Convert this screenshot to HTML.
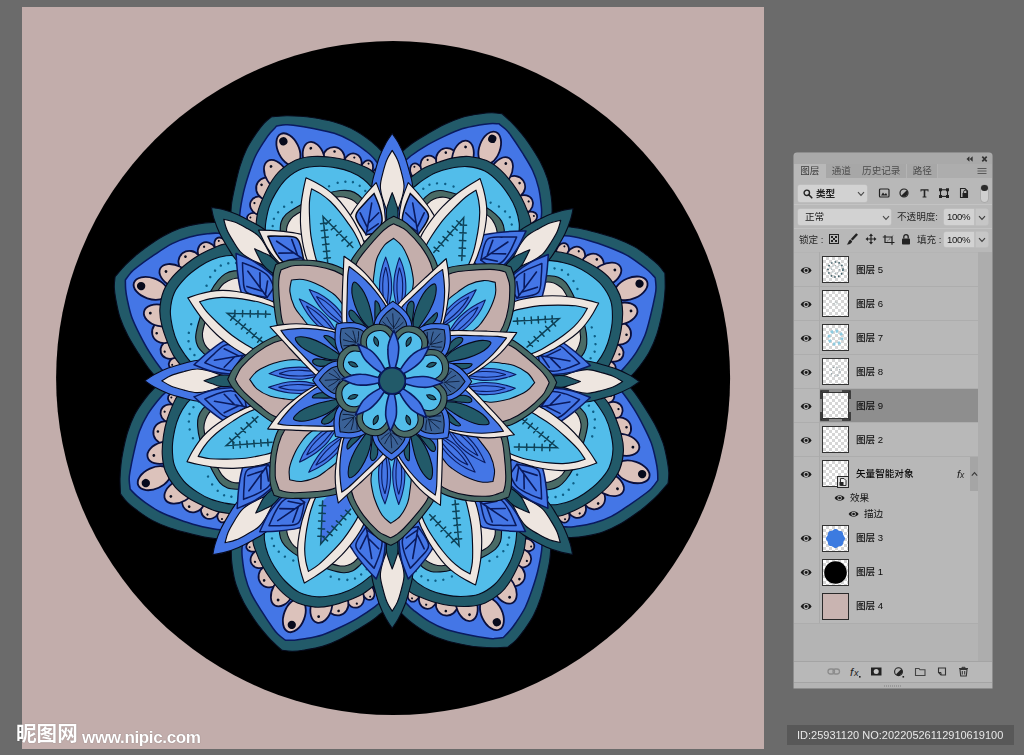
<!DOCTYPE html><html><head><meta charset="utf-8"><title>mandala</title><style>
html,body{margin:0;padding:0}
body{width:1024px;height:755px;background:#6b6b6b;position:relative;overflow:hidden;font-family:"Liberation Sans","Noto Sans CJK SC",sans-serif;font-size:9.5px;color:#151515}
.abs{position:absolute}
.tab,.t,.lname,.wm{will-change:transform}
#canvas{left:22px;top:7px;width:742.3px;height:742.3px;background:#c2adab}
#art{left:0;top:0}
#panel{left:794px;top:153px;width:197.5px;height:535px;background:#b8b8b8;border-radius:3px 3px 0 0;box-shadow:0 0 0 0.5px #b0b0b0}
.tab{top:163.5px;height:14px;line-height:14px;text-align:center;background:#a7a7a7;color:#4c4c4c;box-shadow:inset -1px 0 0 #b4b4b4;font-size:9.6px}
.tab.on{background:#b8b8b8;color:#3a3a3a;box-shadow:none}
.dd{background:#d2d2d2;border-radius:2px;box-shadow:0 0 0 0.5px #c3c3c3}
.sep{height:1px;background:#c3c3c3;left:794px;width:197.5px}

.rsep{left:794px;width:184px;height:1px;background:#adadad}
.thumb{background-color:#fff;background-image:linear-gradient(45deg,#d6d6d6 25%,transparent 25%,transparent 75%,#d6d6d6 75%),linear-gradient(45deg,#d6d6d6 25%,transparent 25%,transparent 75%,#d6d6d6 75%);background-size:6px 6px;background-position:0 0,3px 3px;box-shadow:0 0 0 1px #333;overflow:hidden}
.lname{left:855.5px;height:14px;line-height:14px;white-space:nowrap;font-size:9.6px;color:#0c0c0c;font-weight:500}
.t{white-space:nowrap;line-height:12px}
.wm{color:#fff;white-space:nowrap}
</style></head><body><div id="canvas" class="abs"></div><svg id="art" class="abs" width="1024" height="755" viewBox="0 0 1024 755"><circle cx="393.1" cy="378.1" r="337" fill="#000"/><g transform="translate(392.2 380.8)"><g transform="rotate(22.4)"><path d="M-30 -125C-35 -127.5 -51.7 -133.3 -60 -140C-68.3 -146.7 -75.7 -157 -80 -165C-84.3 -173 -85.3 -181.5 -86 -188C-86.7 -194.5 -85.6 -198.8 -84 -204C-82.4 -209.2 -78.6 -215 -76.6 -218.9C-74.5 -222.8 -74.1 -223.9 -71.7 -227.6C-69.3 -231.3 -65.7 -236.2 -62 -241.1C-58.3 -246 -53.8 -252 -49.5 -256.8C-45.2 -261.6 -40.7 -266.1 -36 -270C-31.3 -273.9 -25.4 -277.4 -21.1 -280C-16.8 -282.6 -13.7 -284.3 -10.2 -285.8C-6.7 -287.3 -1.7 -288.3 0 -288.8C2.3 -287.9 9.7 -285.4 14 -283.5C18.3 -281.6 22.3 -279.5 26 -277.5C29.7 -275.5 31.7 -274.4 36.2 -271.4C40.7 -268.4 48 -263.5 53 -259.3C58 -255.1 62.5 -250.7 66.5 -246C70.5 -241.3 74 -235.6 76.7 -231C79.5 -226.4 81.2 -222.7 83 -218.2C84.8 -213.7 86.3 -209 87.3 -204C88.3 -199 89.7 -194.5 89 -188C88.3 -181.5 87.5 -173 83 -165C78.5 -157 70.5 -146.7 62 -140C53.5 -133.3 37 -127.5 32 -125Z" fill="#225a69" stroke="#070a1c" stroke-width="1.05" stroke-linejoin="round" /><path d="M-48 -140C-51.5 -144.2 -64.6 -156.7 -69 -165C-73.4 -173.3 -73.8 -183.3 -74.5 -190C-75.2 -196.7 -74 -200.9 -73 -205C-72 -209.1 -71.4 -210.1 -68.8 -214.5C-66.2 -218.9 -61.2 -226.2 -57.2 -231.5C-53.2 -236.8 -49 -241.5 -44.7 -246.2C-40.4 -250.9 -36 -255.7 -31.4 -259.6C-26.8 -263.5 -20.7 -267.3 -16.8 -269.8C-12.9 -272.3 -10.9 -273.4 -8 -274.8C-5.1 -276.2 -0.9 -277.7 0.5 -278.3C1.9 -277.9 6.4 -276.8 9 -275.8C11.6 -274.8 11.9 -274.8 16 -272.2C20.1 -269.6 28 -264.3 33.6 -260.3C39.2 -256.3 45 -252.3 49.7 -248C54.4 -243.7 58.3 -239 61.8 -234.2C65.3 -229.4 68.6 -223.3 70.8 -219.2C73 -215.1 73.9 -213.6 75 -209.6C76.1 -205.6 77.6 -202.4 77.3 -195C77 -187.6 77.2 -174.2 73 -165C68.8 -155.8 55.5 -144.2 52 -140Z" fill="#4476e6" stroke="#0a1a5e" stroke-width="1.5" stroke-linejoin="round" /><g transform="translate(71.5 -193.4) rotate(55)"><ellipse rx="4.6" ry="7" fill="#dcc2bb" stroke="#0a0f3c" stroke-width="1.75"/><circle cy="-4.3" r="0.9" fill="#070a1c"/></g><g transform="translate(-64.3 -193.4) rotate(-55)"><ellipse rx="4.6" ry="7" fill="#dcc2bb" stroke="#0a0f3c" stroke-width="1.75"/><circle cy="-4.3" r="0.9" fill="#070a1c"/></g><g transform="translate(64.4 -202.7) rotate(46)"><ellipse rx="6" ry="8.5" fill="#dcc2bb" stroke="#0a0f3c" stroke-width="1.75"/><circle cy="-5.3" r="1" fill="#070a1c"/></g><g transform="translate(-57.2 -202.7) rotate(-46)"><ellipse rx="6" ry="8.5" fill="#dcc2bb" stroke="#0a0f3c" stroke-width="1.75"/><circle cy="-5.3" r="1" fill="#070a1c"/></g><g transform="translate(53.7 -212.9) rotate(40)"><ellipse rx="9" ry="10.3" fill="#dcc2bb" stroke="#0a0f3c" stroke-width="1.75"/><circle cy="-6.4" r="1.1" fill="#070a1c"/></g><g transform="translate(-47.3 -212.9) rotate(-40)"><ellipse rx="9" ry="10.3" fill="#dcc2bb" stroke="#0a0f3c" stroke-width="1.75"/><circle cy="-6.4" r="1.1" fill="#070a1c"/></g><g transform="translate(38.6 -225.3) rotate(32)"><ellipse rx="11" ry="11.6" fill="#dcc2bb" stroke="#0a0f3c" stroke-width="1.75"/><circle cy="-7.2" r="1.3" fill="#070a1c"/></g><g transform="translate(-33.6 -225.3) rotate(-32)"><ellipse rx="11" ry="11.6" fill="#dcc2bb" stroke="#0a0f3c" stroke-width="1.75"/><circle cy="-7.2" r="1.3" fill="#070a1c"/></g><g transform="translate(21 -234) rotate(7)"><ellipse rx="10.4" ry="16.5" fill="#dcc2bb" stroke="#0a0f3c" stroke-width="1.75"/><circle cy="-10.2" r="1.4" fill="#070a1c"/></g><g transform="translate(-20 -234) rotate(-7)"><ellipse rx="10.4" ry="16.5" fill="#dcc2bb" stroke="#0a0f3c" stroke-width="1.75"/><circle cy="-10.2" r="1.4" fill="#070a1c"/></g><ellipse cx="1.5" cy="-252.3" rx="10.3" ry="17.2" transform="rotate(-2 1.5 -252.3)" fill="#dcc2bb" stroke="#0a0f3c" stroke-width="1.8"/><circle cx="0.3" cy="-261.8" r="4.1" fill="#070a1c"/><path d="M-42 -130C-45.5 -133.3 -58.7 -143.3 -63 -150C-67.3 -156.7 -67.5 -164.2 -68 -170C-68.5 -175.8 -67.3 -180.8 -66 -185C-64.7 -189.2 -62.5 -191.5 -60.2 -195.3C-57.9 -199.2 -55.1 -204.4 -52.2 -208.1C-49.3 -211.8 -46.7 -214.2 -42.8 -217.7C-38.9 -221.2 -33.3 -226.1 -28.6 -229.3C-23.9 -232.5 -19.8 -235 -14.5 -236.7C-9.2 -238.4 -2.5 -239.7 3.3 -239.6C9.1 -239.5 14.4 -238.1 20 -236.1C25.6 -234.1 31.7 -230.8 36.7 -227.8C41.7 -224.8 46.1 -221.6 50.2 -218.2C54.3 -214.8 58.5 -210.5 61.3 -207.5C64.1 -204.5 65.3 -203.7 67.1 -200.4C68.9 -197.2 70.8 -192.7 72 -188C73.2 -183.3 74.5 -178.3 74 -172C73.5 -165.7 73.3 -157 69 -150C64.7 -143 51.5 -133.3 48 -130Z" fill="#225a69" stroke="#070a1c" stroke-width="1.1" stroke-linejoin="round" /><path d="M-36 -135C-38.7 -137.8 -48.5 -146.2 -52 -152C-55.5 -157.8 -56.3 -165 -57 -170C-57.7 -175 -56.7 -178.8 -56 -182C-55.3 -185.2 -54.2 -186.3 -52.8 -188.9C-51.4 -191.5 -50.1 -194.3 -47.8 -197.6C-45.5 -200.9 -42.4 -205.4 -39.1 -208.8C-35.8 -212.2 -32.3 -215.2 -27.8 -218.2C-23.3 -221.2 -17.8 -224.8 -12.2 -226.6C-6.6 -228.4 -0.2 -229.6 5.7 -229.2C11.6 -228.8 17.6 -226.4 23 -224.1C28.4 -221.8 33.9 -218.1 38.2 -215.1C42.5 -212.1 45.4 -209.5 48.6 -206.1C51.8 -202.7 55.1 -198.1 57.2 -194.4C59.3 -190.7 60 -187.9 61 -184C62 -180.1 63.3 -176.3 63 -171C62.7 -165.7 62.5 -158 59 -152C55.5 -146 44.8 -137.8 42 -135Z" fill="#52bdea" stroke="#070a1c" stroke-width="1.1" stroke-linejoin="round" /><circle cx="-44.4" cy="-189.4" r="1.2" fill="#0e5f86"/><circle cx="-40.3" cy="-195.5" r="1.2" fill="#0e5f86"/><circle cx="-33.8" cy="-199.6" r="1.2" fill="#0e5f86"/><circle cx="-26" cy="-202.2" r="1.2" fill="#0e5f86"/><circle cx="-17.3" cy="-203" r="1.2" fill="#0e5f86"/><circle cx="23.1" cy="-202.2" r="1.2" fill="#0e5f86"/><circle cx="32.3" cy="-201.8" r="1.2" fill="#0e5f86"/><circle cx="39.8" cy="-199.6" r="1.2" fill="#0e5f86"/><circle cx="46.4" cy="-196.1" r="1.2" fill="#0e5f86"/><circle cx="51" cy="-190" r="1.2" fill="#0e5f86"/><circle cx="-47.5" cy="-182.5" r="1.2" fill="#0e5f86"/><circle cx="54" cy="-183" r="1.2" fill="#0e5f86"/><path d="M-42 -160C-41.9 -162.5 -41.9 -171.3 -41.5 -175C-41.1 -178.7 -40.6 -179.6 -39.5 -182C-38.4 -184.4 -37 -187.5 -35 -189.6C-33 -191.7 -31 -193.3 -27.5 -194.5C-24 -195.7 -19.1 -196.3 -14 -196.8C-8.9 -197.3 -2.7 -197.4 3 -197.3C8.7 -197.2 15.2 -196.9 20 -196.3C24.8 -195.7 28.5 -194.7 31.9 -193.5C35.3 -192.3 37.9 -191.2 40.3 -189.3C42.7 -187.4 44.7 -184.8 46.1 -182.2C47.5 -179.6 48 -177.7 48.5 -174C49 -170.3 48.9 -162.3 49 -160Z" fill="#4a6b66" stroke="#070a1c" stroke-width="1.1" stroke-linejoin="round" /><path d="M-36 -160C-35.9 -162.3 -36 -170.5 -35.5 -174C-35 -177.5 -34.2 -179 -33 -181C-31.8 -183 -30.3 -184.6 -28.5 -186C-26.7 -187.4 -24.9 -188.7 -22 -189.5C-19.1 -190.3 -15.2 -190.7 -11 -191C-6.8 -191.3 -1.7 -191.5 3 -191.5C7.7 -191.5 12.8 -191.3 17 -190.8C21.2 -190.3 25 -189.6 28 -188.5C31 -187.4 33 -185.8 35 -184C37 -182.2 38.8 -180.3 40 -178C41.2 -175.7 42 -173 42.5 -170C43 -167 42.9 -161.7 43 -160Z" fill="#eee6e0" stroke="#070a1c" stroke-width="1.1" stroke-linejoin="round" /></g><g transform="rotate(68.5) scale(1.015)"><path d="M-30 -125C-35 -127.5 -51.7 -133.3 -60 -140C-68.3 -146.7 -75.7 -157 -80 -165C-84.3 -173 -85.3 -181.5 -86 -188C-86.7 -194.5 -85.6 -198.8 -84 -204C-82.4 -209.2 -78.6 -215 -76.6 -218.9C-74.5 -222.8 -74.1 -223.9 -71.7 -227.6C-69.3 -231.3 -65.7 -236.2 -62 -241.1C-58.3 -246 -53.8 -252 -49.5 -256.8C-45.2 -261.6 -40.7 -266.1 -36 -270C-31.3 -273.9 -25.4 -277.4 -21.1 -280C-16.8 -282.6 -13.7 -284.3 -10.2 -285.8C-6.7 -287.3 -1.7 -288.3 0 -288.8C2.3 -287.9 9.7 -285.4 14 -283.5C18.3 -281.6 22.3 -279.5 26 -277.5C29.7 -275.5 31.7 -274.4 36.2 -271.4C40.7 -268.4 48 -263.5 53 -259.3C58 -255.1 62.5 -250.7 66.5 -246C70.5 -241.3 74 -235.6 76.7 -231C79.5 -226.4 81.2 -222.7 83 -218.2C84.8 -213.7 86.3 -209 87.3 -204C88.3 -199 89.7 -194.5 89 -188C88.3 -181.5 87.5 -173 83 -165C78.5 -157 70.5 -146.7 62 -140C53.5 -133.3 37 -127.5 32 -125Z" fill="#225a69" stroke="#070a1c" stroke-width="1.05" stroke-linejoin="round" /><path d="M-48 -140C-51.5 -144.2 -64.6 -156.7 -69 -165C-73.4 -173.3 -73.8 -183.3 -74.5 -190C-75.2 -196.7 -74 -200.9 -73 -205C-72 -209.1 -71.4 -210.1 -68.8 -214.5C-66.2 -218.9 -61.2 -226.2 -57.2 -231.5C-53.2 -236.8 -49 -241.5 -44.7 -246.2C-40.4 -250.9 -36 -255.7 -31.4 -259.6C-26.8 -263.5 -20.7 -267.3 -16.8 -269.8C-12.9 -272.3 -10.9 -273.4 -8 -274.8C-5.1 -276.2 -0.9 -277.7 0.5 -278.3C1.9 -277.9 6.4 -276.8 9 -275.8C11.6 -274.8 11.9 -274.8 16 -272.2C20.1 -269.6 28 -264.3 33.6 -260.3C39.2 -256.3 45 -252.3 49.7 -248C54.4 -243.7 58.3 -239 61.8 -234.2C65.3 -229.4 68.6 -223.3 70.8 -219.2C73 -215.1 73.9 -213.6 75 -209.6C76.1 -205.6 77.6 -202.4 77.3 -195C77 -187.6 77.2 -174.2 73 -165C68.8 -155.8 55.5 -144.2 52 -140Z" fill="#4476e6" stroke="#0a1a5e" stroke-width="1.5" stroke-linejoin="round" /><g transform="translate(71.5 -193.4) rotate(55)"><ellipse rx="4.6" ry="7" fill="#dcc2bb" stroke="#0a0f3c" stroke-width="1.75"/><circle cy="-4.3" r="0.9" fill="#070a1c"/></g><g transform="translate(-64.3 -193.4) rotate(-55)"><ellipse rx="4.6" ry="7" fill="#dcc2bb" stroke="#0a0f3c" stroke-width="1.75"/><circle cy="-4.3" r="0.9" fill="#070a1c"/></g><g transform="translate(64.4 -202.7) rotate(46)"><ellipse rx="6" ry="8.5" fill="#dcc2bb" stroke="#0a0f3c" stroke-width="1.75"/><circle cy="-5.3" r="1" fill="#070a1c"/></g><g transform="translate(-57.2 -202.7) rotate(-46)"><ellipse rx="6" ry="8.5" fill="#dcc2bb" stroke="#0a0f3c" stroke-width="1.75"/><circle cy="-5.3" r="1" fill="#070a1c"/></g><g transform="translate(53.7 -212.9) rotate(40)"><ellipse rx="9" ry="10.3" fill="#dcc2bb" stroke="#0a0f3c" stroke-width="1.75"/><circle cy="-6.4" r="1.1" fill="#070a1c"/></g><g transform="translate(-47.3 -212.9) rotate(-40)"><ellipse rx="9" ry="10.3" fill="#dcc2bb" stroke="#0a0f3c" stroke-width="1.75"/><circle cy="-6.4" r="1.1" fill="#070a1c"/></g><g transform="translate(38.6 -225.3) rotate(32)"><ellipse rx="11" ry="11.6" fill="#dcc2bb" stroke="#0a0f3c" stroke-width="1.75"/><circle cy="-7.2" r="1.3" fill="#070a1c"/></g><g transform="translate(-33.6 -225.3) rotate(-32)"><ellipse rx="11" ry="11.6" fill="#dcc2bb" stroke="#0a0f3c" stroke-width="1.75"/><circle cy="-7.2" r="1.3" fill="#070a1c"/></g><g transform="translate(21 -234) rotate(7)"><ellipse rx="10.4" ry="16.5" fill="#dcc2bb" stroke="#0a0f3c" stroke-width="1.75"/><circle cy="-10.2" r="1.4" fill="#070a1c"/></g><g transform="translate(-20 -234) rotate(-7)"><ellipse rx="10.4" ry="16.5" fill="#dcc2bb" stroke="#0a0f3c" stroke-width="1.75"/><circle cy="-10.2" r="1.4" fill="#070a1c"/></g><ellipse cx="1.5" cy="-252.3" rx="10.3" ry="17.2" transform="rotate(-2 1.5 -252.3)" fill="#dcc2bb" stroke="#0a0f3c" stroke-width="1.8"/><circle cx="0.3" cy="-261.8" r="4.1" fill="#070a1c"/><path d="M-42 -130C-45.5 -133.3 -58.7 -143.3 -63 -150C-67.3 -156.7 -67.5 -164.2 -68 -170C-68.5 -175.8 -67.3 -180.8 -66 -185C-64.7 -189.2 -62.5 -191.5 -60.2 -195.3C-57.9 -199.2 -55.1 -204.4 -52.2 -208.1C-49.3 -211.8 -46.7 -214.2 -42.8 -217.7C-38.9 -221.2 -33.3 -226.1 -28.6 -229.3C-23.9 -232.5 -19.8 -235 -14.5 -236.7C-9.2 -238.4 -2.5 -239.7 3.3 -239.6C9.1 -239.5 14.4 -238.1 20 -236.1C25.6 -234.1 31.7 -230.8 36.7 -227.8C41.7 -224.8 46.1 -221.6 50.2 -218.2C54.3 -214.8 58.5 -210.5 61.3 -207.5C64.1 -204.5 65.3 -203.7 67.1 -200.4C68.9 -197.2 70.8 -192.7 72 -188C73.2 -183.3 74.5 -178.3 74 -172C73.5 -165.7 73.3 -157 69 -150C64.7 -143 51.5 -133.3 48 -130Z" fill="#225a69" stroke="#070a1c" stroke-width="1.1" stroke-linejoin="round" /><path d="M-36 -135C-38.7 -137.8 -48.5 -146.2 -52 -152C-55.5 -157.8 -56.3 -165 -57 -170C-57.7 -175 -56.7 -178.8 -56 -182C-55.3 -185.2 -54.2 -186.3 -52.8 -188.9C-51.4 -191.5 -50.1 -194.3 -47.8 -197.6C-45.5 -200.9 -42.4 -205.4 -39.1 -208.8C-35.8 -212.2 -32.3 -215.2 -27.8 -218.2C-23.3 -221.2 -17.8 -224.8 -12.2 -226.6C-6.6 -228.4 -0.2 -229.6 5.7 -229.2C11.6 -228.8 17.6 -226.4 23 -224.1C28.4 -221.8 33.9 -218.1 38.2 -215.1C42.5 -212.1 45.4 -209.5 48.6 -206.1C51.8 -202.7 55.1 -198.1 57.2 -194.4C59.3 -190.7 60 -187.9 61 -184C62 -180.1 63.3 -176.3 63 -171C62.7 -165.7 62.5 -158 59 -152C55.5 -146 44.8 -137.8 42 -135Z" fill="#52bdea" stroke="#070a1c" stroke-width="1.1" stroke-linejoin="round" /><circle cx="-44.4" cy="-189.4" r="1.2" fill="#0e5f86"/><circle cx="-40.3" cy="-195.5" r="1.2" fill="#0e5f86"/><circle cx="-33.8" cy="-199.6" r="1.2" fill="#0e5f86"/><circle cx="-26" cy="-202.2" r="1.2" fill="#0e5f86"/><circle cx="-17.3" cy="-203" r="1.2" fill="#0e5f86"/><circle cx="23.1" cy="-202.2" r="1.2" fill="#0e5f86"/><circle cx="32.3" cy="-201.8" r="1.2" fill="#0e5f86"/><circle cx="39.8" cy="-199.6" r="1.2" fill="#0e5f86"/><circle cx="46.4" cy="-196.1" r="1.2" fill="#0e5f86"/><circle cx="51" cy="-190" r="1.2" fill="#0e5f86"/><circle cx="-47.5" cy="-182.5" r="1.2" fill="#0e5f86"/><circle cx="54" cy="-183" r="1.2" fill="#0e5f86"/><path d="M-42 -160C-41.9 -162.5 -41.9 -171.3 -41.5 -175C-41.1 -178.7 -40.6 -179.6 -39.5 -182C-38.4 -184.4 -37 -187.5 -35 -189.6C-33 -191.7 -31 -193.3 -27.5 -194.5C-24 -195.7 -19.1 -196.3 -14 -196.8C-8.9 -197.3 -2.7 -197.4 3 -197.3C8.7 -197.2 15.2 -196.9 20 -196.3C24.8 -195.7 28.5 -194.7 31.9 -193.5C35.3 -192.3 37.9 -191.2 40.3 -189.3C42.7 -187.4 44.7 -184.8 46.1 -182.2C47.5 -179.6 48 -177.7 48.5 -174C49 -170.3 48.9 -162.3 49 -160Z" fill="#4a6b66" stroke="#070a1c" stroke-width="1.1" stroke-linejoin="round" /><path d="M-36 -160C-35.9 -162.3 -36 -170.5 -35.5 -174C-35 -177.5 -34.2 -179 -33 -181C-31.8 -183 -30.3 -184.6 -28.5 -186C-26.7 -187.4 -24.9 -188.7 -22 -189.5C-19.1 -190.3 -15.2 -190.7 -11 -191C-6.8 -191.3 -1.7 -191.5 3 -191.5C7.7 -191.5 12.8 -191.3 17 -190.8C21.2 -190.3 25 -189.6 28 -188.5C31 -187.4 33 -185.8 35 -184C37 -182.2 38.8 -180.3 40 -178C41.2 -175.7 42 -173 42.5 -170C43 -167 42.9 -161.7 43 -160Z" fill="#eee6e0" stroke="#070a1c" stroke-width="1.1" stroke-linejoin="round" /></g><g transform="rotate(110.4) scale(1.019)"><path d="M-30 -125C-35 -127.5 -51.7 -133.3 -60 -140C-68.3 -146.7 -75.7 -157 -80 -165C-84.3 -173 -85.3 -181.5 -86 -188C-86.7 -194.5 -85.6 -198.8 -84 -204C-82.4 -209.2 -78.6 -215 -76.6 -218.9C-74.5 -222.8 -74.1 -223.9 -71.7 -227.6C-69.3 -231.3 -65.7 -236.2 -62 -241.1C-58.3 -246 -53.8 -252 -49.5 -256.8C-45.2 -261.6 -40.7 -266.1 -36 -270C-31.3 -273.9 -25.4 -277.4 -21.1 -280C-16.8 -282.6 -13.7 -284.3 -10.2 -285.8C-6.7 -287.3 -1.7 -288.3 0 -288.8C2.3 -287.9 9.7 -285.4 14 -283.5C18.3 -281.6 22.3 -279.5 26 -277.5C29.7 -275.5 31.7 -274.4 36.2 -271.4C40.7 -268.4 48 -263.5 53 -259.3C58 -255.1 62.5 -250.7 66.5 -246C70.5 -241.3 74 -235.6 76.7 -231C79.5 -226.4 81.2 -222.7 83 -218.2C84.8 -213.7 86.3 -209 87.3 -204C88.3 -199 89.7 -194.5 89 -188C88.3 -181.5 87.5 -173 83 -165C78.5 -157 70.5 -146.7 62 -140C53.5 -133.3 37 -127.5 32 -125Z" fill="#225a69" stroke="#070a1c" stroke-width="1.05" stroke-linejoin="round" /><path d="M-48 -140C-51.5 -144.2 -64.6 -156.7 -69 -165C-73.4 -173.3 -73.8 -183.3 -74.5 -190C-75.2 -196.7 -74 -200.9 -73 -205C-72 -209.1 -71.4 -210.1 -68.8 -214.5C-66.2 -218.9 -61.2 -226.2 -57.2 -231.5C-53.2 -236.8 -49 -241.5 -44.7 -246.2C-40.4 -250.9 -36 -255.7 -31.4 -259.6C-26.8 -263.5 -20.7 -267.3 -16.8 -269.8C-12.9 -272.3 -10.9 -273.4 -8 -274.8C-5.1 -276.2 -0.9 -277.7 0.5 -278.3C1.9 -277.9 6.4 -276.8 9 -275.8C11.6 -274.8 11.9 -274.8 16 -272.2C20.1 -269.6 28 -264.3 33.6 -260.3C39.2 -256.3 45 -252.3 49.7 -248C54.4 -243.7 58.3 -239 61.8 -234.2C65.3 -229.4 68.6 -223.3 70.8 -219.2C73 -215.1 73.9 -213.6 75 -209.6C76.1 -205.6 77.6 -202.4 77.3 -195C77 -187.6 77.2 -174.2 73 -165C68.8 -155.8 55.5 -144.2 52 -140Z" fill="#4476e6" stroke="#0a1a5e" stroke-width="1.5" stroke-linejoin="round" /><g transform="translate(71.5 -193.4) rotate(55)"><ellipse rx="4.6" ry="7" fill="#dcc2bb" stroke="#0a0f3c" stroke-width="1.75"/><circle cy="-4.3" r="0.9" fill="#070a1c"/></g><g transform="translate(-64.3 -193.4) rotate(-55)"><ellipse rx="4.6" ry="7" fill="#dcc2bb" stroke="#0a0f3c" stroke-width="1.75"/><circle cy="-4.3" r="0.9" fill="#070a1c"/></g><g transform="translate(64.4 -202.7) rotate(46)"><ellipse rx="6" ry="8.5" fill="#dcc2bb" stroke="#0a0f3c" stroke-width="1.75"/><circle cy="-5.3" r="1" fill="#070a1c"/></g><g transform="translate(-57.2 -202.7) rotate(-46)"><ellipse rx="6" ry="8.5" fill="#dcc2bb" stroke="#0a0f3c" stroke-width="1.75"/><circle cy="-5.3" r="1" fill="#070a1c"/></g><g transform="translate(53.7 -212.9) rotate(40)"><ellipse rx="9" ry="10.3" fill="#dcc2bb" stroke="#0a0f3c" stroke-width="1.75"/><circle cy="-6.4" r="1.1" fill="#070a1c"/></g><g transform="translate(-47.3 -212.9) rotate(-40)"><ellipse rx="9" ry="10.3" fill="#dcc2bb" stroke="#0a0f3c" stroke-width="1.75"/><circle cy="-6.4" r="1.1" fill="#070a1c"/></g><g transform="translate(38.6 -225.3) rotate(32)"><ellipse rx="11" ry="11.6" fill="#dcc2bb" stroke="#0a0f3c" stroke-width="1.75"/><circle cy="-7.2" r="1.3" fill="#070a1c"/></g><g transform="translate(-33.6 -225.3) rotate(-32)"><ellipse rx="11" ry="11.6" fill="#dcc2bb" stroke="#0a0f3c" stroke-width="1.75"/><circle cy="-7.2" r="1.3" fill="#070a1c"/></g><g transform="translate(21 -234) rotate(7)"><ellipse rx="10.4" ry="16.5" fill="#dcc2bb" stroke="#0a0f3c" stroke-width="1.75"/><circle cy="-10.2" r="1.4" fill="#070a1c"/></g><g transform="translate(-20 -234) rotate(-7)"><ellipse rx="10.4" ry="16.5" fill="#dcc2bb" stroke="#0a0f3c" stroke-width="1.75"/><circle cy="-10.2" r="1.4" fill="#070a1c"/></g><ellipse cx="1.5" cy="-252.3" rx="10.3" ry="17.2" transform="rotate(-2 1.5 -252.3)" fill="#dcc2bb" stroke="#0a0f3c" stroke-width="1.8"/><circle cx="0.3" cy="-261.8" r="4.1" fill="#070a1c"/><path d="M-42 -130C-45.5 -133.3 -58.7 -143.3 -63 -150C-67.3 -156.7 -67.5 -164.2 -68 -170C-68.5 -175.8 -67.3 -180.8 -66 -185C-64.7 -189.2 -62.5 -191.5 -60.2 -195.3C-57.9 -199.2 -55.1 -204.4 -52.2 -208.1C-49.3 -211.8 -46.7 -214.2 -42.8 -217.7C-38.9 -221.2 -33.3 -226.1 -28.6 -229.3C-23.9 -232.5 -19.8 -235 -14.5 -236.7C-9.2 -238.4 -2.5 -239.7 3.3 -239.6C9.1 -239.5 14.4 -238.1 20 -236.1C25.6 -234.1 31.7 -230.8 36.7 -227.8C41.7 -224.8 46.1 -221.6 50.2 -218.2C54.3 -214.8 58.5 -210.5 61.3 -207.5C64.1 -204.5 65.3 -203.7 67.1 -200.4C68.9 -197.2 70.8 -192.7 72 -188C73.2 -183.3 74.5 -178.3 74 -172C73.5 -165.7 73.3 -157 69 -150C64.7 -143 51.5 -133.3 48 -130Z" fill="#225a69" stroke="#070a1c" stroke-width="1.1" stroke-linejoin="round" /><path d="M-36 -135C-38.7 -137.8 -48.5 -146.2 -52 -152C-55.5 -157.8 -56.3 -165 -57 -170C-57.7 -175 -56.7 -178.8 -56 -182C-55.3 -185.2 -54.2 -186.3 -52.8 -188.9C-51.4 -191.5 -50.1 -194.3 -47.8 -197.6C-45.5 -200.9 -42.4 -205.4 -39.1 -208.8C-35.8 -212.2 -32.3 -215.2 -27.8 -218.2C-23.3 -221.2 -17.8 -224.8 -12.2 -226.6C-6.6 -228.4 -0.2 -229.6 5.7 -229.2C11.6 -228.8 17.6 -226.4 23 -224.1C28.4 -221.8 33.9 -218.1 38.2 -215.1C42.5 -212.1 45.4 -209.5 48.6 -206.1C51.8 -202.7 55.1 -198.1 57.2 -194.4C59.3 -190.7 60 -187.9 61 -184C62 -180.1 63.3 -176.3 63 -171C62.7 -165.7 62.5 -158 59 -152C55.5 -146 44.8 -137.8 42 -135Z" fill="#52bdea" stroke="#070a1c" stroke-width="1.1" stroke-linejoin="round" /><circle cx="-44.4" cy="-189.4" r="1.2" fill="#0e5f86"/><circle cx="-40.3" cy="-195.5" r="1.2" fill="#0e5f86"/><circle cx="-33.8" cy="-199.6" r="1.2" fill="#0e5f86"/><circle cx="-26" cy="-202.2" r="1.2" fill="#0e5f86"/><circle cx="-17.3" cy="-203" r="1.2" fill="#0e5f86"/><circle cx="23.1" cy="-202.2" r="1.2" fill="#0e5f86"/><circle cx="32.3" cy="-201.8" r="1.2" fill="#0e5f86"/><circle cx="39.8" cy="-199.6" r="1.2" fill="#0e5f86"/><circle cx="46.4" cy="-196.1" r="1.2" fill="#0e5f86"/><circle cx="51" cy="-190" r="1.2" fill="#0e5f86"/><circle cx="-47.5" cy="-182.5" r="1.2" fill="#0e5f86"/><circle cx="54" cy="-183" r="1.2" fill="#0e5f86"/><path d="M-42 -160C-41.9 -162.5 -41.9 -171.3 -41.5 -175C-41.1 -178.7 -40.6 -179.6 -39.5 -182C-38.4 -184.4 -37 -187.5 -35 -189.6C-33 -191.7 -31 -193.3 -27.5 -194.5C-24 -195.7 -19.1 -196.3 -14 -196.8C-8.9 -197.3 -2.7 -197.4 3 -197.3C8.7 -197.2 15.2 -196.9 20 -196.3C24.8 -195.7 28.5 -194.7 31.9 -193.5C35.3 -192.3 37.9 -191.2 40.3 -189.3C42.7 -187.4 44.7 -184.8 46.1 -182.2C47.5 -179.6 48 -177.7 48.5 -174C49 -170.3 48.9 -162.3 49 -160Z" fill="#4a6b66" stroke="#070a1c" stroke-width="1.1" stroke-linejoin="round" /><path d="M-36 -160C-35.9 -162.3 -36 -170.5 -35.5 -174C-35 -177.5 -34.2 -179 -33 -181C-31.8 -183 -30.3 -184.6 -28.5 -186C-26.7 -187.4 -24.9 -188.7 -22 -189.5C-19.1 -190.3 -15.2 -190.7 -11 -191C-6.8 -191.3 -1.7 -191.5 3 -191.5C7.7 -191.5 12.8 -191.3 17 -190.8C21.2 -190.3 25 -189.6 28 -188.5C31 -187.4 33 -185.8 35 -184C37 -182.2 38.8 -180.3 40 -178C41.2 -175.7 42 -173 42.5 -170C43 -167 42.9 -161.7 43 -160Z" fill="#eee6e0" stroke="#070a1c" stroke-width="1.1" stroke-linejoin="round" /></g><g transform="rotate(156.5) scale(1.005)"><path d="M-30 -125C-35 -127.5 -51.7 -133.3 -60 -140C-68.3 -146.7 -75.7 -157 -80 -165C-84.3 -173 -85.3 -181.5 -86 -188C-86.7 -194.5 -85.6 -198.8 -84 -204C-82.4 -209.2 -78.6 -215 -76.6 -218.9C-74.5 -222.8 -74.1 -223.9 -71.7 -227.6C-69.3 -231.3 -65.7 -236.2 -62 -241.1C-58.3 -246 -53.8 -252 -49.5 -256.8C-45.2 -261.6 -40.7 -266.1 -36 -270C-31.3 -273.9 -25.4 -277.4 -21.1 -280C-16.8 -282.6 -13.7 -284.3 -10.2 -285.8C-6.7 -287.3 -1.7 -288.3 0 -288.8C2.3 -287.9 9.7 -285.4 14 -283.5C18.3 -281.6 22.3 -279.5 26 -277.5C29.7 -275.5 31.7 -274.4 36.2 -271.4C40.7 -268.4 48 -263.5 53 -259.3C58 -255.1 62.5 -250.7 66.5 -246C70.5 -241.3 74 -235.6 76.7 -231C79.5 -226.4 81.2 -222.7 83 -218.2C84.8 -213.7 86.3 -209 87.3 -204C88.3 -199 89.7 -194.5 89 -188C88.3 -181.5 87.5 -173 83 -165C78.5 -157 70.5 -146.7 62 -140C53.5 -133.3 37 -127.5 32 -125Z" fill="#225a69" stroke="#070a1c" stroke-width="1.05" stroke-linejoin="round" /><path d="M-48 -140C-51.5 -144.2 -64.6 -156.7 -69 -165C-73.4 -173.3 -73.8 -183.3 -74.5 -190C-75.2 -196.7 -74 -200.9 -73 -205C-72 -209.1 -71.4 -210.1 -68.8 -214.5C-66.2 -218.9 -61.2 -226.2 -57.2 -231.5C-53.2 -236.8 -49 -241.5 -44.7 -246.2C-40.4 -250.9 -36 -255.7 -31.4 -259.6C-26.8 -263.5 -20.7 -267.3 -16.8 -269.8C-12.9 -272.3 -10.9 -273.4 -8 -274.8C-5.1 -276.2 -0.9 -277.7 0.5 -278.3C1.9 -277.9 6.4 -276.8 9 -275.8C11.6 -274.8 11.9 -274.8 16 -272.2C20.1 -269.6 28 -264.3 33.6 -260.3C39.2 -256.3 45 -252.3 49.7 -248C54.4 -243.7 58.3 -239 61.8 -234.2C65.3 -229.4 68.6 -223.3 70.8 -219.2C73 -215.1 73.9 -213.6 75 -209.6C76.1 -205.6 77.6 -202.4 77.3 -195C77 -187.6 77.2 -174.2 73 -165C68.8 -155.8 55.5 -144.2 52 -140Z" fill="#4476e6" stroke="#0a1a5e" stroke-width="1.5" stroke-linejoin="round" /><g transform="translate(71.5 -193.4) rotate(55)"><ellipse rx="4.6" ry="7" fill="#dcc2bb" stroke="#0a0f3c" stroke-width="1.75"/><circle cy="-4.3" r="0.9" fill="#070a1c"/></g><g transform="translate(-64.3 -193.4) rotate(-55)"><ellipse rx="4.6" ry="7" fill="#dcc2bb" stroke="#0a0f3c" stroke-width="1.75"/><circle cy="-4.3" r="0.9" fill="#070a1c"/></g><g transform="translate(64.4 -202.7) rotate(46)"><ellipse rx="6" ry="8.5" fill="#dcc2bb" stroke="#0a0f3c" stroke-width="1.75"/><circle cy="-5.3" r="1" fill="#070a1c"/></g><g transform="translate(-57.2 -202.7) rotate(-46)"><ellipse rx="6" ry="8.5" fill="#dcc2bb" stroke="#0a0f3c" stroke-width="1.75"/><circle cy="-5.3" r="1" fill="#070a1c"/></g><g transform="translate(53.7 -212.9) rotate(40)"><ellipse rx="9" ry="10.3" fill="#dcc2bb" stroke="#0a0f3c" stroke-width="1.75"/><circle cy="-6.4" r="1.1" fill="#070a1c"/></g><g transform="translate(-47.3 -212.9) rotate(-40)"><ellipse rx="9" ry="10.3" fill="#dcc2bb" stroke="#0a0f3c" stroke-width="1.75"/><circle cy="-6.4" r="1.1" fill="#070a1c"/></g><g transform="translate(38.6 -225.3) rotate(32)"><ellipse rx="11" ry="11.6" fill="#dcc2bb" stroke="#0a0f3c" stroke-width="1.75"/><circle cy="-7.2" r="1.3" fill="#070a1c"/></g><g transform="translate(-33.6 -225.3) rotate(-32)"><ellipse rx="11" ry="11.6" fill="#dcc2bb" stroke="#0a0f3c" stroke-width="1.75"/><circle cy="-7.2" r="1.3" fill="#070a1c"/></g><g transform="translate(21 -234) rotate(7)"><ellipse rx="10.4" ry="16.5" fill="#dcc2bb" stroke="#0a0f3c" stroke-width="1.75"/><circle cy="-10.2" r="1.4" fill="#070a1c"/></g><g transform="translate(-20 -234) rotate(-7)"><ellipse rx="10.4" ry="16.5" fill="#dcc2bb" stroke="#0a0f3c" stroke-width="1.75"/><circle cy="-10.2" r="1.4" fill="#070a1c"/></g><ellipse cx="1.5" cy="-252.3" rx="10.3" ry="17.2" transform="rotate(-2 1.5 -252.3)" fill="#dcc2bb" stroke="#0a0f3c" stroke-width="1.8"/><circle cx="0.3" cy="-261.8" r="4.1" fill="#070a1c"/><path d="M-42 -130C-45.5 -133.3 -58.7 -143.3 -63 -150C-67.3 -156.7 -67.5 -164.2 -68 -170C-68.5 -175.8 -67.3 -180.8 -66 -185C-64.7 -189.2 -62.5 -191.5 -60.2 -195.3C-57.9 -199.2 -55.1 -204.4 -52.2 -208.1C-49.3 -211.8 -46.7 -214.2 -42.8 -217.7C-38.9 -221.2 -33.3 -226.1 -28.6 -229.3C-23.9 -232.5 -19.8 -235 -14.5 -236.7C-9.2 -238.4 -2.5 -239.7 3.3 -239.6C9.1 -239.5 14.4 -238.1 20 -236.1C25.6 -234.1 31.7 -230.8 36.7 -227.8C41.7 -224.8 46.1 -221.6 50.2 -218.2C54.3 -214.8 58.5 -210.5 61.3 -207.5C64.1 -204.5 65.3 -203.7 67.1 -200.4C68.9 -197.2 70.8 -192.7 72 -188C73.2 -183.3 74.5 -178.3 74 -172C73.5 -165.7 73.3 -157 69 -150C64.7 -143 51.5 -133.3 48 -130Z" fill="#225a69" stroke="#070a1c" stroke-width="1.1" stroke-linejoin="round" /><path d="M-36 -135C-38.7 -137.8 -48.5 -146.2 -52 -152C-55.5 -157.8 -56.3 -165 -57 -170C-57.7 -175 -56.7 -178.8 -56 -182C-55.3 -185.2 -54.2 -186.3 -52.8 -188.9C-51.4 -191.5 -50.1 -194.3 -47.8 -197.6C-45.5 -200.9 -42.4 -205.4 -39.1 -208.8C-35.8 -212.2 -32.3 -215.2 -27.8 -218.2C-23.3 -221.2 -17.8 -224.8 -12.2 -226.6C-6.6 -228.4 -0.2 -229.6 5.7 -229.2C11.6 -228.8 17.6 -226.4 23 -224.1C28.4 -221.8 33.9 -218.1 38.2 -215.1C42.5 -212.1 45.4 -209.5 48.6 -206.1C51.8 -202.7 55.1 -198.1 57.2 -194.4C59.3 -190.7 60 -187.9 61 -184C62 -180.1 63.3 -176.3 63 -171C62.7 -165.7 62.5 -158 59 -152C55.5 -146 44.8 -137.8 42 -135Z" fill="#52bdea" stroke="#070a1c" stroke-width="1.1" stroke-linejoin="round" /><circle cx="-44.4" cy="-189.4" r="1.2" fill="#0e5f86"/><circle cx="-40.3" cy="-195.5" r="1.2" fill="#0e5f86"/><circle cx="-33.8" cy="-199.6" r="1.2" fill="#0e5f86"/><circle cx="-26" cy="-202.2" r="1.2" fill="#0e5f86"/><circle cx="-17.3" cy="-203" r="1.2" fill="#0e5f86"/><circle cx="23.1" cy="-202.2" r="1.2" fill="#0e5f86"/><circle cx="32.3" cy="-201.8" r="1.2" fill="#0e5f86"/><circle cx="39.8" cy="-199.6" r="1.2" fill="#0e5f86"/><circle cx="46.4" cy="-196.1" r="1.2" fill="#0e5f86"/><circle cx="51" cy="-190" r="1.2" fill="#0e5f86"/><circle cx="-47.5" cy="-182.5" r="1.2" fill="#0e5f86"/><circle cx="54" cy="-183" r="1.2" fill="#0e5f86"/><path d="M-42 -160C-41.9 -162.5 -41.9 -171.3 -41.5 -175C-41.1 -178.7 -40.6 -179.6 -39.5 -182C-38.4 -184.4 -37 -187.5 -35 -189.6C-33 -191.7 -31 -193.3 -27.5 -194.5C-24 -195.7 -19.1 -196.3 -14 -196.8C-8.9 -197.3 -2.7 -197.4 3 -197.3C8.7 -197.2 15.2 -196.9 20 -196.3C24.8 -195.7 28.5 -194.7 31.9 -193.5C35.3 -192.3 37.9 -191.2 40.3 -189.3C42.7 -187.4 44.7 -184.8 46.1 -182.2C47.5 -179.6 48 -177.7 48.5 -174C49 -170.3 48.9 -162.3 49 -160Z" fill="#4a6b66" stroke="#070a1c" stroke-width="1.1" stroke-linejoin="round" /><path d="M-36 -160C-35.9 -162.3 -36 -170.5 -35.5 -174C-35 -177.5 -34.2 -179 -33 -181C-31.8 -183 -30.3 -184.6 -28.5 -186C-26.7 -187.4 -24.9 -188.7 -22 -189.5C-19.1 -190.3 -15.2 -190.7 -11 -191C-6.8 -191.3 -1.7 -191.5 3 -191.5C7.7 -191.5 12.8 -191.3 17 -190.8C21.2 -190.3 25 -189.6 28 -188.5C31 -187.4 33 -185.8 35 -184C37 -182.2 38.8 -180.3 40 -178C41.2 -175.7 42 -173 42.5 -170C43 -167 42.9 -161.7 43 -160Z" fill="#eee6e0" stroke="#070a1c" stroke-width="1.1" stroke-linejoin="round" /></g><g transform="rotate(202.3) scale(1.008)"><path d="M-30 -125C-35 -127.5 -51.7 -133.3 -60 -140C-68.3 -146.7 -75.7 -157 -80 -165C-84.3 -173 -85.3 -181.5 -86 -188C-86.7 -194.5 -85.6 -198.8 -84 -204C-82.4 -209.2 -78.6 -215 -76.6 -218.9C-74.5 -222.8 -74.1 -223.9 -71.7 -227.6C-69.3 -231.3 -65.7 -236.2 -62 -241.1C-58.3 -246 -53.8 -252 -49.5 -256.8C-45.2 -261.6 -40.7 -266.1 -36 -270C-31.3 -273.9 -25.4 -277.4 -21.1 -280C-16.8 -282.6 -13.7 -284.3 -10.2 -285.8C-6.7 -287.3 -1.7 -288.3 0 -288.8C2.3 -287.9 9.7 -285.4 14 -283.5C18.3 -281.6 22.3 -279.5 26 -277.5C29.7 -275.5 31.7 -274.4 36.2 -271.4C40.7 -268.4 48 -263.5 53 -259.3C58 -255.1 62.5 -250.7 66.5 -246C70.5 -241.3 74 -235.6 76.7 -231C79.5 -226.4 81.2 -222.7 83 -218.2C84.8 -213.7 86.3 -209 87.3 -204C88.3 -199 89.7 -194.5 89 -188C88.3 -181.5 87.5 -173 83 -165C78.5 -157 70.5 -146.7 62 -140C53.5 -133.3 37 -127.5 32 -125Z" fill="#225a69" stroke="#070a1c" stroke-width="1.05" stroke-linejoin="round" /><path d="M-48 -140C-51.5 -144.2 -64.6 -156.7 -69 -165C-73.4 -173.3 -73.8 -183.3 -74.5 -190C-75.2 -196.7 -74 -200.9 -73 -205C-72 -209.1 -71.4 -210.1 -68.8 -214.5C-66.2 -218.9 -61.2 -226.2 -57.2 -231.5C-53.2 -236.8 -49 -241.5 -44.7 -246.2C-40.4 -250.9 -36 -255.7 -31.4 -259.6C-26.8 -263.5 -20.7 -267.3 -16.8 -269.8C-12.9 -272.3 -10.9 -273.4 -8 -274.8C-5.1 -276.2 -0.9 -277.7 0.5 -278.3C1.9 -277.9 6.4 -276.8 9 -275.8C11.6 -274.8 11.9 -274.8 16 -272.2C20.1 -269.6 28 -264.3 33.6 -260.3C39.2 -256.3 45 -252.3 49.7 -248C54.4 -243.7 58.3 -239 61.8 -234.2C65.3 -229.4 68.6 -223.3 70.8 -219.2C73 -215.1 73.9 -213.6 75 -209.6C76.1 -205.6 77.6 -202.4 77.3 -195C77 -187.6 77.2 -174.2 73 -165C68.8 -155.8 55.5 -144.2 52 -140Z" fill="#4476e6" stroke="#0a1a5e" stroke-width="1.5" stroke-linejoin="round" /><g transform="translate(71.5 -193.4) rotate(55)"><ellipse rx="4.6" ry="7" fill="#dcc2bb" stroke="#0a0f3c" stroke-width="1.75"/><circle cy="-4.3" r="0.9" fill="#070a1c"/></g><g transform="translate(-64.3 -193.4) rotate(-55)"><ellipse rx="4.6" ry="7" fill="#dcc2bb" stroke="#0a0f3c" stroke-width="1.75"/><circle cy="-4.3" r="0.9" fill="#070a1c"/></g><g transform="translate(64.4 -202.7) rotate(46)"><ellipse rx="6" ry="8.5" fill="#dcc2bb" stroke="#0a0f3c" stroke-width="1.75"/><circle cy="-5.3" r="1" fill="#070a1c"/></g><g transform="translate(-57.2 -202.7) rotate(-46)"><ellipse rx="6" ry="8.5" fill="#dcc2bb" stroke="#0a0f3c" stroke-width="1.75"/><circle cy="-5.3" r="1" fill="#070a1c"/></g><g transform="translate(53.7 -212.9) rotate(40)"><ellipse rx="9" ry="10.3" fill="#dcc2bb" stroke="#0a0f3c" stroke-width="1.75"/><circle cy="-6.4" r="1.1" fill="#070a1c"/></g><g transform="translate(-47.3 -212.9) rotate(-40)"><ellipse rx="9" ry="10.3" fill="#dcc2bb" stroke="#0a0f3c" stroke-width="1.75"/><circle cy="-6.4" r="1.1" fill="#070a1c"/></g><g transform="translate(38.6 -225.3) rotate(32)"><ellipse rx="11" ry="11.6" fill="#dcc2bb" stroke="#0a0f3c" stroke-width="1.75"/><circle cy="-7.2" r="1.3" fill="#070a1c"/></g><g transform="translate(-33.6 -225.3) rotate(-32)"><ellipse rx="11" ry="11.6" fill="#dcc2bb" stroke="#0a0f3c" stroke-width="1.75"/><circle cy="-7.2" r="1.3" fill="#070a1c"/></g><g transform="translate(21 -234) rotate(7)"><ellipse rx="10.4" ry="16.5" fill="#dcc2bb" stroke="#0a0f3c" stroke-width="1.75"/><circle cy="-10.2" r="1.4" fill="#070a1c"/></g><g transform="translate(-20 -234) rotate(-7)"><ellipse rx="10.4" ry="16.5" fill="#dcc2bb" stroke="#0a0f3c" stroke-width="1.75"/><circle cy="-10.2" r="1.4" fill="#070a1c"/></g><ellipse cx="1.5" cy="-252.3" rx="10.3" ry="17.2" transform="rotate(-2 1.5 -252.3)" fill="#dcc2bb" stroke="#0a0f3c" stroke-width="1.8"/><circle cx="0.3" cy="-261.8" r="4.1" fill="#070a1c"/><path d="M-42 -130C-45.5 -133.3 -58.7 -143.3 -63 -150C-67.3 -156.7 -67.5 -164.2 -68 -170C-68.5 -175.8 -67.3 -180.8 -66 -185C-64.7 -189.2 -62.5 -191.5 -60.2 -195.3C-57.9 -199.2 -55.1 -204.4 -52.2 -208.1C-49.3 -211.8 -46.7 -214.2 -42.8 -217.7C-38.9 -221.2 -33.3 -226.1 -28.6 -229.3C-23.9 -232.5 -19.8 -235 -14.5 -236.7C-9.2 -238.4 -2.5 -239.7 3.3 -239.6C9.1 -239.5 14.4 -238.1 20 -236.1C25.6 -234.1 31.7 -230.8 36.7 -227.8C41.7 -224.8 46.1 -221.6 50.2 -218.2C54.3 -214.8 58.5 -210.5 61.3 -207.5C64.1 -204.5 65.3 -203.7 67.1 -200.4C68.9 -197.2 70.8 -192.7 72 -188C73.2 -183.3 74.5 -178.3 74 -172C73.5 -165.7 73.3 -157 69 -150C64.7 -143 51.5 -133.3 48 -130Z" fill="#225a69" stroke="#070a1c" stroke-width="1.1" stroke-linejoin="round" /><path d="M-36 -135C-38.7 -137.8 -48.5 -146.2 -52 -152C-55.5 -157.8 -56.3 -165 -57 -170C-57.7 -175 -56.7 -178.8 -56 -182C-55.3 -185.2 -54.2 -186.3 -52.8 -188.9C-51.4 -191.5 -50.1 -194.3 -47.8 -197.6C-45.5 -200.9 -42.4 -205.4 -39.1 -208.8C-35.8 -212.2 -32.3 -215.2 -27.8 -218.2C-23.3 -221.2 -17.8 -224.8 -12.2 -226.6C-6.6 -228.4 -0.2 -229.6 5.7 -229.2C11.6 -228.8 17.6 -226.4 23 -224.1C28.4 -221.8 33.9 -218.1 38.2 -215.1C42.5 -212.1 45.4 -209.5 48.6 -206.1C51.8 -202.7 55.1 -198.1 57.2 -194.4C59.3 -190.7 60 -187.9 61 -184C62 -180.1 63.3 -176.3 63 -171C62.7 -165.7 62.5 -158 59 -152C55.5 -146 44.8 -137.8 42 -135Z" fill="#52bdea" stroke="#070a1c" stroke-width="1.1" stroke-linejoin="round" /><circle cx="-44.4" cy="-189.4" r="1.2" fill="#0e5f86"/><circle cx="-40.3" cy="-195.5" r="1.2" fill="#0e5f86"/><circle cx="-33.8" cy="-199.6" r="1.2" fill="#0e5f86"/><circle cx="-26" cy="-202.2" r="1.2" fill="#0e5f86"/><circle cx="-17.3" cy="-203" r="1.2" fill="#0e5f86"/><circle cx="23.1" cy="-202.2" r="1.2" fill="#0e5f86"/><circle cx="32.3" cy="-201.8" r="1.2" fill="#0e5f86"/><circle cx="39.8" cy="-199.6" r="1.2" fill="#0e5f86"/><circle cx="46.4" cy="-196.1" r="1.2" fill="#0e5f86"/><circle cx="51" cy="-190" r="1.2" fill="#0e5f86"/><circle cx="-47.5" cy="-182.5" r="1.2" fill="#0e5f86"/><circle cx="54" cy="-183" r="1.2" fill="#0e5f86"/><path d="M-42 -160C-41.9 -162.5 -41.9 -171.3 -41.5 -175C-41.1 -178.7 -40.6 -179.6 -39.5 -182C-38.4 -184.4 -37 -187.5 -35 -189.6C-33 -191.7 -31 -193.3 -27.5 -194.5C-24 -195.7 -19.1 -196.3 -14 -196.8C-8.9 -197.3 -2.7 -197.4 3 -197.3C8.7 -197.2 15.2 -196.9 20 -196.3C24.8 -195.7 28.5 -194.7 31.9 -193.5C35.3 -192.3 37.9 -191.2 40.3 -189.3C42.7 -187.4 44.7 -184.8 46.1 -182.2C47.5 -179.6 48 -177.7 48.5 -174C49 -170.3 48.9 -162.3 49 -160Z" fill="#4a6b66" stroke="#070a1c" stroke-width="1.1" stroke-linejoin="round" /><path d="M-36 -160C-35.9 -162.3 -36 -170.5 -35.5 -174C-35 -177.5 -34.2 -179 -33 -181C-31.8 -183 -30.3 -184.6 -28.5 -186C-26.7 -187.4 -24.9 -188.7 -22 -189.5C-19.1 -190.3 -15.2 -190.7 -11 -191C-6.8 -191.3 -1.7 -191.5 3 -191.5C7.7 -191.5 12.8 -191.3 17 -190.8C21.2 -190.3 25 -189.6 28 -188.5C31 -187.4 33 -185.8 35 -184C37 -182.2 38.8 -180.3 40 -178C41.2 -175.7 42 -173 42.5 -170C43 -167 42.9 -161.7 43 -160Z" fill="#eee6e0" stroke="#070a1c" stroke-width="1.1" stroke-linejoin="round" /></g><g transform="rotate(247.4) scale(1.019)"><path d="M-30 -125C-35 -127.5 -51.7 -133.3 -60 -140C-68.3 -146.7 -75.7 -157 -80 -165C-84.3 -173 -85.3 -181.5 -86 -188C-86.7 -194.5 -85.6 -198.8 -84 -204C-82.4 -209.2 -78.6 -215 -76.6 -218.9C-74.5 -222.8 -74.1 -223.9 -71.7 -227.6C-69.3 -231.3 -65.7 -236.2 -62 -241.1C-58.3 -246 -53.8 -252 -49.5 -256.8C-45.2 -261.6 -40.7 -266.1 -36 -270C-31.3 -273.9 -25.4 -277.4 -21.1 -280C-16.8 -282.6 -13.7 -284.3 -10.2 -285.8C-6.7 -287.3 -1.7 -288.3 0 -288.8C2.3 -287.9 9.7 -285.4 14 -283.5C18.3 -281.6 22.3 -279.5 26 -277.5C29.7 -275.5 31.7 -274.4 36.2 -271.4C40.7 -268.4 48 -263.5 53 -259.3C58 -255.1 62.5 -250.7 66.5 -246C70.5 -241.3 74 -235.6 76.7 -231C79.5 -226.4 81.2 -222.7 83 -218.2C84.8 -213.7 86.3 -209 87.3 -204C88.3 -199 89.7 -194.5 89 -188C88.3 -181.5 87.5 -173 83 -165C78.5 -157 70.5 -146.7 62 -140C53.5 -133.3 37 -127.5 32 -125Z" fill="#225a69" stroke="#070a1c" stroke-width="1.05" stroke-linejoin="round" /><path d="M-48 -140C-51.5 -144.2 -64.6 -156.7 -69 -165C-73.4 -173.3 -73.8 -183.3 -74.5 -190C-75.2 -196.7 -74 -200.9 -73 -205C-72 -209.1 -71.4 -210.1 -68.8 -214.5C-66.2 -218.9 -61.2 -226.2 -57.2 -231.5C-53.2 -236.8 -49 -241.5 -44.7 -246.2C-40.4 -250.9 -36 -255.7 -31.4 -259.6C-26.8 -263.5 -20.7 -267.3 -16.8 -269.8C-12.9 -272.3 -10.9 -273.4 -8 -274.8C-5.1 -276.2 -0.9 -277.7 0.5 -278.3C1.9 -277.9 6.4 -276.8 9 -275.8C11.6 -274.8 11.9 -274.8 16 -272.2C20.1 -269.6 28 -264.3 33.6 -260.3C39.2 -256.3 45 -252.3 49.7 -248C54.4 -243.7 58.3 -239 61.8 -234.2C65.3 -229.4 68.6 -223.3 70.8 -219.2C73 -215.1 73.9 -213.6 75 -209.6C76.1 -205.6 77.6 -202.4 77.3 -195C77 -187.6 77.2 -174.2 73 -165C68.8 -155.8 55.5 -144.2 52 -140Z" fill="#4476e6" stroke="#0a1a5e" stroke-width="1.5" stroke-linejoin="round" /><g transform="translate(71.5 -193.4) rotate(55)"><ellipse rx="4.6" ry="7" fill="#dcc2bb" stroke="#0a0f3c" stroke-width="1.75"/><circle cy="-4.3" r="0.9" fill="#070a1c"/></g><g transform="translate(-64.3 -193.4) rotate(-55)"><ellipse rx="4.6" ry="7" fill="#dcc2bb" stroke="#0a0f3c" stroke-width="1.75"/><circle cy="-4.3" r="0.9" fill="#070a1c"/></g><g transform="translate(64.4 -202.7) rotate(46)"><ellipse rx="6" ry="8.5" fill="#dcc2bb" stroke="#0a0f3c" stroke-width="1.75"/><circle cy="-5.3" r="1" fill="#070a1c"/></g><g transform="translate(-57.2 -202.7) rotate(-46)"><ellipse rx="6" ry="8.5" fill="#dcc2bb" stroke="#0a0f3c" stroke-width="1.75"/><circle cy="-5.3" r="1" fill="#070a1c"/></g><g transform="translate(53.7 -212.9) rotate(40)"><ellipse rx="9" ry="10.3" fill="#dcc2bb" stroke="#0a0f3c" stroke-width="1.75"/><circle cy="-6.4" r="1.1" fill="#070a1c"/></g><g transform="translate(-47.3 -212.9) rotate(-40)"><ellipse rx="9" ry="10.3" fill="#dcc2bb" stroke="#0a0f3c" stroke-width="1.75"/><circle cy="-6.4" r="1.1" fill="#070a1c"/></g><g transform="translate(38.6 -225.3) rotate(32)"><ellipse rx="11" ry="11.6" fill="#dcc2bb" stroke="#0a0f3c" stroke-width="1.75"/><circle cy="-7.2" r="1.3" fill="#070a1c"/></g><g transform="translate(-33.6 -225.3) rotate(-32)"><ellipse rx="11" ry="11.6" fill="#dcc2bb" stroke="#0a0f3c" stroke-width="1.75"/><circle cy="-7.2" r="1.3" fill="#070a1c"/></g><g transform="translate(21 -234) rotate(7)"><ellipse rx="10.4" ry="16.5" fill="#dcc2bb" stroke="#0a0f3c" stroke-width="1.75"/><circle cy="-10.2" r="1.4" fill="#070a1c"/></g><g transform="translate(-20 -234) rotate(-7)"><ellipse rx="10.4" ry="16.5" fill="#dcc2bb" stroke="#0a0f3c" stroke-width="1.75"/><circle cy="-10.2" r="1.4" fill="#070a1c"/></g><ellipse cx="1.5" cy="-252.3" rx="10.3" ry="17.2" transform="rotate(-2 1.5 -252.3)" fill="#dcc2bb" stroke="#0a0f3c" stroke-width="1.8"/><circle cx="0.3" cy="-261.8" r="4.1" fill="#070a1c"/><path d="M-42 -130C-45.5 -133.3 -58.7 -143.3 -63 -150C-67.3 -156.7 -67.5 -164.2 -68 -170C-68.5 -175.8 -67.3 -180.8 -66 -185C-64.7 -189.2 -62.5 -191.5 -60.2 -195.3C-57.9 -199.2 -55.1 -204.4 -52.2 -208.1C-49.3 -211.8 -46.7 -214.2 -42.8 -217.7C-38.9 -221.2 -33.3 -226.1 -28.6 -229.3C-23.9 -232.5 -19.8 -235 -14.5 -236.7C-9.2 -238.4 -2.5 -239.7 3.3 -239.6C9.1 -239.5 14.4 -238.1 20 -236.1C25.6 -234.1 31.7 -230.8 36.7 -227.8C41.7 -224.8 46.1 -221.6 50.2 -218.2C54.3 -214.8 58.5 -210.5 61.3 -207.5C64.1 -204.5 65.3 -203.7 67.1 -200.4C68.9 -197.2 70.8 -192.7 72 -188C73.2 -183.3 74.5 -178.3 74 -172C73.5 -165.7 73.3 -157 69 -150C64.7 -143 51.5 -133.3 48 -130Z" fill="#225a69" stroke="#070a1c" stroke-width="1.1" stroke-linejoin="round" /><path d="M-36 -135C-38.7 -137.8 -48.5 -146.2 -52 -152C-55.5 -157.8 -56.3 -165 -57 -170C-57.7 -175 -56.7 -178.8 -56 -182C-55.3 -185.2 -54.2 -186.3 -52.8 -188.9C-51.4 -191.5 -50.1 -194.3 -47.8 -197.6C-45.5 -200.9 -42.4 -205.4 -39.1 -208.8C-35.8 -212.2 -32.3 -215.2 -27.8 -218.2C-23.3 -221.2 -17.8 -224.8 -12.2 -226.6C-6.6 -228.4 -0.2 -229.6 5.7 -229.2C11.6 -228.8 17.6 -226.4 23 -224.1C28.4 -221.8 33.9 -218.1 38.2 -215.1C42.5 -212.1 45.4 -209.5 48.6 -206.1C51.8 -202.7 55.1 -198.1 57.2 -194.4C59.3 -190.7 60 -187.9 61 -184C62 -180.1 63.3 -176.3 63 -171C62.7 -165.7 62.5 -158 59 -152C55.5 -146 44.8 -137.8 42 -135Z" fill="#52bdea" stroke="#070a1c" stroke-width="1.1" stroke-linejoin="round" /><circle cx="-44.4" cy="-189.4" r="1.2" fill="#0e5f86"/><circle cx="-40.3" cy="-195.5" r="1.2" fill="#0e5f86"/><circle cx="-33.8" cy="-199.6" r="1.2" fill="#0e5f86"/><circle cx="-26" cy="-202.2" r="1.2" fill="#0e5f86"/><circle cx="-17.3" cy="-203" r="1.2" fill="#0e5f86"/><circle cx="23.1" cy="-202.2" r="1.2" fill="#0e5f86"/><circle cx="32.3" cy="-201.8" r="1.2" fill="#0e5f86"/><circle cx="39.8" cy="-199.6" r="1.2" fill="#0e5f86"/><circle cx="46.4" cy="-196.1" r="1.2" fill="#0e5f86"/><circle cx="51" cy="-190" r="1.2" fill="#0e5f86"/><circle cx="-47.5" cy="-182.5" r="1.2" fill="#0e5f86"/><circle cx="54" cy="-183" r="1.2" fill="#0e5f86"/><path d="M-42 -160C-41.9 -162.5 -41.9 -171.3 -41.5 -175C-41.1 -178.7 -40.6 -179.6 -39.5 -182C-38.4 -184.4 -37 -187.5 -35 -189.6C-33 -191.7 -31 -193.3 -27.5 -194.5C-24 -195.7 -19.1 -196.3 -14 -196.8C-8.9 -197.3 -2.7 -197.4 3 -197.3C8.7 -197.2 15.2 -196.9 20 -196.3C24.8 -195.7 28.5 -194.7 31.9 -193.5C35.3 -192.3 37.9 -191.2 40.3 -189.3C42.7 -187.4 44.7 -184.8 46.1 -182.2C47.5 -179.6 48 -177.7 48.5 -174C49 -170.3 48.9 -162.3 49 -160Z" fill="#4a6b66" stroke="#070a1c" stroke-width="1.1" stroke-linejoin="round" /><path d="M-36 -160C-35.9 -162.3 -36 -170.5 -35.5 -174C-35 -177.5 -34.2 -179 -33 -181C-31.8 -183 -30.3 -184.6 -28.5 -186C-26.7 -187.4 -24.9 -188.7 -22 -189.5C-19.1 -190.3 -15.2 -190.7 -11 -191C-6.8 -191.3 -1.7 -191.5 3 -191.5C7.7 -191.5 12.8 -191.3 17 -190.8C21.2 -190.3 25 -189.6 28 -188.5C31 -187.4 33 -185.8 35 -184C37 -182.2 38.8 -180.3 40 -178C41.2 -175.7 42 -173 42.5 -170C43 -167 42.9 -161.7 43 -160Z" fill="#eee6e0" stroke="#070a1c" stroke-width="1.1" stroke-linejoin="round" /></g><g transform="rotate(290.6) scale(1.025)"><path d="M-30 -125C-35 -127.5 -51.7 -133.3 -60 -140C-68.3 -146.7 -75.7 -157 -80 -165C-84.3 -173 -85.3 -181.5 -86 -188C-86.7 -194.5 -85.6 -198.8 -84 -204C-82.4 -209.2 -78.6 -215 -76.6 -218.9C-74.5 -222.8 -74.1 -223.9 -71.7 -227.6C-69.3 -231.3 -65.7 -236.2 -62 -241.1C-58.3 -246 -53.8 -252 -49.5 -256.8C-45.2 -261.6 -40.7 -266.1 -36 -270C-31.3 -273.9 -25.4 -277.4 -21.1 -280C-16.8 -282.6 -13.7 -284.3 -10.2 -285.8C-6.7 -287.3 -1.7 -288.3 0 -288.8C2.3 -287.9 9.7 -285.4 14 -283.5C18.3 -281.6 22.3 -279.5 26 -277.5C29.7 -275.5 31.7 -274.4 36.2 -271.4C40.7 -268.4 48 -263.5 53 -259.3C58 -255.1 62.5 -250.7 66.5 -246C70.5 -241.3 74 -235.6 76.7 -231C79.5 -226.4 81.2 -222.7 83 -218.2C84.8 -213.7 86.3 -209 87.3 -204C88.3 -199 89.7 -194.5 89 -188C88.3 -181.5 87.5 -173 83 -165C78.5 -157 70.5 -146.7 62 -140C53.5 -133.3 37 -127.5 32 -125Z" fill="#225a69" stroke="#070a1c" stroke-width="1.05" stroke-linejoin="round" /><path d="M-48 -140C-51.5 -144.2 -64.6 -156.7 -69 -165C-73.4 -173.3 -73.8 -183.3 -74.5 -190C-75.2 -196.7 -74 -200.9 -73 -205C-72 -209.1 -71.4 -210.1 -68.8 -214.5C-66.2 -218.9 -61.2 -226.2 -57.2 -231.5C-53.2 -236.8 -49 -241.5 -44.7 -246.2C-40.4 -250.9 -36 -255.7 -31.4 -259.6C-26.8 -263.5 -20.7 -267.3 -16.8 -269.8C-12.9 -272.3 -10.9 -273.4 -8 -274.8C-5.1 -276.2 -0.9 -277.7 0.5 -278.3C1.9 -277.9 6.4 -276.8 9 -275.8C11.6 -274.8 11.9 -274.8 16 -272.2C20.1 -269.6 28 -264.3 33.6 -260.3C39.2 -256.3 45 -252.3 49.7 -248C54.4 -243.7 58.3 -239 61.8 -234.2C65.3 -229.4 68.6 -223.3 70.8 -219.2C73 -215.1 73.9 -213.6 75 -209.6C76.1 -205.6 77.6 -202.4 77.3 -195C77 -187.6 77.2 -174.2 73 -165C68.8 -155.8 55.5 -144.2 52 -140Z" fill="#4476e6" stroke="#0a1a5e" stroke-width="1.5" stroke-linejoin="round" /><g transform="translate(71.5 -193.4) rotate(55)"><ellipse rx="4.6" ry="7" fill="#dcc2bb" stroke="#0a0f3c" stroke-width="1.75"/><circle cy="-4.3" r="0.9" fill="#070a1c"/></g><g transform="translate(-64.3 -193.4) rotate(-55)"><ellipse rx="4.6" ry="7" fill="#dcc2bb" stroke="#0a0f3c" stroke-width="1.75"/><circle cy="-4.3" r="0.9" fill="#070a1c"/></g><g transform="translate(64.4 -202.7) rotate(46)"><ellipse rx="6" ry="8.5" fill="#dcc2bb" stroke="#0a0f3c" stroke-width="1.75"/><circle cy="-5.3" r="1" fill="#070a1c"/></g><g transform="translate(-57.2 -202.7) rotate(-46)"><ellipse rx="6" ry="8.5" fill="#dcc2bb" stroke="#0a0f3c" stroke-width="1.75"/><circle cy="-5.3" r="1" fill="#070a1c"/></g><g transform="translate(53.7 -212.9) rotate(40)"><ellipse rx="9" ry="10.3" fill="#dcc2bb" stroke="#0a0f3c" stroke-width="1.75"/><circle cy="-6.4" r="1.1" fill="#070a1c"/></g><g transform="translate(-47.3 -212.9) rotate(-40)"><ellipse rx="9" ry="10.3" fill="#dcc2bb" stroke="#0a0f3c" stroke-width="1.75"/><circle cy="-6.4" r="1.1" fill="#070a1c"/></g><g transform="translate(38.6 -225.3) rotate(32)"><ellipse rx="11" ry="11.6" fill="#dcc2bb" stroke="#0a0f3c" stroke-width="1.75"/><circle cy="-7.2" r="1.3" fill="#070a1c"/></g><g transform="translate(-33.6 -225.3) rotate(-32)"><ellipse rx="11" ry="11.6" fill="#dcc2bb" stroke="#0a0f3c" stroke-width="1.75"/><circle cy="-7.2" r="1.3" fill="#070a1c"/></g><g transform="translate(21 -234) rotate(7)"><ellipse rx="10.4" ry="16.5" fill="#dcc2bb" stroke="#0a0f3c" stroke-width="1.75"/><circle cy="-10.2" r="1.4" fill="#070a1c"/></g><g transform="translate(-20 -234) rotate(-7)"><ellipse rx="10.4" ry="16.5" fill="#dcc2bb" stroke="#0a0f3c" stroke-width="1.75"/><circle cy="-10.2" r="1.4" fill="#070a1c"/></g><ellipse cx="1.5" cy="-252.3" rx="10.3" ry="17.2" transform="rotate(-2 1.5 -252.3)" fill="#dcc2bb" stroke="#0a0f3c" stroke-width="1.8"/><circle cx="0.3" cy="-261.8" r="4.1" fill="#070a1c"/><path d="M-42 -130C-45.5 -133.3 -58.7 -143.3 -63 -150C-67.3 -156.7 -67.5 -164.2 -68 -170C-68.5 -175.8 -67.3 -180.8 -66 -185C-64.7 -189.2 -62.5 -191.5 -60.2 -195.3C-57.9 -199.2 -55.1 -204.4 -52.2 -208.1C-49.3 -211.8 -46.7 -214.2 -42.8 -217.7C-38.9 -221.2 -33.3 -226.1 -28.6 -229.3C-23.9 -232.5 -19.8 -235 -14.5 -236.7C-9.2 -238.4 -2.5 -239.7 3.3 -239.6C9.1 -239.5 14.4 -238.1 20 -236.1C25.6 -234.1 31.7 -230.8 36.7 -227.8C41.7 -224.8 46.1 -221.6 50.2 -218.2C54.3 -214.8 58.5 -210.5 61.3 -207.5C64.1 -204.5 65.3 -203.7 67.1 -200.4C68.9 -197.2 70.8 -192.7 72 -188C73.2 -183.3 74.5 -178.3 74 -172C73.5 -165.7 73.3 -157 69 -150C64.7 -143 51.5 -133.3 48 -130Z" fill="#225a69" stroke="#070a1c" stroke-width="1.1" stroke-linejoin="round" /><path d="M-36 -135C-38.7 -137.8 -48.5 -146.2 -52 -152C-55.5 -157.8 -56.3 -165 -57 -170C-57.7 -175 -56.7 -178.8 -56 -182C-55.3 -185.2 -54.2 -186.3 -52.8 -188.9C-51.4 -191.5 -50.1 -194.3 -47.8 -197.6C-45.5 -200.9 -42.4 -205.4 -39.1 -208.8C-35.8 -212.2 -32.3 -215.2 -27.8 -218.2C-23.3 -221.2 -17.8 -224.8 -12.2 -226.6C-6.6 -228.4 -0.2 -229.6 5.7 -229.2C11.6 -228.8 17.6 -226.4 23 -224.1C28.4 -221.8 33.9 -218.1 38.2 -215.1C42.5 -212.1 45.4 -209.5 48.6 -206.1C51.8 -202.7 55.1 -198.1 57.2 -194.4C59.3 -190.7 60 -187.9 61 -184C62 -180.1 63.3 -176.3 63 -171C62.7 -165.7 62.5 -158 59 -152C55.5 -146 44.8 -137.8 42 -135Z" fill="#52bdea" stroke="#070a1c" stroke-width="1.1" stroke-linejoin="round" /><circle cx="-44.4" cy="-189.4" r="1.2" fill="#0e5f86"/><circle cx="-40.3" cy="-195.5" r="1.2" fill="#0e5f86"/><circle cx="-33.8" cy="-199.6" r="1.2" fill="#0e5f86"/><circle cx="-26" cy="-202.2" r="1.2" fill="#0e5f86"/><circle cx="-17.3" cy="-203" r="1.2" fill="#0e5f86"/><circle cx="23.1" cy="-202.2" r="1.2" fill="#0e5f86"/><circle cx="32.3" cy="-201.8" r="1.2" fill="#0e5f86"/><circle cx="39.8" cy="-199.6" r="1.2" fill="#0e5f86"/><circle cx="46.4" cy="-196.1" r="1.2" fill="#0e5f86"/><circle cx="51" cy="-190" r="1.2" fill="#0e5f86"/><circle cx="-47.5" cy="-182.5" r="1.2" fill="#0e5f86"/><circle cx="54" cy="-183" r="1.2" fill="#0e5f86"/><path d="M-42 -160C-41.9 -162.5 -41.9 -171.3 -41.5 -175C-41.1 -178.7 -40.6 -179.6 -39.5 -182C-38.4 -184.4 -37 -187.5 -35 -189.6C-33 -191.7 -31 -193.3 -27.5 -194.5C-24 -195.7 -19.1 -196.3 -14 -196.8C-8.9 -197.3 -2.7 -197.4 3 -197.3C8.7 -197.2 15.2 -196.9 20 -196.3C24.8 -195.7 28.5 -194.7 31.9 -193.5C35.3 -192.3 37.9 -191.2 40.3 -189.3C42.7 -187.4 44.7 -184.8 46.1 -182.2C47.5 -179.6 48 -177.7 48.5 -174C49 -170.3 48.9 -162.3 49 -160Z" fill="#4a6b66" stroke="#070a1c" stroke-width="1.1" stroke-linejoin="round" /><path d="M-36 -160C-35.9 -162.3 -36 -170.5 -35.5 -174C-35 -177.5 -34.2 -179 -33 -181C-31.8 -183 -30.3 -184.6 -28.5 -186C-26.7 -187.4 -24.9 -188.7 -22 -189.5C-19.1 -190.3 -15.2 -190.7 -11 -191C-6.8 -191.3 -1.7 -191.5 3 -191.5C7.7 -191.5 12.8 -191.3 17 -190.8C21.2 -190.3 25 -189.6 28 -188.5C31 -187.4 33 -185.8 35 -184C37 -182.2 38.8 -180.3 40 -178C41.2 -175.7 42 -173 42.5 -170C43 -167 42.9 -161.7 43 -160Z" fill="#eee6e0" stroke="#070a1c" stroke-width="1.1" stroke-linejoin="round" /></g><g transform="rotate(335.5) scale(1.005)"><path d="M-30 -125C-35 -127.5 -51.7 -133.3 -60 -140C-68.3 -146.7 -75.7 -157 -80 -165C-84.3 -173 -85.3 -181.5 -86 -188C-86.7 -194.5 -85.6 -198.8 -84 -204C-82.4 -209.2 -78.6 -215 -76.6 -218.9C-74.5 -222.8 -74.1 -223.9 -71.7 -227.6C-69.3 -231.3 -65.7 -236.2 -62 -241.1C-58.3 -246 -53.8 -252 -49.5 -256.8C-45.2 -261.6 -40.7 -266.1 -36 -270C-31.3 -273.9 -25.4 -277.4 -21.1 -280C-16.8 -282.6 -13.7 -284.3 -10.2 -285.8C-6.7 -287.3 -1.7 -288.3 0 -288.8C2.3 -287.9 9.7 -285.4 14 -283.5C18.3 -281.6 22.3 -279.5 26 -277.5C29.7 -275.5 31.7 -274.4 36.2 -271.4C40.7 -268.4 48 -263.5 53 -259.3C58 -255.1 62.5 -250.7 66.5 -246C70.5 -241.3 74 -235.6 76.7 -231C79.5 -226.4 81.2 -222.7 83 -218.2C84.8 -213.7 86.3 -209 87.3 -204C88.3 -199 89.7 -194.5 89 -188C88.3 -181.5 87.5 -173 83 -165C78.5 -157 70.5 -146.7 62 -140C53.5 -133.3 37 -127.5 32 -125Z" fill="#225a69" stroke="#070a1c" stroke-width="1.05" stroke-linejoin="round" /><path d="M-48 -140C-51.5 -144.2 -64.6 -156.7 -69 -165C-73.4 -173.3 -73.8 -183.3 -74.5 -190C-75.2 -196.7 -74 -200.9 -73 -205C-72 -209.1 -71.4 -210.1 -68.8 -214.5C-66.2 -218.9 -61.2 -226.2 -57.2 -231.5C-53.2 -236.8 -49 -241.5 -44.7 -246.2C-40.4 -250.9 -36 -255.7 -31.4 -259.6C-26.8 -263.5 -20.7 -267.3 -16.8 -269.8C-12.9 -272.3 -10.9 -273.4 -8 -274.8C-5.1 -276.2 -0.9 -277.7 0.5 -278.3C1.9 -277.9 6.4 -276.8 9 -275.8C11.6 -274.8 11.9 -274.8 16 -272.2C20.1 -269.6 28 -264.3 33.6 -260.3C39.2 -256.3 45 -252.3 49.7 -248C54.4 -243.7 58.3 -239 61.8 -234.2C65.3 -229.4 68.6 -223.3 70.8 -219.2C73 -215.1 73.9 -213.6 75 -209.6C76.1 -205.6 77.6 -202.4 77.3 -195C77 -187.6 77.2 -174.2 73 -165C68.8 -155.8 55.5 -144.2 52 -140Z" fill="#4476e6" stroke="#0a1a5e" stroke-width="1.5" stroke-linejoin="round" /><g transform="translate(71.5 -193.4) rotate(55)"><ellipse rx="4.6" ry="7" fill="#dcc2bb" stroke="#0a0f3c" stroke-width="1.75"/><circle cy="-4.3" r="0.9" fill="#070a1c"/></g><g transform="translate(-64.3 -193.4) rotate(-55)"><ellipse rx="4.6" ry="7" fill="#dcc2bb" stroke="#0a0f3c" stroke-width="1.75"/><circle cy="-4.3" r="0.9" fill="#070a1c"/></g><g transform="translate(64.4 -202.7) rotate(46)"><ellipse rx="6" ry="8.5" fill="#dcc2bb" stroke="#0a0f3c" stroke-width="1.75"/><circle cy="-5.3" r="1" fill="#070a1c"/></g><g transform="translate(-57.2 -202.7) rotate(-46)"><ellipse rx="6" ry="8.5" fill="#dcc2bb" stroke="#0a0f3c" stroke-width="1.75"/><circle cy="-5.3" r="1" fill="#070a1c"/></g><g transform="translate(53.7 -212.9) rotate(40)"><ellipse rx="9" ry="10.3" fill="#dcc2bb" stroke="#0a0f3c" stroke-width="1.75"/><circle cy="-6.4" r="1.1" fill="#070a1c"/></g><g transform="translate(-47.3 -212.9) rotate(-40)"><ellipse rx="9" ry="10.3" fill="#dcc2bb" stroke="#0a0f3c" stroke-width="1.75"/><circle cy="-6.4" r="1.1" fill="#070a1c"/></g><g transform="translate(38.6 -225.3) rotate(32)"><ellipse rx="11" ry="11.6" fill="#dcc2bb" stroke="#0a0f3c" stroke-width="1.75"/><circle cy="-7.2" r="1.3" fill="#070a1c"/></g><g transform="translate(-33.6 -225.3) rotate(-32)"><ellipse rx="11" ry="11.6" fill="#dcc2bb" stroke="#0a0f3c" stroke-width="1.75"/><circle cy="-7.2" r="1.3" fill="#070a1c"/></g><g transform="translate(21 -234) rotate(7)"><ellipse rx="10.4" ry="16.5" fill="#dcc2bb" stroke="#0a0f3c" stroke-width="1.75"/><circle cy="-10.2" r="1.4" fill="#070a1c"/></g><g transform="translate(-20 -234) rotate(-7)"><ellipse rx="10.4" ry="16.5" fill="#dcc2bb" stroke="#0a0f3c" stroke-width="1.75"/><circle cy="-10.2" r="1.4" fill="#070a1c"/></g><ellipse cx="1.5" cy="-252.3" rx="10.3" ry="17.2" transform="rotate(-2 1.5 -252.3)" fill="#dcc2bb" stroke="#0a0f3c" stroke-width="1.8"/><circle cx="0.3" cy="-261.8" r="4.1" fill="#070a1c"/><path d="M-42 -130C-45.5 -133.3 -58.7 -143.3 -63 -150C-67.3 -156.7 -67.5 -164.2 -68 -170C-68.5 -175.8 -67.3 -180.8 -66 -185C-64.7 -189.2 -62.5 -191.5 -60.2 -195.3C-57.9 -199.2 -55.1 -204.4 -52.2 -208.1C-49.3 -211.8 -46.7 -214.2 -42.8 -217.7C-38.9 -221.2 -33.3 -226.1 -28.6 -229.3C-23.9 -232.5 -19.8 -235 -14.5 -236.7C-9.2 -238.4 -2.5 -239.7 3.3 -239.6C9.1 -239.5 14.4 -238.1 20 -236.1C25.6 -234.1 31.7 -230.8 36.7 -227.8C41.7 -224.8 46.1 -221.6 50.2 -218.2C54.3 -214.8 58.5 -210.5 61.3 -207.5C64.1 -204.5 65.3 -203.7 67.1 -200.4C68.9 -197.2 70.8 -192.7 72 -188C73.2 -183.3 74.5 -178.3 74 -172C73.5 -165.7 73.3 -157 69 -150C64.7 -143 51.5 -133.3 48 -130Z" fill="#225a69" stroke="#070a1c" stroke-width="1.1" stroke-linejoin="round" /><path d="M-36 -135C-38.7 -137.8 -48.5 -146.2 -52 -152C-55.5 -157.8 -56.3 -165 -57 -170C-57.7 -175 -56.7 -178.8 -56 -182C-55.3 -185.2 -54.2 -186.3 -52.8 -188.9C-51.4 -191.5 -50.1 -194.3 -47.8 -197.6C-45.5 -200.9 -42.4 -205.4 -39.1 -208.8C-35.8 -212.2 -32.3 -215.2 -27.8 -218.2C-23.3 -221.2 -17.8 -224.8 -12.2 -226.6C-6.6 -228.4 -0.2 -229.6 5.7 -229.2C11.6 -228.8 17.6 -226.4 23 -224.1C28.4 -221.8 33.9 -218.1 38.2 -215.1C42.5 -212.1 45.4 -209.5 48.6 -206.1C51.8 -202.7 55.1 -198.1 57.2 -194.4C59.3 -190.7 60 -187.9 61 -184C62 -180.1 63.3 -176.3 63 -171C62.7 -165.7 62.5 -158 59 -152C55.5 -146 44.8 -137.8 42 -135Z" fill="#52bdea" stroke="#070a1c" stroke-width="1.1" stroke-linejoin="round" /><circle cx="-44.4" cy="-189.4" r="1.2" fill="#0e5f86"/><circle cx="-40.3" cy="-195.5" r="1.2" fill="#0e5f86"/><circle cx="-33.8" cy="-199.6" r="1.2" fill="#0e5f86"/><circle cx="-26" cy="-202.2" r="1.2" fill="#0e5f86"/><circle cx="-17.3" cy="-203" r="1.2" fill="#0e5f86"/><circle cx="23.1" cy="-202.2" r="1.2" fill="#0e5f86"/><circle cx="32.3" cy="-201.8" r="1.2" fill="#0e5f86"/><circle cx="39.8" cy="-199.6" r="1.2" fill="#0e5f86"/><circle cx="46.4" cy="-196.1" r="1.2" fill="#0e5f86"/><circle cx="51" cy="-190" r="1.2" fill="#0e5f86"/><circle cx="-47.5" cy="-182.5" r="1.2" fill="#0e5f86"/><circle cx="54" cy="-183" r="1.2" fill="#0e5f86"/><path d="M-42 -160C-41.9 -162.5 -41.9 -171.3 -41.5 -175C-41.1 -178.7 -40.6 -179.6 -39.5 -182C-38.4 -184.4 -37 -187.5 -35 -189.6C-33 -191.7 -31 -193.3 -27.5 -194.5C-24 -195.7 -19.1 -196.3 -14 -196.8C-8.9 -197.3 -2.7 -197.4 3 -197.3C8.7 -197.2 15.2 -196.9 20 -196.3C24.8 -195.7 28.5 -194.7 31.9 -193.5C35.3 -192.3 37.9 -191.2 40.3 -189.3C42.7 -187.4 44.7 -184.8 46.1 -182.2C47.5 -179.6 48 -177.7 48.5 -174C49 -170.3 48.9 -162.3 49 -160Z" fill="#4a6b66" stroke="#070a1c" stroke-width="1.1" stroke-linejoin="round" /><path d="M-36 -160C-35.9 -162.3 -36 -170.5 -35.5 -174C-35 -177.5 -34.2 -179 -33 -181C-31.8 -183 -30.3 -184.6 -28.5 -186C-26.7 -187.4 -24.9 -188.7 -22 -189.5C-19.1 -190.3 -15.2 -190.7 -11 -191C-6.8 -191.3 -1.7 -191.5 3 -191.5C7.7 -191.5 12.8 -191.3 17 -190.8C21.2 -190.3 25 -189.6 28 -188.5C31 -187.4 33 -185.8 35 -184C37 -182.2 38.8 -180.3 40 -178C41.2 -175.7 42 -173 42.5 -170C43 -167 42.9 -161.7 43 -160Z" fill="#eee6e0" stroke="#070a1c" stroke-width="1.1" stroke-linejoin="round" /></g><g transform="rotate(0)"><path d="M-10 -158C-11.3 -160 -16.2 -165.5 -18 -170C-19.8 -174.5 -20.7 -180.4 -21 -185C-21.3 -189.6 -20.6 -194 -20 -197.8C-19.4 -201.6 -18.7 -203.6 -17.5 -208C-16.3 -212.4 -14.6 -218.9 -12.7 -224C-10.8 -229.1 -8.1 -234.4 -6 -238.3C-3.9 -242.2 -1 -245.8 0 -247.3C1 -245.8 3.9 -242.2 6 -238.3C8.1 -234.4 10.8 -229.1 12.7 -224C14.6 -218.9 16.3 -212.4 17.5 -208C18.7 -203.6 19.4 -201.6 20 -197.8C20.6 -194 21.3 -189.6 21 -185C20.7 -180.4 19.8 -174.5 18 -170C16.2 -165.5 11.3 -160 10 -158Z" fill="#4476e6" stroke="#070a1c" stroke-width="1.1" stroke-linejoin="round" /><path d="M-3 -160C-3.5 -161.9 -4.8 -167.4 -6 -171.5C-7.2 -175.6 -9.2 -180.3 -10.2 -184.3C-11.2 -188.3 -12 -191.5 -11.8 -195.4C-11.7 -199.3 -10.4 -203.8 -9.3 -208C-8.2 -212.2 -7 -217.1 -5.4 -220.8C-3.9 -224.5 -0.9 -228.8 0 -230.4C0.9 -228.8 3.9 -224.5 5.4 -220.8C7 -217.1 8.2 -212.2 9.3 -208C10.4 -203.8 11.7 -199.3 11.8 -195.4C12 -191.5 11.2 -188.3 10.2 -184.3C9.2 -180.3 7.2 -175.6 6 -171.5C4.8 -167.4 3.5 -161.9 3 -160Z" fill="#eee6e0" stroke="#070a1c" stroke-width="1.15" stroke-linejoin="round" /><path d="M-3 -152C-3.4 -153.7 -5.1 -158.8 -5.5 -162C-5.9 -165.2 -6 -168.5 -5.6 -171.5C-5.2 -174.5 -3.9 -177.2 -3 -180C-2.1 -182.8 -0.5 -186.8 0 -188.2C0.5 -186.8 2.1 -182.8 3 -180C3.9 -177.2 5.2 -174.5 5.6 -171.5C6 -168.5 5.9 -165.2 5.5 -162C5.1 -158.8 3.4 -153.7 3 -152Z" fill="#225a69" stroke="#070a1c" stroke-width="1.1" stroke-linejoin="round" /></g><g transform="rotate(46.4) scale(1.01)"><path d="M-10 -158C-11.3 -160 -16.2 -165.5 -18 -170C-19.8 -174.5 -20.7 -180.4 -21 -185C-21.3 -189.6 -20.6 -194 -20 -197.8C-19.4 -201.6 -18.7 -203.6 -17.5 -208C-16.3 -212.4 -14.6 -218.9 -12.7 -224C-10.8 -229.1 -8.1 -234.4 -6 -238.3C-3.9 -242.2 -1 -245.8 0 -247.3C1 -245.8 3.9 -242.2 6 -238.3C8.1 -234.4 10.8 -229.1 12.7 -224C14.6 -218.9 16.3 -212.4 17.5 -208C18.7 -203.6 19.4 -201.6 20 -197.8C20.6 -194 21.3 -189.6 21 -185C20.7 -180.4 19.8 -174.5 18 -170C16.2 -165.5 11.3 -160 10 -158Z" fill="#225a69" stroke="#070a1c" stroke-width="1.1" stroke-linejoin="round" /><path d="M-3 -160C-3.5 -161.9 -4.8 -167.4 -6 -171.5C-7.2 -175.6 -9.2 -180.3 -10.2 -184.3C-11.2 -188.3 -12 -191.5 -11.8 -195.4C-11.7 -199.3 -10.4 -203.8 -9.3 -208C-8.2 -212.2 -7 -217.1 -5.4 -220.8C-3.9 -224.5 -0.9 -228.8 0 -230.4C0.9 -228.8 3.9 -224.5 5.4 -220.8C7 -217.1 8.2 -212.2 9.3 -208C10.4 -203.8 11.7 -199.3 11.8 -195.4C12 -191.5 11.2 -188.3 10.2 -184.3C9.2 -180.3 7.2 -175.6 6 -171.5C4.8 -167.4 3.5 -161.9 3 -160Z" fill="#eee6e0" stroke="#070a1c" stroke-width="1.15" stroke-linejoin="round" /><path d="M-3 -152C-3.4 -153.7 -5.1 -158.8 -5.5 -162C-5.9 -165.2 -6 -168.5 -5.6 -171.5C-5.2 -174.5 -3.9 -177.2 -3 -180C-2.1 -182.8 -0.5 -186.8 0 -188.2C0.5 -186.8 2.1 -182.8 3 -180C3.9 -177.2 5.2 -174.5 5.6 -171.5C6 -168.5 5.9 -165.2 5.5 -162C5.1 -158.8 3.4 -153.7 3 -152Z" fill="#225a69" stroke="#070a1c" stroke-width="1.1" stroke-linejoin="round" /></g><g transform="rotate(90.2)"><path d="M-10 -158C-11.3 -160 -16.2 -165.5 -18 -170C-19.8 -174.5 -20.7 -180.4 -21 -185C-21.3 -189.6 -20.6 -194 -20 -197.8C-19.4 -201.6 -18.7 -203.6 -17.5 -208C-16.3 -212.4 -14.6 -218.9 -12.7 -224C-10.8 -229.1 -8.1 -234.4 -6 -238.3C-3.9 -242.2 -1 -245.8 0 -247.3C1 -245.8 3.9 -242.2 6 -238.3C8.1 -234.4 10.8 -229.1 12.7 -224C14.6 -218.9 16.3 -212.4 17.5 -208C18.7 -203.6 19.4 -201.6 20 -197.8C20.6 -194 21.3 -189.6 21 -185C20.7 -180.4 19.8 -174.5 18 -170C16.2 -165.5 11.3 -160 10 -158Z" fill="#225a69" stroke="#070a1c" stroke-width="1.1" stroke-linejoin="round" /><path d="M-3 -160C-3.5 -161.9 -4.8 -167.4 -6 -171.5C-7.2 -175.6 -9.2 -180.3 -10.2 -184.3C-11.2 -188.3 -12 -191.5 -11.8 -195.4C-11.7 -199.3 -10.4 -203.8 -9.3 -208C-8.2 -212.2 -7 -217.1 -5.4 -220.8C-3.9 -224.5 -0.9 -228.8 0 -230.4C0.9 -228.8 3.9 -224.5 5.4 -220.8C7 -217.1 8.2 -212.2 9.3 -208C10.4 -203.8 11.7 -199.3 11.8 -195.4C12 -191.5 11.2 -188.3 10.2 -184.3C9.2 -180.3 7.2 -175.6 6 -171.5C4.8 -167.4 3.5 -161.9 3 -160Z" fill="#eee6e0" stroke="#070a1c" stroke-width="1.15" stroke-linejoin="round" /><path d="M-3 -152C-3.4 -153.7 -5.1 -158.8 -5.5 -162C-5.9 -165.2 -6 -168.5 -5.6 -171.5C-5.2 -174.5 -3.9 -177.2 -3 -180C-2.1 -182.8 -0.5 -186.8 0 -188.2C0.5 -186.8 2.1 -182.8 3 -180C3.9 -177.2 5.2 -174.5 5.6 -171.5C6 -168.5 5.9 -165.2 5.5 -162C5.1 -158.8 3.4 -153.7 3 -152Z" fill="#225a69" stroke="#070a1c" stroke-width="1.1" stroke-linejoin="round" /></g><g transform="rotate(133.9) scale(1.012)"><path d="M-10 -158C-11.3 -160 -16.2 -165.5 -18 -170C-19.8 -174.5 -20.7 -180.4 -21 -185C-21.3 -189.6 -20.6 -194 -20 -197.8C-19.4 -201.6 -18.7 -203.6 -17.5 -208C-16.3 -212.4 -14.6 -218.9 -12.7 -224C-10.8 -229.1 -8.1 -234.4 -6 -238.3C-3.9 -242.2 -1 -245.8 0 -247.3C1 -245.8 3.9 -242.2 6 -238.3C8.1 -234.4 10.8 -229.1 12.7 -224C14.6 -218.9 16.3 -212.4 17.5 -208C18.7 -203.6 19.4 -201.6 20 -197.8C20.6 -194 21.3 -189.6 21 -185C20.7 -180.4 19.8 -174.5 18 -170C16.2 -165.5 11.3 -160 10 -158Z" fill="#225a69" stroke="#070a1c" stroke-width="1.1" stroke-linejoin="round" /><path d="M-3 -160C-3.5 -161.9 -4.8 -167.4 -6 -171.5C-7.2 -175.6 -9.2 -180.3 -10.2 -184.3C-11.2 -188.3 -12 -191.5 -11.8 -195.4C-11.7 -199.3 -10.4 -203.8 -9.3 -208C-8.2 -212.2 -7 -217.1 -5.4 -220.8C-3.9 -224.5 -0.9 -228.8 0 -230.4C0.9 -228.8 3.9 -224.5 5.4 -220.8C7 -217.1 8.2 -212.2 9.3 -208C10.4 -203.8 11.7 -199.3 11.8 -195.4C12 -191.5 11.2 -188.3 10.2 -184.3C9.2 -180.3 7.2 -175.6 6 -171.5C4.8 -167.4 3.5 -161.9 3 -160Z" fill="#eee6e0" stroke="#070a1c" stroke-width="1.15" stroke-linejoin="round" /><path d="M-3 -152C-3.4 -153.7 -5.1 -158.8 -5.5 -162C-5.9 -165.2 -6 -168.5 -5.6 -171.5C-5.2 -174.5 -3.9 -177.2 -3 -180C-2.1 -182.8 -0.5 -186.8 0 -188.2C0.5 -186.8 2.1 -182.8 3 -180C3.9 -177.2 5.2 -174.5 5.6 -171.5C6 -168.5 5.9 -165.2 5.5 -162C5.1 -158.8 3.4 -153.7 3 -152Z" fill="#225a69" stroke="#070a1c" stroke-width="1.1" stroke-linejoin="round" /></g><g transform="rotate(180)"><path d="M-10 -158C-11.3 -160 -16.2 -165.5 -18 -170C-19.8 -174.5 -20.7 -180.4 -21 -185C-21.3 -189.6 -20.6 -194 -20 -197.8C-19.4 -201.6 -18.7 -203.6 -17.5 -208C-16.3 -212.4 -14.6 -218.9 -12.7 -224C-10.8 -229.1 -8.1 -234.4 -6 -238.3C-3.9 -242.2 -1 -245.8 0 -247.3C1 -245.8 3.9 -242.2 6 -238.3C8.1 -234.4 10.8 -229.1 12.7 -224C14.6 -218.9 16.3 -212.4 17.5 -208C18.7 -203.6 19.4 -201.6 20 -197.8C20.6 -194 21.3 -189.6 21 -185C20.7 -180.4 19.8 -174.5 18 -170C16.2 -165.5 11.3 -160 10 -158Z" fill="#225a69" stroke="#070a1c" stroke-width="1.1" stroke-linejoin="round" /><path d="M-3 -160C-3.5 -161.9 -4.8 -167.4 -6 -171.5C-7.2 -175.6 -9.2 -180.3 -10.2 -184.3C-11.2 -188.3 -12 -191.5 -11.8 -195.4C-11.7 -199.3 -10.4 -203.8 -9.3 -208C-8.2 -212.2 -7 -217.1 -5.4 -220.8C-3.9 -224.5 -0.9 -228.8 0 -230.4C0.9 -228.8 3.9 -224.5 5.4 -220.8C7 -217.1 8.2 -212.2 9.3 -208C10.4 -203.8 11.7 -199.3 11.8 -195.4C12 -191.5 11.2 -188.3 10.2 -184.3C9.2 -180.3 7.2 -175.6 6 -171.5C4.8 -167.4 3.5 -161.9 3 -160Z" fill="#eee6e0" stroke="#070a1c" stroke-width="1.15" stroke-linejoin="round" /><path d="M-3 -152C-3.4 -153.7 -5.1 -158.8 -5.5 -162C-5.9 -165.2 -6 -168.5 -5.6 -171.5C-5.2 -174.5 -3.9 -177.2 -3 -180C-2.1 -182.8 -0.5 -186.8 0 -188.2C0.5 -186.8 2.1 -182.8 3 -180C3.9 -177.2 5.2 -174.5 5.6 -171.5C6 -168.5 5.9 -165.2 5.5 -162C5.1 -158.8 3.4 -153.7 3 -152Z" fill="#225a69" stroke="#070a1c" stroke-width="1.1" stroke-linejoin="round" /></g><g transform="rotate(225.9) scale(1.01)"><path d="M-10 -158C-11.3 -160 -16.2 -165.5 -18 -170C-19.8 -174.5 -20.7 -180.4 -21 -185C-21.3 -189.6 -20.6 -194 -20 -197.8C-19.4 -201.6 -18.7 -203.6 -17.5 -208C-16.3 -212.4 -14.6 -218.9 -12.7 -224C-10.8 -229.1 -8.1 -234.4 -6 -238.3C-3.9 -242.2 -1 -245.8 0 -247.3C1 -245.8 3.9 -242.2 6 -238.3C8.1 -234.4 10.8 -229.1 12.7 -224C14.6 -218.9 16.3 -212.4 17.5 -208C18.7 -203.6 19.4 -201.6 20 -197.8C20.6 -194 21.3 -189.6 21 -185C20.7 -180.4 19.8 -174.5 18 -170C16.2 -165.5 11.3 -160 10 -158Z" fill="#4476e6" stroke="#070a1c" stroke-width="1.1" stroke-linejoin="round" /><path d="M-3 -160C-3.5 -161.9 -4.8 -167.4 -6 -171.5C-7.2 -175.6 -9.2 -180.3 -10.2 -184.3C-11.2 -188.3 -12 -191.5 -11.8 -195.4C-11.7 -199.3 -10.4 -203.8 -9.3 -208C-8.2 -212.2 -7 -217.1 -5.4 -220.8C-3.9 -224.5 -0.9 -228.8 0 -230.4C0.9 -228.8 3.9 -224.5 5.4 -220.8C7 -217.1 8.2 -212.2 9.3 -208C10.4 -203.8 11.7 -199.3 11.8 -195.4C12 -191.5 11.2 -188.3 10.2 -184.3C9.2 -180.3 7.2 -175.6 6 -171.5C4.8 -167.4 3.5 -161.9 3 -160Z" fill="#eee6e0" stroke="#070a1c" stroke-width="1.15" stroke-linejoin="round" /><path d="M-3 -152C-3.4 -153.7 -5.1 -158.8 -5.5 -162C-5.9 -165.2 -6 -168.5 -5.6 -171.5C-5.2 -174.5 -3.9 -177.2 -3 -180C-2.1 -182.8 -0.5 -186.8 0 -188.2C0.5 -186.8 2.1 -182.8 3 -180C3.9 -177.2 5.2 -174.5 5.6 -171.5C6 -168.5 5.9 -165.2 5.5 -162C5.1 -158.8 3.4 -153.7 3 -152Z" fill="#225a69" stroke="#070a1c" stroke-width="1.1" stroke-linejoin="round" /></g><g transform="rotate(270)"><path d="M-10 -158C-11.3 -160 -16.2 -165.5 -18 -170C-19.8 -174.5 -20.7 -180.4 -21 -185C-21.3 -189.6 -20.6 -194 -20 -197.8C-19.4 -201.6 -18.7 -203.6 -17.5 -208C-16.3 -212.4 -14.6 -218.9 -12.7 -224C-10.8 -229.1 -8.1 -234.4 -6 -238.3C-3.9 -242.2 -1 -245.8 0 -247.3C1 -245.8 3.9 -242.2 6 -238.3C8.1 -234.4 10.8 -229.1 12.7 -224C14.6 -218.9 16.3 -212.4 17.5 -208C18.7 -203.6 19.4 -201.6 20 -197.8C20.6 -194 21.3 -189.6 21 -185C20.7 -180.4 19.8 -174.5 18 -170C16.2 -165.5 11.3 -160 10 -158Z" fill="#4476e6" stroke="#070a1c" stroke-width="1.1" stroke-linejoin="round" /><path d="M-3 -160C-3.5 -161.9 -4.8 -167.4 -6 -171.5C-7.2 -175.6 -9.2 -180.3 -10.2 -184.3C-11.2 -188.3 -12 -191.5 -11.8 -195.4C-11.7 -199.3 -10.4 -203.8 -9.3 -208C-8.2 -212.2 -7 -217.1 -5.4 -220.8C-3.9 -224.5 -0.9 -228.8 0 -230.4C0.9 -228.8 3.9 -224.5 5.4 -220.8C7 -217.1 8.2 -212.2 9.3 -208C10.4 -203.8 11.7 -199.3 11.8 -195.4C12 -191.5 11.2 -188.3 10.2 -184.3C9.2 -180.3 7.2 -175.6 6 -171.5C4.8 -167.4 3.5 -161.9 3 -160Z" fill="#eee6e0" stroke="#070a1c" stroke-width="1.15" stroke-linejoin="round" /><path d="M-3 -152C-3.4 -153.7 -5.1 -158.8 -5.5 -162C-5.9 -165.2 -6 -168.5 -5.6 -171.5C-5.2 -174.5 -3.9 -177.2 -3 -180C-2.1 -182.8 -0.5 -186.8 0 -188.2C0.5 -186.8 2.1 -182.8 3 -180C3.9 -177.2 5.2 -174.5 5.6 -171.5C6 -168.5 5.9 -165.2 5.5 -162C5.1 -158.8 3.4 -153.7 3 -152Z" fill="#225a69" stroke="#070a1c" stroke-width="1.1" stroke-linejoin="round" /></g><g transform="rotate(313.8) scale(1.013)"><path d="M-10 -158C-11.3 -160 -16.2 -165.5 -18 -170C-19.8 -174.5 -20.7 -180.4 -21 -185C-21.3 -189.6 -20.6 -194 -20 -197.8C-19.4 -201.6 -18.7 -203.6 -17.5 -208C-16.3 -212.4 -14.6 -218.9 -12.7 -224C-10.8 -229.1 -8.1 -234.4 -6 -238.3C-3.9 -242.2 -1 -245.8 0 -247.3C1 -245.8 3.9 -242.2 6 -238.3C8.1 -234.4 10.8 -229.1 12.7 -224C14.6 -218.9 16.3 -212.4 17.5 -208C18.7 -203.6 19.4 -201.6 20 -197.8C20.6 -194 21.3 -189.6 21 -185C20.7 -180.4 19.8 -174.5 18 -170C16.2 -165.5 11.3 -160 10 -158Z" fill="#225a69" stroke="#070a1c" stroke-width="1.1" stroke-linejoin="round" /><path d="M-3 -160C-3.5 -161.9 -4.8 -167.4 -6 -171.5C-7.2 -175.6 -9.2 -180.3 -10.2 -184.3C-11.2 -188.3 -12 -191.5 -11.8 -195.4C-11.7 -199.3 -10.4 -203.8 -9.3 -208C-8.2 -212.2 -7 -217.1 -5.4 -220.8C-3.9 -224.5 -0.9 -228.8 0 -230.4C0.9 -228.8 3.9 -224.5 5.4 -220.8C7 -217.1 8.2 -212.2 9.3 -208C10.4 -203.8 11.7 -199.3 11.8 -195.4C12 -191.5 11.2 -188.3 10.2 -184.3C9.2 -180.3 7.2 -175.6 6 -171.5C4.8 -167.4 3.5 -161.9 3 -160Z" fill="#eee6e0" stroke="#070a1c" stroke-width="1.15" stroke-linejoin="round" /><path d="M-3 -152C-3.4 -153.7 -5.1 -158.8 -5.5 -162C-5.9 -165.2 -6 -168.5 -5.6 -171.5C-5.2 -174.5 -3.9 -177.2 -3 -180C-2.1 -182.8 -0.5 -186.8 0 -188.2C0.5 -186.8 2.1 -182.8 3 -180C3.9 -177.2 5.2 -174.5 5.6 -171.5C6 -168.5 5.9 -165.2 5.5 -162C5.1 -158.8 3.4 -153.7 3 -152Z" fill="#225a69" stroke="#070a1c" stroke-width="1.1" stroke-linejoin="round" /></g><g transform="rotate(0)"><g transform="scale(1 1)"><path d="M-30 -140C-32 -143.3 -40.4 -155.1 -42 -160C-43.6 -164.9 -41.8 -165.1 -39.5 -169.2C-37.2 -173.2 -32.3 -179.5 -28.4 -184.3C-24.5 -189.1 -18.1 -195.9 -16 -198.2C-14.9 -195.1 -10.8 -185.5 -9.3 -179.5C-7.8 -173.5 -7.1 -167.2 -6.9 -162C-6.7 -156.8 -6.7 -152 -8 -148C-9.3 -144 -13.8 -139.7 -15 -138Z" fill="#eee6e0" stroke="#070a1c" stroke-width="1.15" stroke-linejoin="round" /><path d="M-26 -146C-27.7 -149.1 -36.2 -159.1 -36.4 -164.4C-36.6 -169.7 -30.1 -174.2 -27 -178C-23.9 -181.8 -19.6 -185.8 -18.1 -187.4C-17.2 -185 -13.8 -177.6 -12.5 -173.1C-11.2 -168.6 -9.8 -164.6 -10.1 -160.4C-10.3 -156.2 -13.3 -150.1 -14 -148Z" fill="#4476e6" stroke="#070a1c" stroke-width="1.5" stroke-linejoin="round" /><path d="M-26 -146L-20.5 -177.7M-24.7 -153L-32 -168M-23.5 -158L-13.5 -168M-25.5 -149L-14 -157" fill="none" stroke="#0a1a5e" stroke-width="1.6" stroke-linecap="round"/></g><g transform="scale(-1 1)"><path d="M-30 -140C-32 -143.3 -40.4 -155.1 -42 -160C-43.6 -164.9 -41.8 -165.1 -39.5 -169.2C-37.2 -173.2 -32.3 -179.5 -28.4 -184.3C-24.5 -189.1 -18.1 -195.9 -16 -198.2C-14.9 -195.1 -10.8 -185.5 -9.3 -179.5C-7.8 -173.5 -7.1 -167.2 -6.9 -162C-6.7 -156.8 -6.7 -152 -8 -148C-9.3 -144 -13.8 -139.7 -15 -138Z" fill="#eee6e0" stroke="#070a1c" stroke-width="1.15" stroke-linejoin="round" /><path d="M-26 -146C-27.7 -149.1 -36.2 -159.1 -36.4 -164.4C-36.6 -169.7 -30.1 -174.2 -27 -178C-23.9 -181.8 -19.6 -185.8 -18.1 -187.4C-17.2 -185 -13.8 -177.6 -12.5 -173.1C-11.2 -168.6 -9.8 -164.6 -10.1 -160.4C-10.3 -156.2 -13.3 -150.1 -14 -148Z" fill="#4476e6" stroke="#070a1c" stroke-width="1.5" stroke-linejoin="round" /><path d="M-26 -146L-20.5 -177.7M-24.7 -153L-32 -168M-23.5 -158L-13.5 -168M-25.5 -149L-14 -157" fill="none" stroke="#0a1a5e" stroke-width="1.6" stroke-linecap="round"/></g></g><g transform="rotate(46.4) scale(1.01)"><g transform="scale(1 1)"><path d="M-30 -140C-32 -143.3 -40.4 -155.1 -42 -160C-43.6 -164.9 -41.8 -165.1 -39.5 -169.2C-37.2 -173.2 -32.3 -179.5 -28.4 -184.3C-24.5 -189.1 -18.1 -195.9 -16 -198.2C-14.9 -195.1 -10.8 -185.5 -9.3 -179.5C-7.8 -173.5 -7.1 -167.2 -6.9 -162C-6.7 -156.8 -6.7 -152 -8 -148C-9.3 -144 -13.8 -139.7 -15 -138Z" fill="#4476e6" stroke="#0a1a5e" stroke-width="1.5" stroke-linejoin="round" /><path d="M-26 -146C-27.7 -149.1 -36.2 -159.1 -36.4 -164.4C-36.6 -169.7 -30.1 -174.2 -27 -178C-23.9 -181.8 -19.6 -185.8 -18.1 -187.4C-17.2 -185 -13.8 -177.6 -12.5 -173.1C-11.2 -168.6 -9.8 -164.6 -10.1 -160.4C-10.3 -156.2 -13.3 -150.1 -14 -148Z" fill="#4476e6" stroke="#0a1a5e" stroke-width="1.5" stroke-linejoin="round" /><path d="M-26 -146L-20.5 -177.7M-24.7 -153L-32 -168M-23.5 -158L-13.5 -168M-25.5 -149L-14 -157" fill="none" stroke="#0a1a5e" stroke-width="1.6" stroke-linecap="round"/></g><g transform="scale(-1 1)"><path d="M-30 -140C-32 -143.3 -40.4 -155.1 -42 -160C-43.6 -164.9 -41.8 -165.1 -39.5 -169.2C-37.2 -173.2 -32.3 -179.5 -28.4 -184.3C-24.5 -189.1 -18.1 -195.9 -16 -198.2C-14.9 -195.1 -10.8 -185.5 -9.3 -179.5C-7.8 -173.5 -7.1 -167.2 -6.9 -162C-6.7 -156.8 -6.7 -152 -8 -148C-9.3 -144 -13.8 -139.7 -15 -138Z" fill="#4476e6" stroke="#0a1a5e" stroke-width="1.5" stroke-linejoin="round" /><path d="M-26 -146C-27.7 -149.1 -36.2 -159.1 -36.4 -164.4C-36.6 -169.7 -30.1 -174.2 -27 -178C-23.9 -181.8 -19.6 -185.8 -18.1 -187.4C-17.2 -185 -13.8 -177.6 -12.5 -173.1C-11.2 -168.6 -9.8 -164.6 -10.1 -160.4C-10.3 -156.2 -13.3 -150.1 -14 -148Z" fill="#4476e6" stroke="#0a1a5e" stroke-width="1.5" stroke-linejoin="round" /><path d="M-26 -146L-20.5 -177.7M-24.7 -153L-32 -168M-23.5 -158L-13.5 -168M-25.5 -149L-14 -157" fill="none" stroke="#0a1a5e" stroke-width="1.6" stroke-linecap="round"/></g></g><g transform="rotate(90.2)"><g transform="scale(1 1)"><path d="M-30 -140C-32 -143.3 -40.4 -155.1 -42 -160C-43.6 -164.9 -41.8 -165.1 -39.5 -169.2C-37.2 -173.2 -32.3 -179.5 -28.4 -184.3C-24.5 -189.1 -18.1 -195.9 -16 -198.2C-14.9 -195.1 -10.8 -185.5 -9.3 -179.5C-7.8 -173.5 -7.1 -167.2 -6.9 -162C-6.7 -156.8 -6.7 -152 -8 -148C-9.3 -144 -13.8 -139.7 -15 -138Z" fill="#4476e6" stroke="#0a1a5e" stroke-width="1.5" stroke-linejoin="round" /><path d="M-26 -146C-27.7 -149.1 -36.2 -159.1 -36.4 -164.4C-36.6 -169.7 -30.1 -174.2 -27 -178C-23.9 -181.8 -19.6 -185.8 -18.1 -187.4C-17.2 -185 -13.8 -177.6 -12.5 -173.1C-11.2 -168.6 -9.8 -164.6 -10.1 -160.4C-10.3 -156.2 -13.3 -150.1 -14 -148Z" fill="#4476e6" stroke="#0a1a5e" stroke-width="1.5" stroke-linejoin="round" /><path d="M-26 -146L-20.5 -177.7M-24.7 -153L-32 -168M-23.5 -158L-13.5 -168M-25.5 -149L-14 -157" fill="none" stroke="#0a1a5e" stroke-width="1.6" stroke-linecap="round"/></g><g transform="scale(-1 1)"><path d="M-30 -140C-32 -143.3 -40.4 -155.1 -42 -160C-43.6 -164.9 -41.8 -165.1 -39.5 -169.2C-37.2 -173.2 -32.3 -179.5 -28.4 -184.3C-24.5 -189.1 -18.1 -195.9 -16 -198.2C-14.9 -195.1 -10.8 -185.5 -9.3 -179.5C-7.8 -173.5 -7.1 -167.2 -6.9 -162C-6.7 -156.8 -6.7 -152 -8 -148C-9.3 -144 -13.8 -139.7 -15 -138Z" fill="#4476e6" stroke="#0a1a5e" stroke-width="1.5" stroke-linejoin="round" /><path d="M-26 -146C-27.7 -149.1 -36.2 -159.1 -36.4 -164.4C-36.6 -169.7 -30.1 -174.2 -27 -178C-23.9 -181.8 -19.6 -185.8 -18.1 -187.4C-17.2 -185 -13.8 -177.6 -12.5 -173.1C-11.2 -168.6 -9.8 -164.6 -10.1 -160.4C-10.3 -156.2 -13.3 -150.1 -14 -148Z" fill="#4476e6" stroke="#0a1a5e" stroke-width="1.5" stroke-linejoin="round" /><path d="M-26 -146L-20.5 -177.7M-24.7 -153L-32 -168M-23.5 -158L-13.5 -168M-25.5 -149L-14 -157" fill="none" stroke="#0a1a5e" stroke-width="1.6" stroke-linecap="round"/></g></g><g transform="rotate(133.9) scale(1.012)"><g transform="scale(1 1)"><path d="M-30 -140C-32 -143.3 -40.4 -155.1 -42 -160C-43.6 -164.9 -41.8 -165.1 -39.5 -169.2C-37.2 -173.2 -32.3 -179.5 -28.4 -184.3C-24.5 -189.1 -18.1 -195.9 -16 -198.2C-14.9 -195.1 -10.8 -185.5 -9.3 -179.5C-7.8 -173.5 -7.1 -167.2 -6.9 -162C-6.7 -156.8 -6.7 -152 -8 -148C-9.3 -144 -13.8 -139.7 -15 -138Z" fill="#4476e6" stroke="#0a1a5e" stroke-width="1.5" stroke-linejoin="round" /><path d="M-26 -146C-27.7 -149.1 -36.2 -159.1 -36.4 -164.4C-36.6 -169.7 -30.1 -174.2 -27 -178C-23.9 -181.8 -19.6 -185.8 -18.1 -187.4C-17.2 -185 -13.8 -177.6 -12.5 -173.1C-11.2 -168.6 -9.8 -164.6 -10.1 -160.4C-10.3 -156.2 -13.3 -150.1 -14 -148Z" fill="#4476e6" stroke="#0a1a5e" stroke-width="1.5" stroke-linejoin="round" /><path d="M-26 -146L-20.5 -177.7M-24.7 -153L-32 -168M-23.5 -158L-13.5 -168M-25.5 -149L-14 -157" fill="none" stroke="#0a1a5e" stroke-width="1.6" stroke-linecap="round"/></g><g transform="scale(-1 1)"><path d="M-30 -140C-32 -143.3 -40.4 -155.1 -42 -160C-43.6 -164.9 -41.8 -165.1 -39.5 -169.2C-37.2 -173.2 -32.3 -179.5 -28.4 -184.3C-24.5 -189.1 -18.1 -195.9 -16 -198.2C-14.9 -195.1 -10.8 -185.5 -9.3 -179.5C-7.8 -173.5 -7.1 -167.2 -6.9 -162C-6.7 -156.8 -6.7 -152 -8 -148C-9.3 -144 -13.8 -139.7 -15 -138Z" fill="#4476e6" stroke="#0a1a5e" stroke-width="1.5" stroke-linejoin="round" /><path d="M-26 -146C-27.7 -149.1 -36.2 -159.1 -36.4 -164.4C-36.6 -169.7 -30.1 -174.2 -27 -178C-23.9 -181.8 -19.6 -185.8 -18.1 -187.4C-17.2 -185 -13.8 -177.6 -12.5 -173.1C-11.2 -168.6 -9.8 -164.6 -10.1 -160.4C-10.3 -156.2 -13.3 -150.1 -14 -148Z" fill="#4476e6" stroke="#0a1a5e" stroke-width="1.5" stroke-linejoin="round" /><path d="M-26 -146L-20.5 -177.7M-24.7 -153L-32 -168M-23.5 -158L-13.5 -168M-25.5 -149L-14 -157" fill="none" stroke="#0a1a5e" stroke-width="1.6" stroke-linecap="round"/></g></g><g transform="rotate(180)"><g transform="scale(1 1)"><path d="M-30 -140C-32 -143.3 -40.4 -155.1 -42 -160C-43.6 -164.9 -41.8 -165.1 -39.5 -169.2C-37.2 -173.2 -32.3 -179.5 -28.4 -184.3C-24.5 -189.1 -18.1 -195.9 -16 -198.2C-14.9 -195.1 -10.8 -185.5 -9.3 -179.5C-7.8 -173.5 -7.1 -167.2 -6.9 -162C-6.7 -156.8 -6.7 -152 -8 -148C-9.3 -144 -13.8 -139.7 -15 -138Z" fill="#4476e6" stroke="#0a1a5e" stroke-width="1.5" stroke-linejoin="round" /><path d="M-26 -146C-27.7 -149.1 -36.2 -159.1 -36.4 -164.4C-36.6 -169.7 -30.1 -174.2 -27 -178C-23.9 -181.8 -19.6 -185.8 -18.1 -187.4C-17.2 -185 -13.8 -177.6 -12.5 -173.1C-11.2 -168.6 -9.8 -164.6 -10.1 -160.4C-10.3 -156.2 -13.3 -150.1 -14 -148Z" fill="#4476e6" stroke="#0a1a5e" stroke-width="1.5" stroke-linejoin="round" /><path d="M-26 -146L-20.5 -177.7M-24.7 -153L-32 -168M-23.5 -158L-13.5 -168M-25.5 -149L-14 -157" fill="none" stroke="#0a1a5e" stroke-width="1.6" stroke-linecap="round"/></g><g transform="scale(-1 1)"><path d="M-30 -140C-32 -143.3 -40.4 -155.1 -42 -160C-43.6 -164.9 -41.8 -165.1 -39.5 -169.2C-37.2 -173.2 -32.3 -179.5 -28.4 -184.3C-24.5 -189.1 -18.1 -195.9 -16 -198.2C-14.9 -195.1 -10.8 -185.5 -9.3 -179.5C-7.8 -173.5 -7.1 -167.2 -6.9 -162C-6.7 -156.8 -6.7 -152 -8 -148C-9.3 -144 -13.8 -139.7 -15 -138Z" fill="#4476e6" stroke="#0a1a5e" stroke-width="1.5" stroke-linejoin="round" /><path d="M-26 -146C-27.7 -149.1 -36.2 -159.1 -36.4 -164.4C-36.6 -169.7 -30.1 -174.2 -27 -178C-23.9 -181.8 -19.6 -185.8 -18.1 -187.4C-17.2 -185 -13.8 -177.6 -12.5 -173.1C-11.2 -168.6 -9.8 -164.6 -10.1 -160.4C-10.3 -156.2 -13.3 -150.1 -14 -148Z" fill="#4476e6" stroke="#0a1a5e" stroke-width="1.5" stroke-linejoin="round" /><path d="M-26 -146L-20.5 -177.7M-24.7 -153L-32 -168M-23.5 -158L-13.5 -168M-25.5 -149L-14 -157" fill="none" stroke="#0a1a5e" stroke-width="1.6" stroke-linecap="round"/></g></g><g transform="rotate(225.9) scale(1.01)"><g transform="scale(1 1)"><path d="M-30 -140C-32 -143.3 -40.4 -155.1 -42 -160C-43.6 -164.9 -41.8 -165.1 -39.5 -169.2C-37.2 -173.2 -32.3 -179.5 -28.4 -184.3C-24.5 -189.1 -18.1 -195.9 -16 -198.2C-14.9 -195.1 -10.8 -185.5 -9.3 -179.5C-7.8 -173.5 -7.1 -167.2 -6.9 -162C-6.7 -156.8 -6.7 -152 -8 -148C-9.3 -144 -13.8 -139.7 -15 -138Z" fill="#4476e6" stroke="#0a1a5e" stroke-width="1.5" stroke-linejoin="round" /><path d="M-26 -146C-27.7 -149.1 -36.2 -159.1 -36.4 -164.4C-36.6 -169.7 -30.1 -174.2 -27 -178C-23.9 -181.8 -19.6 -185.8 -18.1 -187.4C-17.2 -185 -13.8 -177.6 -12.5 -173.1C-11.2 -168.6 -9.8 -164.6 -10.1 -160.4C-10.3 -156.2 -13.3 -150.1 -14 -148Z" fill="#4476e6" stroke="#0a1a5e" stroke-width="1.5" stroke-linejoin="round" /><path d="M-26 -146L-20.5 -177.7M-24.7 -153L-32 -168M-23.5 -158L-13.5 -168M-25.5 -149L-14 -157" fill="none" stroke="#0a1a5e" stroke-width="1.6" stroke-linecap="round"/></g><g transform="scale(-1 1)"><path d="M-30 -140C-32 -143.3 -40.4 -155.1 -42 -160C-43.6 -164.9 -41.8 -165.1 -39.5 -169.2C-37.2 -173.2 -32.3 -179.5 -28.4 -184.3C-24.5 -189.1 -18.1 -195.9 -16 -198.2C-14.9 -195.1 -10.8 -185.5 -9.3 -179.5C-7.8 -173.5 -7.1 -167.2 -6.9 -162C-6.7 -156.8 -6.7 -152 -8 -148C-9.3 -144 -13.8 -139.7 -15 -138Z" fill="#4476e6" stroke="#0a1a5e" stroke-width="1.5" stroke-linejoin="round" /><path d="M-26 -146C-27.7 -149.1 -36.2 -159.1 -36.4 -164.4C-36.6 -169.7 -30.1 -174.2 -27 -178C-23.9 -181.8 -19.6 -185.8 -18.1 -187.4C-17.2 -185 -13.8 -177.6 -12.5 -173.1C-11.2 -168.6 -9.8 -164.6 -10.1 -160.4C-10.3 -156.2 -13.3 -150.1 -14 -148Z" fill="#4476e6" stroke="#0a1a5e" stroke-width="1.5" stroke-linejoin="round" /><path d="M-26 -146L-20.5 -177.7M-24.7 -153L-32 -168M-23.5 -158L-13.5 -168M-25.5 -149L-14 -157" fill="none" stroke="#0a1a5e" stroke-width="1.6" stroke-linecap="round"/></g></g><g transform="rotate(270)"><g transform="scale(1 1)"><path d="M-30 -140C-32 -143.3 -40.4 -155.1 -42 -160C-43.6 -164.9 -41.8 -165.1 -39.5 -169.2C-37.2 -173.2 -32.3 -179.5 -28.4 -184.3C-24.5 -189.1 -18.1 -195.9 -16 -198.2C-14.9 -195.1 -10.8 -185.5 -9.3 -179.5C-7.8 -173.5 -7.1 -167.2 -6.9 -162C-6.7 -156.8 -6.7 -152 -8 -148C-9.3 -144 -13.8 -139.7 -15 -138Z" fill="#4476e6" stroke="#0a1a5e" stroke-width="1.5" stroke-linejoin="round" /><path d="M-26 -146C-27.7 -149.1 -36.2 -159.1 -36.4 -164.4C-36.6 -169.7 -30.1 -174.2 -27 -178C-23.9 -181.8 -19.6 -185.8 -18.1 -187.4C-17.2 -185 -13.8 -177.6 -12.5 -173.1C-11.2 -168.6 -9.8 -164.6 -10.1 -160.4C-10.3 -156.2 -13.3 -150.1 -14 -148Z" fill="#4476e6" stroke="#0a1a5e" stroke-width="1.5" stroke-linejoin="round" /><path d="M-26 -146L-20.5 -177.7M-24.7 -153L-32 -168M-23.5 -158L-13.5 -168M-25.5 -149L-14 -157" fill="none" stroke="#0a1a5e" stroke-width="1.6" stroke-linecap="round"/></g><g transform="scale(-1 1)"><path d="M-30 -140C-32 -143.3 -40.4 -155.1 -42 -160C-43.6 -164.9 -41.8 -165.1 -39.5 -169.2C-37.2 -173.2 -32.3 -179.5 -28.4 -184.3C-24.5 -189.1 -18.1 -195.9 -16 -198.2C-14.9 -195.1 -10.8 -185.5 -9.3 -179.5C-7.8 -173.5 -7.1 -167.2 -6.9 -162C-6.7 -156.8 -6.7 -152 -8 -148C-9.3 -144 -13.8 -139.7 -15 -138Z" fill="#4476e6" stroke="#0a1a5e" stroke-width="1.5" stroke-linejoin="round" /><path d="M-26 -146C-27.7 -149.1 -36.2 -159.1 -36.4 -164.4C-36.6 -169.7 -30.1 -174.2 -27 -178C-23.9 -181.8 -19.6 -185.8 -18.1 -187.4C-17.2 -185 -13.8 -177.6 -12.5 -173.1C-11.2 -168.6 -9.8 -164.6 -10.1 -160.4C-10.3 -156.2 -13.3 -150.1 -14 -148Z" fill="#4476e6" stroke="#0a1a5e" stroke-width="1.5" stroke-linejoin="round" /><path d="M-26 -146L-20.5 -177.7M-24.7 -153L-32 -168M-23.5 -158L-13.5 -168M-25.5 -149L-14 -157" fill="none" stroke="#0a1a5e" stroke-width="1.6" stroke-linecap="round"/></g></g><g transform="rotate(313.8) scale(1.013)"><g transform="scale(1 1)"><path d="M-30 -140C-32 -143.3 -40.4 -155.1 -42 -160C-43.6 -164.9 -41.8 -165.1 -39.5 -169.2C-37.2 -173.2 -32.3 -179.5 -28.4 -184.3C-24.5 -189.1 -18.1 -195.9 -16 -198.2C-14.9 -195.1 -10.8 -185.5 -9.3 -179.5C-7.8 -173.5 -7.1 -167.2 -6.9 -162C-6.7 -156.8 -6.7 -152 -8 -148C-9.3 -144 -13.8 -139.7 -15 -138Z" fill="#4476e6" stroke="#0a1a5e" stroke-width="1.5" stroke-linejoin="round" /><path d="M-26 -146C-27.7 -149.1 -36.2 -159.1 -36.4 -164.4C-36.6 -169.7 -30.1 -174.2 -27 -178C-23.9 -181.8 -19.6 -185.8 -18.1 -187.4C-17.2 -185 -13.8 -177.6 -12.5 -173.1C-11.2 -168.6 -9.8 -164.6 -10.1 -160.4C-10.3 -156.2 -13.3 -150.1 -14 -148Z" fill="#4476e6" stroke="#0a1a5e" stroke-width="1.5" stroke-linejoin="round" /><path d="M-26 -146L-20.5 -177.7M-24.7 -153L-32 -168M-23.5 -158L-13.5 -168M-25.5 -149L-14 -157" fill="none" stroke="#0a1a5e" stroke-width="1.6" stroke-linecap="round"/></g><g transform="scale(-1 1)"><path d="M-30 -140C-32 -143.3 -40.4 -155.1 -42 -160C-43.6 -164.9 -41.8 -165.1 -39.5 -169.2C-37.2 -173.2 -32.3 -179.5 -28.4 -184.3C-24.5 -189.1 -18.1 -195.9 -16 -198.2C-14.9 -195.1 -10.8 -185.5 -9.3 -179.5C-7.8 -173.5 -7.1 -167.2 -6.9 -162C-6.7 -156.8 -6.7 -152 -8 -148C-9.3 -144 -13.8 -139.7 -15 -138Z" fill="#eee6e0" stroke="#070a1c" stroke-width="1.15" stroke-linejoin="round" /><path d="M-26 -146C-27.7 -149.1 -36.2 -159.1 -36.4 -164.4C-36.6 -169.7 -30.1 -174.2 -27 -178C-23.9 -181.8 -19.6 -185.8 -18.1 -187.4C-17.2 -185 -13.8 -177.6 -12.5 -173.1C-11.2 -168.6 -9.8 -164.6 -10.1 -160.4C-10.3 -156.2 -13.3 -150.1 -14 -148Z" fill="#4476e6" stroke="#070a1c" stroke-width="1.5" stroke-linejoin="round" /><path d="M-26 -146L-20.5 -177.7M-24.7 -153L-32 -168M-23.5 -158L-13.5 -168M-25.5 -149L-14 -157" fill="none" stroke="#0a1a5e" stroke-width="1.6" stroke-linecap="round"/></g></g><g transform="rotate(22.4)"><path d="M-20 -100C-21.2 -103.3 -25.6 -113 -27 -120C-28.4 -127 -28.3 -136.7 -28.4 -141.9C-28.5 -147.1 -28.3 -147.4 -27.7 -151.1C-27.1 -154.8 -26.3 -159.2 -25 -164C-23.7 -168.8 -22 -174.7 -19.8 -180.2C-17.6 -185.7 -14.7 -191.7 -11.9 -196.8C-9.1 -201.9 -5.6 -207 -2.9 -210.9C-0.2 -214.8 3 -218.9 4.2 -220.5C5.4 -219 9.1 -214.9 11.5 -211.7C13.9 -208.5 16.4 -204.9 18.5 -201.4C20.6 -197.9 22.3 -194.4 23.8 -190.4C25.3 -186.4 26.5 -181.9 27.5 -177.4C28.5 -172.9 29.4 -168.1 30 -163.7C30.6 -159.3 30.8 -154.2 31 -150.8C31.2 -147.4 31.4 -148.5 31.2 -143.4C30.9 -138.3 31 -127.2 29.5 -120C28 -112.8 23.2 -103.3 22 -100Z" fill="#eee6e0" stroke="#070a1c" stroke-width="1.15" stroke-linejoin="round" /><path d="M-12 -100C-13.2 -103.7 -17.6 -115.7 -19 -122C-20.4 -128.3 -20.2 -133.5 -20.1 -138C-20.1 -142.5 -19.5 -144.4 -18.7 -148.9C-17.9 -153.4 -16.7 -159.6 -15.1 -165.2C-13.5 -170.8 -11.1 -177 -8.9 -182.5C-6.7 -188 -4.3 -193.7 -2 -198C0.3 -202.3 3.7 -206.5 4.8 -208.2C5.8 -206.8 9.1 -203 11.1 -199.8C13.1 -196.6 15.2 -192.9 16.8 -188.9C18.4 -184.9 19.8 -180.4 21 -176C22.2 -171.6 23.2 -166.9 24 -162.6C24.8 -158.3 25.6 -154.8 26 -150.2C26.4 -145.6 26.7 -140.9 26.3 -135C25.9 -129.1 24.9 -120.8 23.5 -115C22.1 -109.2 18.9 -102.5 18 -100Z" fill="#52bdea" stroke="#070a1c" stroke-width="1.15" stroke-linejoin="round" /><path d="M-10.5 -134.5L3.9 -178.2L18.5 -137.7L4 -105Z" fill="#52bdea" stroke="none"/><path d="M-10.5 -134.5L3.9 -178.2L18.5 -137.7M-1.3 -172.6L4.8 -170.6M-3.5 -166L2.6 -164M-5.7 -159.3L0.4 -157.3M-7.9 -152.7L-1.8 -150.7M-10 -146.1L-4 -144.1M-12.2 -139.5L-6.2 -137.5M3.5 -169.9L9.5 -172.1M6.1 -162.7L12.1 -164.8M8.7 -155.4L14.7 -157.6M11.3 -148.2L17.3 -150.4M13.9 -141L19.9 -143.1" fill="none" stroke="#0e4258" stroke-width="1.5" stroke-linecap="round"/></g><g transform="rotate(68.3)"><path d="M-20 -100C-21.2 -103.3 -25.6 -113 -27 -120C-28.4 -127 -28.3 -136.7 -28.4 -141.9C-28.5 -147.1 -28.3 -147.4 -27.7 -151.1C-27.1 -154.8 -26.3 -159.2 -25 -164C-23.7 -168.8 -22 -174.7 -19.8 -180.2C-17.6 -185.7 -14.7 -191.7 -11.9 -196.8C-9.1 -201.9 -5.6 -207 -2.9 -210.9C-0.2 -214.8 3 -218.9 4.2 -220.5C5.4 -219 9.1 -214.9 11.5 -211.7C13.9 -208.5 16.4 -204.9 18.5 -201.4C20.6 -197.9 22.3 -194.4 23.8 -190.4C25.3 -186.4 26.5 -181.9 27.5 -177.4C28.5 -172.9 29.4 -168.1 30 -163.7C30.6 -159.3 30.8 -154.2 31 -150.8C31.2 -147.4 31.4 -148.5 31.2 -143.4C30.9 -138.3 31 -127.2 29.5 -120C28 -112.8 23.2 -103.3 22 -100Z" fill="#eee6e0" stroke="#070a1c" stroke-width="1.15" stroke-linejoin="round" /><path d="M-12 -100C-13.2 -103.7 -17.6 -115.7 -19 -122C-20.4 -128.3 -20.2 -133.5 -20.1 -138C-20.1 -142.5 -19.5 -144.4 -18.7 -148.9C-17.9 -153.4 -16.7 -159.6 -15.1 -165.2C-13.5 -170.8 -11.1 -177 -8.9 -182.5C-6.7 -188 -4.3 -193.7 -2 -198C0.3 -202.3 3.7 -206.5 4.8 -208.2C5.8 -206.8 9.1 -203 11.1 -199.8C13.1 -196.6 15.2 -192.9 16.8 -188.9C18.4 -184.9 19.8 -180.4 21 -176C22.2 -171.6 23.2 -166.9 24 -162.6C24.8 -158.3 25.6 -154.8 26 -150.2C26.4 -145.6 26.7 -140.9 26.3 -135C25.9 -129.1 24.9 -120.8 23.5 -115C22.1 -109.2 18.9 -102.5 18 -100Z" fill="#52bdea" stroke="#070a1c" stroke-width="1.15" stroke-linejoin="round" /><path d="M-10.5 -134.5L3.9 -178.2L18.5 -137.7L4 -105Z" fill="#52bdea" stroke="none"/><path d="M-10.5 -134.5L3.9 -178.2L18.5 -137.7M-1.3 -172.6L4.8 -170.6M-3.5 -166L2.6 -164M-5.7 -159.3L0.4 -157.3M-7.9 -152.7L-1.8 -150.7M-10 -146.1L-4 -144.1M-12.2 -139.5L-6.2 -137.5M3.5 -169.9L9.5 -172.1M6.1 -162.7L12.1 -164.8M8.7 -155.4L14.7 -157.6M11.3 -148.2L17.3 -150.4M13.9 -141L19.9 -143.1" fill="none" stroke="#0e4258" stroke-width="1.5" stroke-linecap="round"/></g><g transform="rotate(110.8)"><path d="M-20 -100C-21.2 -103.3 -25.6 -113 -27 -120C-28.4 -127 -28.3 -136.7 -28.4 -141.9C-28.5 -147.1 -28.3 -147.4 -27.7 -151.1C-27.1 -154.8 -26.3 -159.2 -25 -164C-23.7 -168.8 -22 -174.7 -19.8 -180.2C-17.6 -185.7 -14.7 -191.7 -11.9 -196.8C-9.1 -201.9 -5.6 -207 -2.9 -210.9C-0.2 -214.8 3 -218.9 4.2 -220.5C5.4 -219 9.1 -214.9 11.5 -211.7C13.9 -208.5 16.4 -204.9 18.5 -201.4C20.6 -197.9 22.3 -194.4 23.8 -190.4C25.3 -186.4 26.5 -181.9 27.5 -177.4C28.5 -172.9 29.4 -168.1 30 -163.7C30.6 -159.3 30.8 -154.2 31 -150.8C31.2 -147.4 31.4 -148.5 31.2 -143.4C30.9 -138.3 31 -127.2 29.5 -120C28 -112.8 23.2 -103.3 22 -100Z" fill="#eee6e0" stroke="#070a1c" stroke-width="1.15" stroke-linejoin="round" /><path d="M-12 -100C-13.2 -103.7 -17.6 -115.7 -19 -122C-20.4 -128.3 -20.2 -133.5 -20.1 -138C-20.1 -142.5 -19.5 -144.4 -18.7 -148.9C-17.9 -153.4 -16.7 -159.6 -15.1 -165.2C-13.5 -170.8 -11.1 -177 -8.9 -182.5C-6.7 -188 -4.3 -193.7 -2 -198C0.3 -202.3 3.7 -206.5 4.8 -208.2C5.8 -206.8 9.1 -203 11.1 -199.8C13.1 -196.6 15.2 -192.9 16.8 -188.9C18.4 -184.9 19.8 -180.4 21 -176C22.2 -171.6 23.2 -166.9 24 -162.6C24.8 -158.3 25.6 -154.8 26 -150.2C26.4 -145.6 26.7 -140.9 26.3 -135C25.9 -129.1 24.9 -120.8 23.5 -115C22.1 -109.2 18.9 -102.5 18 -100Z" fill="#52bdea" stroke="#070a1c" stroke-width="1.15" stroke-linejoin="round" /><path d="M-10.5 -134.5L3.9 -178.2L18.5 -137.7L4 -105Z" fill="#52bdea" stroke="none"/><path d="M-10.5 -134.5L3.9 -178.2L18.5 -137.7M-1.3 -172.6L4.8 -170.6M-3.5 -166L2.6 -164M-5.7 -159.3L0.4 -157.3M-7.9 -152.7L-1.8 -150.7M-10 -146.1L-4 -144.1M-12.2 -139.5L-6.2 -137.5M3.5 -169.9L9.5 -172.1M6.1 -162.7L12.1 -164.8M8.7 -155.4L14.7 -157.6M11.3 -148.2L17.3 -150.4M13.9 -141L19.9 -143.1" fill="none" stroke="#0e4258" stroke-width="1.5" stroke-linecap="round"/></g><g transform="rotate(156.7)"><path d="M-20 -100C-21.2 -103.3 -25.6 -113 -27 -120C-28.4 -127 -28.3 -136.7 -28.4 -141.9C-28.5 -147.1 -28.3 -147.4 -27.7 -151.1C-27.1 -154.8 -26.3 -159.2 -25 -164C-23.7 -168.8 -22 -174.7 -19.8 -180.2C-17.6 -185.7 -14.7 -191.7 -11.9 -196.8C-9.1 -201.9 -5.6 -207 -2.9 -210.9C-0.2 -214.8 3 -218.9 4.2 -220.5C5.4 -219 9.1 -214.9 11.5 -211.7C13.9 -208.5 16.4 -204.9 18.5 -201.4C20.6 -197.9 22.3 -194.4 23.8 -190.4C25.3 -186.4 26.5 -181.9 27.5 -177.4C28.5 -172.9 29.4 -168.1 30 -163.7C30.6 -159.3 30.8 -154.2 31 -150.8C31.2 -147.4 31.4 -148.5 31.2 -143.4C30.9 -138.3 31 -127.2 29.5 -120C28 -112.8 23.2 -103.3 22 -100Z" fill="#eee6e0" stroke="#070a1c" stroke-width="1.15" stroke-linejoin="round" /><path d="M-12 -100C-13.2 -103.7 -17.6 -115.7 -19 -122C-20.4 -128.3 -20.2 -133.5 -20.1 -138C-20.1 -142.5 -19.5 -144.4 -18.7 -148.9C-17.9 -153.4 -16.7 -159.6 -15.1 -165.2C-13.5 -170.8 -11.1 -177 -8.9 -182.5C-6.7 -188 -4.3 -193.7 -2 -198C0.3 -202.3 3.7 -206.5 4.8 -208.2C5.8 -206.8 9.1 -203 11.1 -199.8C13.1 -196.6 15.2 -192.9 16.8 -188.9C18.4 -184.9 19.8 -180.4 21 -176C22.2 -171.6 23.2 -166.9 24 -162.6C24.8 -158.3 25.6 -154.8 26 -150.2C26.4 -145.6 26.7 -140.9 26.3 -135C25.9 -129.1 24.9 -120.8 23.5 -115C22.1 -109.2 18.9 -102.5 18 -100Z" fill="#52bdea" stroke="#070a1c" stroke-width="1.15" stroke-linejoin="round" /><path d="M-10.5 -134.5L3.9 -178.2L18.5 -137.7L4 -105Z" fill="#52bdea" stroke="none"/><path d="M-10.5 -134.5L3.9 -178.2L18.5 -137.7M-1.3 -172.6L4.8 -170.6M-3.5 -166L2.6 -164M-5.7 -159.3L0.4 -157.3M-7.9 -152.7L-1.8 -150.7M-10 -146.1L-4 -144.1M-12.2 -139.5L-6.2 -137.5M3.5 -169.9L9.5 -172.1M6.1 -162.7L12.1 -164.8M8.7 -155.4L14.7 -157.6M11.3 -148.2L17.3 -150.4M13.9 -141L19.9 -143.1" fill="none" stroke="#0e4258" stroke-width="1.5" stroke-linecap="round"/></g><g transform="rotate(202.4)"><path d="M-20 -100C-21.2 -103.3 -25.6 -113 -27 -120C-28.4 -127 -28.3 -136.7 -28.4 -141.9C-28.5 -147.1 -28.3 -147.4 -27.7 -151.1C-27.1 -154.8 -26.3 -159.2 -25 -164C-23.7 -168.8 -22 -174.7 -19.8 -180.2C-17.6 -185.7 -14.7 -191.7 -11.9 -196.8C-9.1 -201.9 -5.6 -207 -2.9 -210.9C-0.2 -214.8 3 -218.9 4.2 -220.5C5.4 -219 9.1 -214.9 11.5 -211.7C13.9 -208.5 16.4 -204.9 18.5 -201.4C20.6 -197.9 22.3 -194.4 23.8 -190.4C25.3 -186.4 26.5 -181.9 27.5 -177.4C28.5 -172.9 29.4 -168.1 30 -163.7C30.6 -159.3 30.8 -154.2 31 -150.8C31.2 -147.4 31.4 -148.5 31.2 -143.4C30.9 -138.3 31 -127.2 29.5 -120C28 -112.8 23.2 -103.3 22 -100Z" fill="#eee6e0" stroke="#070a1c" stroke-width="1.15" stroke-linejoin="round" /><path d="M-12 -100C-13.2 -103.7 -17.6 -115.7 -19 -122C-20.4 -128.3 -20.2 -133.5 -20.1 -138C-20.1 -142.5 -19.5 -144.4 -18.7 -148.9C-17.9 -153.4 -16.7 -159.6 -15.1 -165.2C-13.5 -170.8 -11.1 -177 -8.9 -182.5C-6.7 -188 -4.3 -193.7 -2 -198C0.3 -202.3 3.7 -206.5 4.8 -208.2C5.8 -206.8 9.1 -203 11.1 -199.8C13.1 -196.6 15.2 -192.9 16.8 -188.9C18.4 -184.9 19.8 -180.4 21 -176C22.2 -171.6 23.2 -166.9 24 -162.6C24.8 -158.3 25.6 -154.8 26 -150.2C26.4 -145.6 26.7 -140.9 26.3 -135C25.9 -129.1 24.9 -120.8 23.5 -115C22.1 -109.2 18.9 -102.5 18 -100Z" fill="#52bdea" stroke="#070a1c" stroke-width="1.15" stroke-linejoin="round" /><path d="M-10.5 -134.5L3.9 -178.2L18.5 -137.7L4 -105Z" fill="#4476e6" stroke="none"/><path d="M-10.5 -134.5L3.9 -178.2L18.5 -137.7M-1.3 -172.6L4.8 -170.6M-3.5 -166L2.6 -164M-5.7 -159.3L0.4 -157.3M-7.9 -152.7L-1.8 -150.7M-10 -146.1L-4 -144.1M-12.2 -139.5L-6.2 -137.5M3.5 -169.9L9.5 -172.1M6.1 -162.7L12.1 -164.8M8.7 -155.4L14.7 -157.6M11.3 -148.2L17.3 -150.4M13.9 -141L19.9 -143.1" fill="none" stroke="#0e4258" stroke-width="1.5" stroke-linecap="round"/></g><g transform="rotate(247.4)"><path d="M-20 -100C-21.2 -103.3 -25.6 -113 -27 -120C-28.4 -127 -28.3 -136.7 -28.4 -141.9C-28.5 -147.1 -28.3 -147.4 -27.7 -151.1C-27.1 -154.8 -26.3 -159.2 -25 -164C-23.7 -168.8 -22 -174.7 -19.8 -180.2C-17.6 -185.7 -14.7 -191.7 -11.9 -196.8C-9.1 -201.9 -5.6 -207 -2.9 -210.9C-0.2 -214.8 3 -218.9 4.2 -220.5C5.4 -219 9.1 -214.9 11.5 -211.7C13.9 -208.5 16.4 -204.9 18.5 -201.4C20.6 -197.9 22.3 -194.4 23.8 -190.4C25.3 -186.4 26.5 -181.9 27.5 -177.4C28.5 -172.9 29.4 -168.1 30 -163.7C30.6 -159.3 30.8 -154.2 31 -150.8C31.2 -147.4 31.4 -148.5 31.2 -143.4C30.9 -138.3 31 -127.2 29.5 -120C28 -112.8 23.2 -103.3 22 -100Z" fill="#eee6e0" stroke="#070a1c" stroke-width="1.15" stroke-linejoin="round" /><path d="M-12 -100C-13.2 -103.7 -17.6 -115.7 -19 -122C-20.4 -128.3 -20.2 -133.5 -20.1 -138C-20.1 -142.5 -19.5 -144.4 -18.7 -148.9C-17.9 -153.4 -16.7 -159.6 -15.1 -165.2C-13.5 -170.8 -11.1 -177 -8.9 -182.5C-6.7 -188 -4.3 -193.7 -2 -198C0.3 -202.3 3.7 -206.5 4.8 -208.2C5.8 -206.8 9.1 -203 11.1 -199.8C13.1 -196.6 15.2 -192.9 16.8 -188.9C18.4 -184.9 19.8 -180.4 21 -176C22.2 -171.6 23.2 -166.9 24 -162.6C24.8 -158.3 25.6 -154.8 26 -150.2C26.4 -145.6 26.7 -140.9 26.3 -135C25.9 -129.1 24.9 -120.8 23.5 -115C22.1 -109.2 18.9 -102.5 18 -100Z" fill="#52bdea" stroke="#070a1c" stroke-width="1.15" stroke-linejoin="round" /><path d="M-10.5 -134.5L3.9 -178.2L18.5 -137.7L4 -105Z" fill="#52bdea" stroke="none"/><path d="M-10.5 -134.5L3.9 -178.2L18.5 -137.7M-1.3 -172.6L4.8 -170.6M-3.5 -166L2.6 -164M-5.7 -159.3L0.4 -157.3M-7.9 -152.7L-1.8 -150.7M-10 -146.1L-4 -144.1M-12.2 -139.5L-6.2 -137.5M3.5 -169.9L9.5 -172.1M6.1 -162.7L12.1 -164.8M8.7 -155.4L14.7 -157.6M11.3 -148.2L17.3 -150.4M13.9 -141L19.9 -143.1" fill="none" stroke="#0e4258" stroke-width="1.5" stroke-linecap="round"/></g><g transform="rotate(291)"><path d="M-20 -100C-21.2 -103.3 -25.6 -113 -27 -120C-28.4 -127 -28.3 -136.7 -28.4 -141.9C-28.5 -147.1 -28.3 -147.4 -27.7 -151.1C-27.1 -154.8 -26.3 -159.2 -25 -164C-23.7 -168.8 -22 -174.7 -19.8 -180.2C-17.6 -185.7 -14.7 -191.7 -11.9 -196.8C-9.1 -201.9 -5.6 -207 -2.9 -210.9C-0.2 -214.8 3 -218.9 4.2 -220.5C5.4 -219 9.1 -214.9 11.5 -211.7C13.9 -208.5 16.4 -204.9 18.5 -201.4C20.6 -197.9 22.3 -194.4 23.8 -190.4C25.3 -186.4 26.5 -181.9 27.5 -177.4C28.5 -172.9 29.4 -168.1 30 -163.7C30.6 -159.3 30.8 -154.2 31 -150.8C31.2 -147.4 31.4 -148.5 31.2 -143.4C30.9 -138.3 31 -127.2 29.5 -120C28 -112.8 23.2 -103.3 22 -100Z" fill="#eee6e0" stroke="#070a1c" stroke-width="1.15" stroke-linejoin="round" /><path d="M-12 -100C-13.2 -103.7 -17.6 -115.7 -19 -122C-20.4 -128.3 -20.2 -133.5 -20.1 -138C-20.1 -142.5 -19.5 -144.4 -18.7 -148.9C-17.9 -153.4 -16.7 -159.6 -15.1 -165.2C-13.5 -170.8 -11.1 -177 -8.9 -182.5C-6.7 -188 -4.3 -193.7 -2 -198C0.3 -202.3 3.7 -206.5 4.8 -208.2C5.8 -206.8 9.1 -203 11.1 -199.8C13.1 -196.6 15.2 -192.9 16.8 -188.9C18.4 -184.9 19.8 -180.4 21 -176C22.2 -171.6 23.2 -166.9 24 -162.6C24.8 -158.3 25.6 -154.8 26 -150.2C26.4 -145.6 26.7 -140.9 26.3 -135C25.9 -129.1 24.9 -120.8 23.5 -115C22.1 -109.2 18.9 -102.5 18 -100Z" fill="#52bdea" stroke="#070a1c" stroke-width="1.15" stroke-linejoin="round" /><path d="M-10.5 -134.5L3.9 -178.2L18.5 -137.7L4 -105Z" fill="#52bdea" stroke="none"/><path d="M-10.5 -134.5L3.9 -178.2L18.5 -137.7M-1.3 -172.6L4.8 -170.6M-3.5 -166L2.6 -164M-5.7 -159.3L0.4 -157.3M-7.9 -152.7L-1.8 -150.7M-10 -146.1L-4 -144.1M-12.2 -139.5L-6.2 -137.5M3.5 -169.9L9.5 -172.1M6.1 -162.7L12.1 -164.8M8.7 -155.4L14.7 -157.6M11.3 -148.2L17.3 -150.4M13.9 -141L19.9 -143.1" fill="none" stroke="#0e4258" stroke-width="1.5" stroke-linecap="round"/></g><g transform="rotate(335.9)"><path d="M-20 -100C-21.2 -103.3 -25.6 -113 -27 -120C-28.4 -127 -28.3 -136.7 -28.4 -141.9C-28.5 -147.1 -28.3 -147.4 -27.7 -151.1C-27.1 -154.8 -26.3 -159.2 -25 -164C-23.7 -168.8 -22 -174.7 -19.8 -180.2C-17.6 -185.7 -14.7 -191.7 -11.9 -196.8C-9.1 -201.9 -5.6 -207 -2.9 -210.9C-0.2 -214.8 3 -218.9 4.2 -220.5C5.4 -219 9.1 -214.9 11.5 -211.7C13.9 -208.5 16.4 -204.9 18.5 -201.4C20.6 -197.9 22.3 -194.4 23.8 -190.4C25.3 -186.4 26.5 -181.9 27.5 -177.4C28.5 -172.9 29.4 -168.1 30 -163.7C30.6 -159.3 30.8 -154.2 31 -150.8C31.2 -147.4 31.4 -148.5 31.2 -143.4C30.9 -138.3 31 -127.2 29.5 -120C28 -112.8 23.2 -103.3 22 -100Z" fill="#eee6e0" stroke="#070a1c" stroke-width="1.15" stroke-linejoin="round" /><path d="M-12 -100C-13.2 -103.7 -17.6 -115.7 -19 -122C-20.4 -128.3 -20.2 -133.5 -20.1 -138C-20.1 -142.5 -19.5 -144.4 -18.7 -148.9C-17.9 -153.4 -16.7 -159.6 -15.1 -165.2C-13.5 -170.8 -11.1 -177 -8.9 -182.5C-6.7 -188 -4.3 -193.7 -2 -198C0.3 -202.3 3.7 -206.5 4.8 -208.2C5.8 -206.8 9.1 -203 11.1 -199.8C13.1 -196.6 15.2 -192.9 16.8 -188.9C18.4 -184.9 19.8 -180.4 21 -176C22.2 -171.6 23.2 -166.9 24 -162.6C24.8 -158.3 25.6 -154.8 26 -150.2C26.4 -145.6 26.7 -140.9 26.3 -135C25.9 -129.1 24.9 -120.8 23.5 -115C22.1 -109.2 18.9 -102.5 18 -100Z" fill="#52bdea" stroke="#070a1c" stroke-width="1.15" stroke-linejoin="round" /><path d="M-10.5 -134.5L3.9 -178.2L18.5 -137.7L4 -105Z" fill="#52bdea" stroke="none"/><path d="M-10.5 -134.5L3.9 -178.2L18.5 -137.7M-1.3 -172.6L4.8 -170.6M-3.5 -166L2.6 -164M-5.7 -159.3L0.4 -157.3M-7.9 -152.7L-1.8 -150.7M-10 -146.1L-4 -144.1M-12.2 -139.5L-6.2 -137.5M3.5 -169.9L9.5 -172.1M6.1 -162.7L12.1 -164.8M8.7 -155.4L14.7 -157.6M11.3 -148.2L17.3 -150.4M13.9 -141L19.9 -143.1" fill="none" stroke="#0e4258" stroke-width="1.5" stroke-linecap="round"/></g><g transform="rotate(0)"><path d="M-12 -55C-15 -57.5 -25 -64.5 -30 -70C-35 -75.5 -39.5 -82.2 -42 -88C-44.5 -93.8 -45.1 -99.8 -45 -105C-44.9 -110.2 -44 -114.2 -41.5 -119.4C-39 -124.6 -34 -130.6 -29.7 -136C-25.4 -141.4 -19.4 -147.8 -15.5 -151.8C-11.6 -155.9 -8.9 -158.2 -6.1 -160.3C-3.3 -162.4 0.2 -163.8 1.5 -164.5C2.9 -163.8 7.2 -162.2 10 -160.5C12.8 -158.8 14.5 -157.7 18.2 -154C21.9 -150.3 28.2 -144 32.4 -138.3C36.6 -132.6 41 -125.3 43.4 -119.8C45.8 -114.2 46.9 -110.3 47 -105C47.1 -99.7 46.5 -93.8 44 -88C41.5 -82.2 37 -75.5 32 -70C27 -64.5 17 -57.5 14 -55Z" fill="#4a6b66" stroke="#070a1c" stroke-width="1.1" stroke-linejoin="round" /><path d="M-10 -58C-12.7 -60.3 -21.5 -67 -26 -72C-30.5 -77 -34.8 -82.7 -37 -88C-39.2 -93.3 -39.8 -98.9 -39.5 -104C-39.2 -109.1 -37.3 -114.2 -35 -118.8C-32.7 -123.4 -29.4 -127 -25.5 -131.8C-21.6 -136.6 -15.1 -144 -11.5 -147.7C-7.9 -151.4 -6.2 -152.4 -4 -154C-1.8 -155.6 0.6 -156.5 1.5 -157C2.4 -156.6 4.8 -155.7 7 -154.5C9.2 -153.3 10.9 -153.3 14.5 -150C18.1 -146.7 24.8 -139.8 28.7 -134.5C32.6 -129.2 36.1 -123.2 38.2 -118.1C40.3 -113 41.4 -109 41.5 -104C41.6 -99 41.2 -93.3 39 -88C36.8 -82.7 32.5 -77 28 -72C23.5 -67 14.7 -60.3 12 -58Z" fill="#c4aeab" stroke="#070a1c" stroke-width="1.1" stroke-linejoin="round" /><path d="M-9 -70C-10.2 -72 -14.3 -77.7 -16 -82C-17.7 -86.3 -18.7 -91.5 -19 -96C-19.3 -100.5 -18.4 -104.8 -17.8 -109.1C-17.2 -113.4 -17.1 -117.4 -15.5 -121.8C-13.9 -126.2 -10.8 -131.9 -8 -135.3C-5.2 -138.8 -0.1 -141.3 1.5 -142.5C2.9 -141.2 7.3 -138.5 10 -134.5C12.7 -130.5 15.7 -123.6 17.5 -118.5C19.3 -113.4 20.2 -107.8 20.8 -104C21.4 -100.2 21.5 -99.7 21 -96C20.5 -92.3 19.7 -86.3 18 -82C16.3 -77.7 12.2 -72 11 -70Z" fill="#52bdea" stroke="#070a1c" stroke-width="1.1" stroke-linejoin="round" /><path d="M-8.6 -70C-9.2 -73 -11.8 -82.7 -12.4 -88C-13 -93.3 -12.6 -97.7 -12.2 -102C-11.8 -106.3 -10.8 -110.4 -9.8 -114C-8.9 -117.6 -7 -122.1 -6.5 -123.7C-6 -122.1 -4.3 -117.6 -3.4 -114C-2.5 -110.4 -1.4 -106.3 -1 -102C-0.6 -97.7 -0.2 -93.3 -0.8 -88C-1.4 -82.7 -4 -73 -4.6 -70Z" fill="#4476e6" stroke="#0a1a5e" stroke-width="1.1" stroke-linejoin="round" /><path d="M-7.6 -72C-7.9 -75 -9.2 -84.8 -9.4 -90C-9.6 -95.2 -9.5 -99 -9 -103C-8.5 -107 -6.9 -111.9 -6.5 -113.7C-6.1 -111.9 -4.6 -107 -4.2 -103C-3.7 -99 -3.6 -95.2 -3.8 -90C-4 -84.8 -5.3 -75 -5.6 -72" stroke="#0a1a5e" stroke-width="1.1" fill="none"/><path d="M5.6 -70C5 -73 2.4 -82.7 1.8 -88C1.2 -93.3 1.6 -97.7 2 -102C2.4 -106.3 3.5 -110.5 4.4 -114C5.3 -117.5 6.7 -121.6 7.2 -123.1C7.8 -121.6 9.8 -117.5 10.8 -114C11.8 -110.5 12.8 -106.3 13.2 -102C13.6 -97.7 14 -93.3 13.4 -88C12.8 -82.7 10.2 -73 9.6 -70Z" fill="#4476e6" stroke="#0a1a5e" stroke-width="1.1" stroke-linejoin="round" /><path d="M6.6 -72C6.3 -75 5 -84.8 4.8 -90C4.6 -95.2 4.8 -99.2 5.2 -103C5.6 -106.8 6.9 -111.4 7.2 -113.1C7.7 -111.4 9.5 -106.8 10 -103C10.5 -99.2 10.6 -95.2 10.4 -90C10.2 -84.8 8.9 -75 8.6 -72" stroke="#0a1a5e" stroke-width="1.1" fill="none"/></g><g transform="rotate(45.7)"><path d="M-12 -55C-15 -57.5 -25 -64.5 -30 -70C-35 -75.5 -39.5 -82.2 -42 -88C-44.5 -93.8 -45.1 -99.8 -45 -105C-44.9 -110.2 -44 -114.2 -41.5 -119.4C-39 -124.6 -34 -130.6 -29.7 -136C-25.4 -141.4 -19.4 -147.8 -15.5 -151.8C-11.6 -155.9 -8.9 -158.2 -6.1 -160.3C-3.3 -162.4 0.2 -163.8 1.5 -164.5C2.9 -163.8 7.2 -162.2 10 -160.5C12.8 -158.8 14.5 -157.7 18.2 -154C21.9 -150.3 28.2 -144 32.4 -138.3C36.6 -132.6 41 -125.3 43.4 -119.8C45.8 -114.2 46.9 -110.3 47 -105C47.1 -99.7 46.5 -93.8 44 -88C41.5 -82.2 37 -75.5 32 -70C27 -64.5 17 -57.5 14 -55Z" fill="#4a6b66" stroke="#070a1c" stroke-width="1.1" stroke-linejoin="round" /><path d="M-10 -58C-12.7 -60.3 -21.5 -67 -26 -72C-30.5 -77 -34.8 -82.7 -37 -88C-39.2 -93.3 -39.8 -98.9 -39.5 -104C-39.2 -109.1 -37.3 -114.2 -35 -118.8C-32.7 -123.4 -29.4 -127 -25.5 -131.8C-21.6 -136.6 -15.1 -144 -11.5 -147.7C-7.9 -151.4 -6.2 -152.4 -4 -154C-1.8 -155.6 0.6 -156.5 1.5 -157C2.4 -156.6 4.8 -155.7 7 -154.5C9.2 -153.3 10.9 -153.3 14.5 -150C18.1 -146.7 24.8 -139.8 28.7 -134.5C32.6 -129.2 36.1 -123.2 38.2 -118.1C40.3 -113 41.4 -109 41.5 -104C41.6 -99 41.2 -93.3 39 -88C36.8 -82.7 32.5 -77 28 -72C23.5 -67 14.7 -60.3 12 -58Z" fill="#c4aeab" stroke="#070a1c" stroke-width="1.1" stroke-linejoin="round" /><path d="M-9 -70C-10.2 -72 -14.3 -77.7 -16 -82C-17.7 -86.3 -18.7 -91.5 -19 -96C-19.3 -100.5 -18.4 -104.8 -17.8 -109.1C-17.2 -113.4 -17.1 -117.4 -15.5 -121.8C-13.9 -126.2 -10.8 -131.9 -8 -135.3C-5.2 -138.8 -0.1 -141.3 1.5 -142.5C2.9 -141.2 7.3 -138.5 10 -134.5C12.7 -130.5 15.7 -123.6 17.5 -118.5C19.3 -113.4 20.2 -107.8 20.8 -104C21.4 -100.2 21.5 -99.7 21 -96C20.5 -92.3 19.7 -86.3 18 -82C16.3 -77.7 12.2 -72 11 -70Z" fill="#52bdea" stroke="#070a1c" stroke-width="1.1" stroke-linejoin="round" /><path d="M-8.6 -70C-9.2 -73 -11.8 -82.7 -12.4 -88C-13 -93.3 -12.6 -97.7 -12.2 -102C-11.8 -106.3 -10.8 -110.4 -9.8 -114C-8.9 -117.6 -7 -122.1 -6.5 -123.7C-6 -122.1 -4.3 -117.6 -3.4 -114C-2.5 -110.4 -1.4 -106.3 -1 -102C-0.6 -97.7 -0.2 -93.3 -0.8 -88C-1.4 -82.7 -4 -73 -4.6 -70Z" fill="#4476e6" stroke="#0a1a5e" stroke-width="1.1" stroke-linejoin="round" /><path d="M-7.6 -72C-7.9 -75 -9.2 -84.8 -9.4 -90C-9.6 -95.2 -9.5 -99 -9 -103C-8.5 -107 -6.9 -111.9 -6.5 -113.7C-6.1 -111.9 -4.6 -107 -4.2 -103C-3.7 -99 -3.6 -95.2 -3.8 -90C-4 -84.8 -5.3 -75 -5.6 -72" stroke="#0a1a5e" stroke-width="1.1" fill="none"/><path d="M5.6 -70C5 -73 2.4 -82.7 1.8 -88C1.2 -93.3 1.6 -97.7 2 -102C2.4 -106.3 3.5 -110.5 4.4 -114C5.3 -117.5 6.7 -121.6 7.2 -123.1C7.8 -121.6 9.8 -117.5 10.8 -114C11.8 -110.5 12.8 -106.3 13.2 -102C13.6 -97.7 14 -93.3 13.4 -88C12.8 -82.7 10.2 -73 9.6 -70Z" fill="#4476e6" stroke="#0a1a5e" stroke-width="1.1" stroke-linejoin="round" /><path d="M6.6 -72C6.3 -75 5 -84.8 4.8 -90C4.6 -95.2 4.8 -99.2 5.2 -103C5.6 -106.8 6.9 -111.4 7.2 -113.1C7.7 -111.4 9.5 -106.8 10 -103C10.5 -99.2 10.6 -95.2 10.4 -90C10.2 -84.8 8.9 -75 8.6 -72" stroke="#0a1a5e" stroke-width="1.1" fill="none"/></g><g transform="rotate(90.1)"><path d="M-12 -55C-15 -57.5 -25 -64.5 -30 -70C-35 -75.5 -39.5 -82.2 -42 -88C-44.5 -93.8 -45.1 -99.8 -45 -105C-44.9 -110.2 -44 -114.2 -41.5 -119.4C-39 -124.6 -34 -130.6 -29.7 -136C-25.4 -141.4 -19.4 -147.8 -15.5 -151.8C-11.6 -155.9 -8.9 -158.2 -6.1 -160.3C-3.3 -162.4 0.2 -163.8 1.5 -164.5C2.9 -163.8 7.2 -162.2 10 -160.5C12.8 -158.8 14.5 -157.7 18.2 -154C21.9 -150.3 28.2 -144 32.4 -138.3C36.6 -132.6 41 -125.3 43.4 -119.8C45.8 -114.2 46.9 -110.3 47 -105C47.1 -99.7 46.5 -93.8 44 -88C41.5 -82.2 37 -75.5 32 -70C27 -64.5 17 -57.5 14 -55Z" fill="#4a6b66" stroke="#070a1c" stroke-width="1.1" stroke-linejoin="round" /><path d="M-10 -58C-12.7 -60.3 -21.5 -67 -26 -72C-30.5 -77 -34.8 -82.7 -37 -88C-39.2 -93.3 -39.8 -98.9 -39.5 -104C-39.2 -109.1 -37.3 -114.2 -35 -118.8C-32.7 -123.4 -29.4 -127 -25.5 -131.8C-21.6 -136.6 -15.1 -144 -11.5 -147.7C-7.9 -151.4 -6.2 -152.4 -4 -154C-1.8 -155.6 0.6 -156.5 1.5 -157C2.4 -156.6 4.8 -155.7 7 -154.5C9.2 -153.3 10.9 -153.3 14.5 -150C18.1 -146.7 24.8 -139.8 28.7 -134.5C32.6 -129.2 36.1 -123.2 38.2 -118.1C40.3 -113 41.4 -109 41.5 -104C41.6 -99 41.2 -93.3 39 -88C36.8 -82.7 32.5 -77 28 -72C23.5 -67 14.7 -60.3 12 -58Z" fill="#c4aeab" stroke="#070a1c" stroke-width="1.1" stroke-linejoin="round" /><path d="M-9 -70C-10.2 -72 -14.3 -77.7 -16 -82C-17.7 -86.3 -18.7 -91.5 -19 -96C-19.3 -100.5 -18.4 -104.8 -17.8 -109.1C-17.2 -113.4 -17.1 -117.4 -15.5 -121.8C-13.9 -126.2 -10.8 -131.9 -8 -135.3C-5.2 -138.8 -0.1 -141.3 1.5 -142.5C2.9 -141.2 7.3 -138.5 10 -134.5C12.7 -130.5 15.7 -123.6 17.5 -118.5C19.3 -113.4 20.2 -107.8 20.8 -104C21.4 -100.2 21.5 -99.7 21 -96C20.5 -92.3 19.7 -86.3 18 -82C16.3 -77.7 12.2 -72 11 -70Z" fill="#52bdea" stroke="#070a1c" stroke-width="1.1" stroke-linejoin="round" /><path d="M-8.6 -70C-9.2 -73 -11.8 -82.7 -12.4 -88C-13 -93.3 -12.6 -97.7 -12.2 -102C-11.8 -106.3 -10.8 -110.4 -9.8 -114C-8.9 -117.6 -7 -122.1 -6.5 -123.7C-6 -122.1 -4.3 -117.6 -3.4 -114C-2.5 -110.4 -1.4 -106.3 -1 -102C-0.6 -97.7 -0.2 -93.3 -0.8 -88C-1.4 -82.7 -4 -73 -4.6 -70Z" fill="#4476e6" stroke="#0a1a5e" stroke-width="1.1" stroke-linejoin="round" /><path d="M-7.6 -72C-7.9 -75 -9.2 -84.8 -9.4 -90C-9.6 -95.2 -9.5 -99 -9 -103C-8.5 -107 -6.9 -111.9 -6.5 -113.7C-6.1 -111.9 -4.6 -107 -4.2 -103C-3.7 -99 -3.6 -95.2 -3.8 -90C-4 -84.8 -5.3 -75 -5.6 -72" stroke="#0a1a5e" stroke-width="1.1" fill="none"/><path d="M5.6 -70C5 -73 2.4 -82.7 1.8 -88C1.2 -93.3 1.6 -97.7 2 -102C2.4 -106.3 3.5 -110.5 4.4 -114C5.3 -117.5 6.7 -121.6 7.2 -123.1C7.8 -121.6 9.8 -117.5 10.8 -114C11.8 -110.5 12.8 -106.3 13.2 -102C13.6 -97.7 14 -93.3 13.4 -88C12.8 -82.7 10.2 -73 9.6 -70Z" fill="#4476e6" stroke="#0a1a5e" stroke-width="1.1" stroke-linejoin="round" /><path d="M6.6 -72C6.3 -75 5 -84.8 4.8 -90C4.6 -95.2 4.8 -99.2 5.2 -103C5.6 -106.8 6.9 -111.4 7.2 -113.1C7.7 -111.4 9.5 -106.8 10 -103C10.5 -99.2 10.6 -95.2 10.4 -90C10.2 -84.8 8.9 -75 8.6 -72" stroke="#0a1a5e" stroke-width="1.1" fill="none"/></g><g transform="rotate(134.4)"><path d="M-12 -55C-15 -57.5 -25 -64.5 -30 -70C-35 -75.5 -39.5 -82.2 -42 -88C-44.5 -93.8 -45.1 -99.8 -45 -105C-44.9 -110.2 -44 -114.2 -41.5 -119.4C-39 -124.6 -34 -130.6 -29.7 -136C-25.4 -141.4 -19.4 -147.8 -15.5 -151.8C-11.6 -155.9 -8.9 -158.2 -6.1 -160.3C-3.3 -162.4 0.2 -163.8 1.5 -164.5C2.9 -163.8 7.2 -162.2 10 -160.5C12.8 -158.8 14.5 -157.7 18.2 -154C21.9 -150.3 28.2 -144 32.4 -138.3C36.6 -132.6 41 -125.3 43.4 -119.8C45.8 -114.2 46.9 -110.3 47 -105C47.1 -99.7 46.5 -93.8 44 -88C41.5 -82.2 37 -75.5 32 -70C27 -64.5 17 -57.5 14 -55Z" fill="#4a6b66" stroke="#070a1c" stroke-width="1.1" stroke-linejoin="round" /><path d="M-10 -58C-12.7 -60.3 -21.5 -67 -26 -72C-30.5 -77 -34.8 -82.7 -37 -88C-39.2 -93.3 -39.8 -98.9 -39.5 -104C-39.2 -109.1 -37.3 -114.2 -35 -118.8C-32.7 -123.4 -29.4 -127 -25.5 -131.8C-21.6 -136.6 -15.1 -144 -11.5 -147.7C-7.9 -151.4 -6.2 -152.4 -4 -154C-1.8 -155.6 0.6 -156.5 1.5 -157C2.4 -156.6 4.8 -155.7 7 -154.5C9.2 -153.3 10.9 -153.3 14.5 -150C18.1 -146.7 24.8 -139.8 28.7 -134.5C32.6 -129.2 36.1 -123.2 38.2 -118.1C40.3 -113 41.4 -109 41.5 -104C41.6 -99 41.2 -93.3 39 -88C36.8 -82.7 32.5 -77 28 -72C23.5 -67 14.7 -60.3 12 -58Z" fill="#c4aeab" stroke="#070a1c" stroke-width="1.1" stroke-linejoin="round" /><path d="M-9 -70C-10.2 -72 -14.3 -77.7 -16 -82C-17.7 -86.3 -18.7 -91.5 -19 -96C-19.3 -100.5 -18.4 -104.8 -17.8 -109.1C-17.2 -113.4 -17.1 -117.4 -15.5 -121.8C-13.9 -126.2 -10.8 -131.9 -8 -135.3C-5.2 -138.8 -0.1 -141.3 1.5 -142.5C2.9 -141.2 7.3 -138.5 10 -134.5C12.7 -130.5 15.7 -123.6 17.5 -118.5C19.3 -113.4 20.2 -107.8 20.8 -104C21.4 -100.2 21.5 -99.7 21 -96C20.5 -92.3 19.7 -86.3 18 -82C16.3 -77.7 12.2 -72 11 -70Z" fill="#4476e6" stroke="#070a1c" stroke-width="1.1" stroke-linejoin="round" /><path d="M-8.6 -70C-9.2 -73 -11.8 -82.7 -12.4 -88C-13 -93.3 -12.6 -97.7 -12.2 -102C-11.8 -106.3 -10.8 -110.4 -9.8 -114C-8.9 -117.6 -7 -122.1 -6.5 -123.7C-6 -122.1 -4.3 -117.6 -3.4 -114C-2.5 -110.4 -1.4 -106.3 -1 -102C-0.6 -97.7 -0.2 -93.3 -0.8 -88C-1.4 -82.7 -4 -73 -4.6 -70Z" fill="#4476e6" stroke="#0a1a5e" stroke-width="1.1" stroke-linejoin="round" /><path d="M-7.6 -72C-7.9 -75 -9.2 -84.8 -9.4 -90C-9.6 -95.2 -9.5 -99 -9 -103C-8.5 -107 -6.9 -111.9 -6.5 -113.7C-6.1 -111.9 -4.6 -107 -4.2 -103C-3.7 -99 -3.6 -95.2 -3.8 -90C-4 -84.8 -5.3 -75 -5.6 -72" stroke="#0a1a5e" stroke-width="1.1" fill="none"/><path d="M5.6 -70C5 -73 2.4 -82.7 1.8 -88C1.2 -93.3 1.6 -97.7 2 -102C2.4 -106.3 3.5 -110.5 4.4 -114C5.3 -117.5 6.7 -121.6 7.2 -123.1C7.8 -121.6 9.8 -117.5 10.8 -114C11.8 -110.5 12.8 -106.3 13.2 -102C13.6 -97.7 14 -93.3 13.4 -88C12.8 -82.7 10.2 -73 9.6 -70Z" fill="#4476e6" stroke="#0a1a5e" stroke-width="1.1" stroke-linejoin="round" /><path d="M6.6 -72C6.3 -75 5 -84.8 4.8 -90C4.6 -95.2 4.8 -99.2 5.2 -103C5.6 -106.8 6.9 -111.4 7.2 -113.1C7.7 -111.4 9.5 -106.8 10 -103C10.5 -99.2 10.6 -95.2 10.4 -90C10.2 -84.8 8.9 -75 8.6 -72" stroke="#0a1a5e" stroke-width="1.1" fill="none"/></g><g transform="rotate(180)"><path d="M-12 -55C-15 -57.5 -25 -64.5 -30 -70C-35 -75.5 -39.5 -82.2 -42 -88C-44.5 -93.8 -45.1 -99.8 -45 -105C-44.9 -110.2 -44 -114.2 -41.5 -119.4C-39 -124.6 -34 -130.6 -29.7 -136C-25.4 -141.4 -19.4 -147.8 -15.5 -151.8C-11.6 -155.9 -8.9 -158.2 -6.1 -160.3C-3.3 -162.4 0.2 -163.8 1.5 -164.5C2.9 -163.8 7.2 -162.2 10 -160.5C12.8 -158.8 14.5 -157.7 18.2 -154C21.9 -150.3 28.2 -144 32.4 -138.3C36.6 -132.6 41 -125.3 43.4 -119.8C45.8 -114.2 46.9 -110.3 47 -105C47.1 -99.7 46.5 -93.8 44 -88C41.5 -82.2 37 -75.5 32 -70C27 -64.5 17 -57.5 14 -55Z" fill="#4a6b66" stroke="#070a1c" stroke-width="1.1" stroke-linejoin="round" /><path d="M-10 -58C-12.7 -60.3 -21.5 -67 -26 -72C-30.5 -77 -34.8 -82.7 -37 -88C-39.2 -93.3 -39.8 -98.9 -39.5 -104C-39.2 -109.1 -37.3 -114.2 -35 -118.8C-32.7 -123.4 -29.4 -127 -25.5 -131.8C-21.6 -136.6 -15.1 -144 -11.5 -147.7C-7.9 -151.4 -6.2 -152.4 -4 -154C-1.8 -155.6 0.6 -156.5 1.5 -157C2.4 -156.6 4.8 -155.7 7 -154.5C9.2 -153.3 10.9 -153.3 14.5 -150C18.1 -146.7 24.8 -139.8 28.7 -134.5C32.6 -129.2 36.1 -123.2 38.2 -118.1C40.3 -113 41.4 -109 41.5 -104C41.6 -99 41.2 -93.3 39 -88C36.8 -82.7 32.5 -77 28 -72C23.5 -67 14.7 -60.3 12 -58Z" fill="#c4aeab" stroke="#070a1c" stroke-width="1.1" stroke-linejoin="round" /><path d="M-9 -70C-10.2 -72 -14.3 -77.7 -16 -82C-17.7 -86.3 -18.7 -91.5 -19 -96C-19.3 -100.5 -18.4 -104.8 -17.8 -109.1C-17.2 -113.4 -17.1 -117.4 -15.5 -121.8C-13.9 -126.2 -10.8 -131.9 -8 -135.3C-5.2 -138.8 -0.1 -141.3 1.5 -142.5C2.9 -141.2 7.3 -138.5 10 -134.5C12.7 -130.5 15.7 -123.6 17.5 -118.5C19.3 -113.4 20.2 -107.8 20.8 -104C21.4 -100.2 21.5 -99.7 21 -96C20.5 -92.3 19.7 -86.3 18 -82C16.3 -77.7 12.2 -72 11 -70Z" fill="#52bdea" stroke="#070a1c" stroke-width="1.1" stroke-linejoin="round" /><path d="M-8.6 -70C-9.2 -73 -11.8 -82.7 -12.4 -88C-13 -93.3 -12.6 -97.7 -12.2 -102C-11.8 -106.3 -10.8 -110.4 -9.8 -114C-8.9 -117.6 -7 -122.1 -6.5 -123.7C-6 -122.1 -4.3 -117.6 -3.4 -114C-2.5 -110.4 -1.4 -106.3 -1 -102C-0.6 -97.7 -0.2 -93.3 -0.8 -88C-1.4 -82.7 -4 -73 -4.6 -70Z" fill="#4476e6" stroke="#0a1a5e" stroke-width="1.1" stroke-linejoin="round" /><path d="M-7.6 -72C-7.9 -75 -9.2 -84.8 -9.4 -90C-9.6 -95.2 -9.5 -99 -9 -103C-8.5 -107 -6.9 -111.9 -6.5 -113.7C-6.1 -111.9 -4.6 -107 -4.2 -103C-3.7 -99 -3.6 -95.2 -3.8 -90C-4 -84.8 -5.3 -75 -5.6 -72" stroke="#0a1a5e" stroke-width="1.1" fill="none"/><path d="M5.6 -70C5 -73 2.4 -82.7 1.8 -88C1.2 -93.3 1.6 -97.7 2 -102C2.4 -106.3 3.5 -110.5 4.4 -114C5.3 -117.5 6.7 -121.6 7.2 -123.1C7.8 -121.6 9.8 -117.5 10.8 -114C11.8 -110.5 12.8 -106.3 13.2 -102C13.6 -97.7 14 -93.3 13.4 -88C12.8 -82.7 10.2 -73 9.6 -70Z" fill="#4476e6" stroke="#0a1a5e" stroke-width="1.1" stroke-linejoin="round" /><path d="M6.6 -72C6.3 -75 5 -84.8 4.8 -90C4.6 -95.2 4.8 -99.2 5.2 -103C5.6 -106.8 6.9 -111.4 7.2 -113.1C7.7 -111.4 9.5 -106.8 10 -103C10.5 -99.2 10.6 -95.2 10.4 -90C10.2 -84.8 8.9 -75 8.6 -72" stroke="#0a1a5e" stroke-width="1.1" fill="none"/></g><g transform="rotate(225.4)"><path d="M-12 -55C-15 -57.5 -25 -64.5 -30 -70C-35 -75.5 -39.5 -82.2 -42 -88C-44.5 -93.8 -45.1 -99.8 -45 -105C-44.9 -110.2 -44 -114.2 -41.5 -119.4C-39 -124.6 -34 -130.6 -29.7 -136C-25.4 -141.4 -19.4 -147.8 -15.5 -151.8C-11.6 -155.9 -8.9 -158.2 -6.1 -160.3C-3.3 -162.4 0.2 -163.8 1.5 -164.5C2.9 -163.8 7.2 -162.2 10 -160.5C12.8 -158.8 14.5 -157.7 18.2 -154C21.9 -150.3 28.2 -144 32.4 -138.3C36.6 -132.6 41 -125.3 43.4 -119.8C45.8 -114.2 46.9 -110.3 47 -105C47.1 -99.7 46.5 -93.8 44 -88C41.5 -82.2 37 -75.5 32 -70C27 -64.5 17 -57.5 14 -55Z" fill="#4a6b66" stroke="#070a1c" stroke-width="1.1" stroke-linejoin="round" /><path d="M-10 -58C-12.7 -60.3 -21.5 -67 -26 -72C-30.5 -77 -34.8 -82.7 -37 -88C-39.2 -93.3 -39.8 -98.9 -39.5 -104C-39.2 -109.1 -37.3 -114.2 -35 -118.8C-32.7 -123.4 -29.4 -127 -25.5 -131.8C-21.6 -136.6 -15.1 -144 -11.5 -147.7C-7.9 -151.4 -6.2 -152.4 -4 -154C-1.8 -155.6 0.6 -156.5 1.5 -157C2.4 -156.6 4.8 -155.7 7 -154.5C9.2 -153.3 10.9 -153.3 14.5 -150C18.1 -146.7 24.8 -139.8 28.7 -134.5C32.6 -129.2 36.1 -123.2 38.2 -118.1C40.3 -113 41.4 -109 41.5 -104C41.6 -99 41.2 -93.3 39 -88C36.8 -82.7 32.5 -77 28 -72C23.5 -67 14.7 -60.3 12 -58Z" fill="#c4aeab" stroke="#070a1c" stroke-width="1.1" stroke-linejoin="round" /><path d="M-9 -70C-10.2 -72 -14.3 -77.7 -16 -82C-17.7 -86.3 -18.7 -91.5 -19 -96C-19.3 -100.5 -18.4 -104.8 -17.8 -109.1C-17.2 -113.4 -17.1 -117.4 -15.5 -121.8C-13.9 -126.2 -10.8 -131.9 -8 -135.3C-5.2 -138.8 -0.1 -141.3 1.5 -142.5C2.9 -141.2 7.3 -138.5 10 -134.5C12.7 -130.5 15.7 -123.6 17.5 -118.5C19.3 -113.4 20.2 -107.8 20.8 -104C21.4 -100.2 21.5 -99.7 21 -96C20.5 -92.3 19.7 -86.3 18 -82C16.3 -77.7 12.2 -72 11 -70Z" fill="#52bdea" stroke="#070a1c" stroke-width="1.1" stroke-linejoin="round" /><path d="M-8.6 -70C-9.2 -73 -11.8 -82.7 -12.4 -88C-13 -93.3 -12.6 -97.7 -12.2 -102C-11.8 -106.3 -10.8 -110.4 -9.8 -114C-8.9 -117.6 -7 -122.1 -6.5 -123.7C-6 -122.1 -4.3 -117.6 -3.4 -114C-2.5 -110.4 -1.4 -106.3 -1 -102C-0.6 -97.7 -0.2 -93.3 -0.8 -88C-1.4 -82.7 -4 -73 -4.6 -70Z" fill="#4476e6" stroke="#0a1a5e" stroke-width="1.1" stroke-linejoin="round" /><path d="M-7.6 -72C-7.9 -75 -9.2 -84.8 -9.4 -90C-9.6 -95.2 -9.5 -99 -9 -103C-8.5 -107 -6.9 -111.9 -6.5 -113.7C-6.1 -111.9 -4.6 -107 -4.2 -103C-3.7 -99 -3.6 -95.2 -3.8 -90C-4 -84.8 -5.3 -75 -5.6 -72" stroke="#0a1a5e" stroke-width="1.1" fill="none"/><path d="M5.6 -70C5 -73 2.4 -82.7 1.8 -88C1.2 -93.3 1.6 -97.7 2 -102C2.4 -106.3 3.5 -110.5 4.4 -114C5.3 -117.5 6.7 -121.6 7.2 -123.1C7.8 -121.6 9.8 -117.5 10.8 -114C11.8 -110.5 12.8 -106.3 13.2 -102C13.6 -97.7 14 -93.3 13.4 -88C12.8 -82.7 10.2 -73 9.6 -70Z" fill="#4476e6" stroke="#0a1a5e" stroke-width="1.1" stroke-linejoin="round" /><path d="M6.6 -72C6.3 -75 5 -84.8 4.8 -90C4.6 -95.2 4.8 -99.2 5.2 -103C5.6 -106.8 6.9 -111.4 7.2 -113.1C7.7 -111.4 9.5 -106.8 10 -103C10.5 -99.2 10.6 -95.2 10.4 -90C10.2 -84.8 8.9 -75 8.6 -72" stroke="#0a1a5e" stroke-width="1.1" fill="none"/></g><g transform="rotate(270)"><path d="M-12 -55C-15 -57.5 -25 -64.5 -30 -70C-35 -75.5 -39.5 -82.2 -42 -88C-44.5 -93.8 -45.1 -99.8 -45 -105C-44.9 -110.2 -44 -114.2 -41.5 -119.4C-39 -124.6 -34 -130.6 -29.7 -136C-25.4 -141.4 -19.4 -147.8 -15.5 -151.8C-11.6 -155.9 -8.9 -158.2 -6.1 -160.3C-3.3 -162.4 0.2 -163.8 1.5 -164.5C2.9 -163.8 7.2 -162.2 10 -160.5C12.8 -158.8 14.5 -157.7 18.2 -154C21.9 -150.3 28.2 -144 32.4 -138.3C36.6 -132.6 41 -125.3 43.4 -119.8C45.8 -114.2 46.9 -110.3 47 -105C47.1 -99.7 46.5 -93.8 44 -88C41.5 -82.2 37 -75.5 32 -70C27 -64.5 17 -57.5 14 -55Z" fill="#4a6b66" stroke="#070a1c" stroke-width="1.1" stroke-linejoin="round" /><path d="M-10 -58C-12.7 -60.3 -21.5 -67 -26 -72C-30.5 -77 -34.8 -82.7 -37 -88C-39.2 -93.3 -39.8 -98.9 -39.5 -104C-39.2 -109.1 -37.3 -114.2 -35 -118.8C-32.7 -123.4 -29.4 -127 -25.5 -131.8C-21.6 -136.6 -15.1 -144 -11.5 -147.7C-7.9 -151.4 -6.2 -152.4 -4 -154C-1.8 -155.6 0.6 -156.5 1.5 -157C2.4 -156.6 4.8 -155.7 7 -154.5C9.2 -153.3 10.9 -153.3 14.5 -150C18.1 -146.7 24.8 -139.8 28.7 -134.5C32.6 -129.2 36.1 -123.2 38.2 -118.1C40.3 -113 41.4 -109 41.5 -104C41.6 -99 41.2 -93.3 39 -88C36.8 -82.7 32.5 -77 28 -72C23.5 -67 14.7 -60.3 12 -58Z" fill="#c4aeab" stroke="#070a1c" stroke-width="1.1" stroke-linejoin="round" /><path d="M-9 -70C-10.2 -72 -14.3 -77.7 -16 -82C-17.7 -86.3 -18.7 -91.5 -19 -96C-19.3 -100.5 -18.4 -104.8 -17.8 -109.1C-17.2 -113.4 -17.1 -117.4 -15.5 -121.8C-13.9 -126.2 -10.8 -131.9 -8 -135.3C-5.2 -138.8 -0.1 -141.3 1.5 -142.5C2.9 -141.2 7.3 -138.5 10 -134.5C12.7 -130.5 15.7 -123.6 17.5 -118.5C19.3 -113.4 20.2 -107.8 20.8 -104C21.4 -100.2 21.5 -99.7 21 -96C20.5 -92.3 19.7 -86.3 18 -82C16.3 -77.7 12.2 -72 11 -70Z" fill="#52bdea" stroke="#070a1c" stroke-width="1.1" stroke-linejoin="round" /><path d="M-8.6 -70C-9.2 -73 -11.8 -82.7 -12.4 -88C-13 -93.3 -12.6 -97.7 -12.2 -102C-11.8 -106.3 -10.8 -110.4 -9.8 -114C-8.9 -117.6 -7 -122.1 -6.5 -123.7C-6 -122.1 -4.3 -117.6 -3.4 -114C-2.5 -110.4 -1.4 -106.3 -1 -102C-0.6 -97.7 -0.2 -93.3 -0.8 -88C-1.4 -82.7 -4 -73 -4.6 -70Z" fill="#4476e6" stroke="#0a1a5e" stroke-width="1.1" stroke-linejoin="round" /><path d="M-7.6 -72C-7.9 -75 -9.2 -84.8 -9.4 -90C-9.6 -95.2 -9.5 -99 -9 -103C-8.5 -107 -6.9 -111.9 -6.5 -113.7C-6.1 -111.9 -4.6 -107 -4.2 -103C-3.7 -99 -3.6 -95.2 -3.8 -90C-4 -84.8 -5.3 -75 -5.6 -72" stroke="#0a1a5e" stroke-width="1.1" fill="none"/><path d="M5.6 -70C5 -73 2.4 -82.7 1.8 -88C1.2 -93.3 1.6 -97.7 2 -102C2.4 -106.3 3.5 -110.5 4.4 -114C5.3 -117.5 6.7 -121.6 7.2 -123.1C7.8 -121.6 9.8 -117.5 10.8 -114C11.8 -110.5 12.8 -106.3 13.2 -102C13.6 -97.7 14 -93.3 13.4 -88C12.8 -82.7 10.2 -73 9.6 -70Z" fill="#4476e6" stroke="#0a1a5e" stroke-width="1.1" stroke-linejoin="round" /><path d="M6.6 -72C6.3 -75 5 -84.8 4.8 -90C4.6 -95.2 4.8 -99.2 5.2 -103C5.6 -106.8 6.9 -111.4 7.2 -113.1C7.7 -111.4 9.5 -106.8 10 -103C10.5 -99.2 10.6 -95.2 10.4 -90C10.2 -84.8 8.9 -75 8.6 -72" stroke="#0a1a5e" stroke-width="1.1" fill="none"/></g><g transform="rotate(314.4)"><path d="M-12 -55C-15 -57.5 -25 -64.5 -30 -70C-35 -75.5 -39.5 -82.2 -42 -88C-44.5 -93.8 -45.1 -99.8 -45 -105C-44.9 -110.2 -44 -114.2 -41.5 -119.4C-39 -124.6 -34 -130.6 -29.7 -136C-25.4 -141.4 -19.4 -147.8 -15.5 -151.8C-11.6 -155.9 -8.9 -158.2 -6.1 -160.3C-3.3 -162.4 0.2 -163.8 1.5 -164.5C2.9 -163.8 7.2 -162.2 10 -160.5C12.8 -158.8 14.5 -157.7 18.2 -154C21.9 -150.3 28.2 -144 32.4 -138.3C36.6 -132.6 41 -125.3 43.4 -119.8C45.8 -114.2 46.9 -110.3 47 -105C47.1 -99.7 46.5 -93.8 44 -88C41.5 -82.2 37 -75.5 32 -70C27 -64.5 17 -57.5 14 -55Z" fill="#4a6b66" stroke="#070a1c" stroke-width="1.1" stroke-linejoin="round" /><path d="M-10 -58C-12.7 -60.3 -21.5 -67 -26 -72C-30.5 -77 -34.8 -82.7 -37 -88C-39.2 -93.3 -39.8 -98.9 -39.5 -104C-39.2 -109.1 -37.3 -114.2 -35 -118.8C-32.7 -123.4 -29.4 -127 -25.5 -131.8C-21.6 -136.6 -15.1 -144 -11.5 -147.7C-7.9 -151.4 -6.2 -152.4 -4 -154C-1.8 -155.6 0.6 -156.5 1.5 -157C2.4 -156.6 4.8 -155.7 7 -154.5C9.2 -153.3 10.9 -153.3 14.5 -150C18.1 -146.7 24.8 -139.8 28.7 -134.5C32.6 -129.2 36.1 -123.2 38.2 -118.1C40.3 -113 41.4 -109 41.5 -104C41.6 -99 41.2 -93.3 39 -88C36.8 -82.7 32.5 -77 28 -72C23.5 -67 14.7 -60.3 12 -58Z" fill="#c4aeab" stroke="#070a1c" stroke-width="1.1" stroke-linejoin="round" /><path d="M-9 -70C-10.2 -72 -14.3 -77.7 -16 -82C-17.7 -86.3 -18.7 -91.5 -19 -96C-19.3 -100.5 -18.4 -104.8 -17.8 -109.1C-17.2 -113.4 -17.1 -117.4 -15.5 -121.8C-13.9 -126.2 -10.8 -131.9 -8 -135.3C-5.2 -138.8 -0.1 -141.3 1.5 -142.5C2.9 -141.2 7.3 -138.5 10 -134.5C12.7 -130.5 15.7 -123.6 17.5 -118.5C19.3 -113.4 20.2 -107.8 20.8 -104C21.4 -100.2 21.5 -99.7 21 -96C20.5 -92.3 19.7 -86.3 18 -82C16.3 -77.7 12.2 -72 11 -70Z" fill="#52bdea" stroke="#070a1c" stroke-width="1.1" stroke-linejoin="round" /><path d="M-8.6 -70C-9.2 -73 -11.8 -82.7 -12.4 -88C-13 -93.3 -12.6 -97.7 -12.2 -102C-11.8 -106.3 -10.8 -110.4 -9.8 -114C-8.9 -117.6 -7 -122.1 -6.5 -123.7C-6 -122.1 -4.3 -117.6 -3.4 -114C-2.5 -110.4 -1.4 -106.3 -1 -102C-0.6 -97.7 -0.2 -93.3 -0.8 -88C-1.4 -82.7 -4 -73 -4.6 -70Z" fill="#4476e6" stroke="#0a1a5e" stroke-width="1.1" stroke-linejoin="round" /><path d="M-7.6 -72C-7.9 -75 -9.2 -84.8 -9.4 -90C-9.6 -95.2 -9.5 -99 -9 -103C-8.5 -107 -6.9 -111.9 -6.5 -113.7C-6.1 -111.9 -4.6 -107 -4.2 -103C-3.7 -99 -3.6 -95.2 -3.8 -90C-4 -84.8 -5.3 -75 -5.6 -72" stroke="#0a1a5e" stroke-width="1.1" fill="none"/><path d="M5.6 -70C5 -73 2.4 -82.7 1.8 -88C1.2 -93.3 1.6 -97.7 2 -102C2.4 -106.3 3.5 -110.5 4.4 -114C5.3 -117.5 6.7 -121.6 7.2 -123.1C7.8 -121.6 9.8 -117.5 10.8 -114C11.8 -110.5 12.8 -106.3 13.2 -102C13.6 -97.7 14 -93.3 13.4 -88C12.8 -82.7 10.2 -73 9.6 -70Z" fill="#4476e6" stroke="#0a1a5e" stroke-width="1.1" stroke-linejoin="round" /><path d="M6.6 -72C6.3 -75 5 -84.8 4.8 -90C4.6 -95.2 4.8 -99.2 5.2 -103C5.6 -106.8 6.9 -111.4 7.2 -113.1C7.7 -111.4 9.5 -106.8 10 -103C10.5 -99.2 10.6 -95.2 10.4 -90C10.2 -84.8 8.9 -75 8.6 -72" stroke="#0a1a5e" stroke-width="1.1" fill="none"/></g><g transform="rotate(22.5)"><path d="M-22 -48C-22.7 -50.3 -25.8 -57.6 -26 -62C-26.2 -66.4 -25.1 -69.4 -23.5 -74.2C-21.9 -79 -19.1 -85.1 -16.7 -90.6C-14.3 -96.1 -11.7 -101.8 -9.2 -107.3C-6.7 -112.8 -3.6 -119 -1.6 -123.4C0.4 -127.8 2.3 -131.8 3.1 -133.5C4.2 -131.7 7.9 -126.3 10 -122.5C12.1 -118.7 14.2 -114.7 15.9 -110.6C17.6 -106.5 18.9 -102.3 20.1 -98C21.3 -93.7 22.5 -89.1 23.3 -84.9C24.1 -80.7 24.7 -76.6 25.1 -72.8C25.6 -69 26.4 -66.1 26 -62C25.6 -57.9 23.5 -50.3 23 -48Z" fill="#eee6e0" stroke="#070a1c" stroke-width="1.15" stroke-linejoin="round" /><path d="M-17 -48C-17.7 -50.3 -20.6 -57.9 -21 -62C-21.4 -66.1 -20.2 -68.7 -19.1 -72.4C-18 -76.2 -16.1 -80 -14.1 -84.5C-12.1 -89 -9.6 -94.5 -7.4 -99.5C-5.2 -104.5 -2.6 -110.6 -0.7 -114.4C1.2 -118.2 3.2 -120.8 4 -122.1C4.8 -120.6 7.3 -116.6 9 -113.4C10.7 -110.2 12.6 -106.6 14.2 -102.7C15.8 -98.8 17.4 -94.2 18.6 -90.2C19.8 -86.2 20.9 -81.6 21.6 -78.5C22.3 -75.4 22.6 -74.5 22.7 -71.8C22.8 -69 23.1 -66 22.5 -62C21.9 -58 19.6 -50.3 19 -48Z" fill="#4476e6" stroke="#070a1c" stroke-width="1.15" stroke-linejoin="round" /><path d="M-0.5 -56C-1.1 -57.7 -3.4 -62.3 -4.2 -66C-5 -69.7 -5.5 -73.7 -5.6 -78C-5.7 -82.3 -5.2 -88.2 -4.6 -92C-4 -95.8 -3 -98.7 -1.8 -101C-0.6 -103.3 1.1 -105.8 2.4 -105.8C3.7 -105.8 4.9 -103.3 5.8 -101C6.7 -98.7 7.5 -95.5 7.8 -92C8.1 -88.5 8.1 -84 7.8 -80C7.5 -76 6.7 -72 6 -68C5.3 -64 3.9 -58 3.5 -56Z" fill="#225a69" stroke="#070a1c" stroke-width="1.1" stroke-linejoin="round" /><path d="M-5 -57C-5.8 -58.2 -8.5 -61.5 -10 -64C-11.5 -66.5 -13.4 -69.7 -14.2 -72C-14.9 -74.3 -14.9 -76.5 -14.5 -78C-14.1 -79.5 -12.9 -81.1 -12 -81.2C-11.1 -81.3 -9.7 -80.2 -8.8 -78.5C-7.9 -76.8 -7.4 -74.1 -6.5 -71C-5.6 -67.9 -4 -61.8 -3.5 -60Z" fill="#225a69" stroke="#070a1c" stroke-width="1.1" stroke-linejoin="round" /><path d="M6 -59C6.5 -60.3 8 -64.4 9 -67C10 -69.6 11.2 -72.3 12.2 -74.5C13.2 -76.7 14.2 -80 15 -80.2C15.8 -80.5 16.9 -78 17 -76C17.1 -74 16.6 -70.8 15.5 -68C14.4 -65.2 11.3 -60.5 10.5 -59Z" fill="#225a69" stroke="#070a1c" stroke-width="1.1" stroke-linejoin="round" /></g><g transform="rotate(67.5)"><path d="M-22 -48C-22.7 -50.3 -25.8 -57.6 -26 -62C-26.2 -66.4 -25.1 -69.4 -23.5 -74.2C-21.9 -79 -19.1 -85.1 -16.7 -90.6C-14.3 -96.1 -11.7 -101.8 -9.2 -107.3C-6.7 -112.8 -3.6 -119 -1.6 -123.4C0.4 -127.8 2.3 -131.8 3.1 -133.5C4.2 -131.7 7.9 -126.3 10 -122.5C12.1 -118.7 14.2 -114.7 15.9 -110.6C17.6 -106.5 18.9 -102.3 20.1 -98C21.3 -93.7 22.5 -89.1 23.3 -84.9C24.1 -80.7 24.7 -76.6 25.1 -72.8C25.6 -69 26.4 -66.1 26 -62C25.6 -57.9 23.5 -50.3 23 -48Z" fill="#eee6e0" stroke="#070a1c" stroke-width="1.15" stroke-linejoin="round" /><path d="M-17 -48C-17.7 -50.3 -20.6 -57.9 -21 -62C-21.4 -66.1 -20.2 -68.7 -19.1 -72.4C-18 -76.2 -16.1 -80 -14.1 -84.5C-12.1 -89 -9.6 -94.5 -7.4 -99.5C-5.2 -104.5 -2.6 -110.6 -0.7 -114.4C1.2 -118.2 3.2 -120.8 4 -122.1C4.8 -120.6 7.3 -116.6 9 -113.4C10.7 -110.2 12.6 -106.6 14.2 -102.7C15.8 -98.8 17.4 -94.2 18.6 -90.2C19.8 -86.2 20.9 -81.6 21.6 -78.5C22.3 -75.4 22.6 -74.5 22.7 -71.8C22.8 -69 23.1 -66 22.5 -62C21.9 -58 19.6 -50.3 19 -48Z" fill="#4476e6" stroke="#070a1c" stroke-width="1.15" stroke-linejoin="round" /><path d="M-0.5 -56C-1.1 -57.7 -3.4 -62.3 -4.2 -66C-5 -69.7 -5.5 -73.7 -5.6 -78C-5.7 -82.3 -5.2 -88.2 -4.6 -92C-4 -95.8 -3 -98.7 -1.8 -101C-0.6 -103.3 1.1 -105.8 2.4 -105.8C3.7 -105.8 4.9 -103.3 5.8 -101C6.7 -98.7 7.5 -95.5 7.8 -92C8.1 -88.5 8.1 -84 7.8 -80C7.5 -76 6.7 -72 6 -68C5.3 -64 3.9 -58 3.5 -56Z" fill="#225a69" stroke="#070a1c" stroke-width="1.1" stroke-linejoin="round" /><path d="M-5 -57C-5.8 -58.2 -8.5 -61.5 -10 -64C-11.5 -66.5 -13.4 -69.7 -14.2 -72C-14.9 -74.3 -14.9 -76.5 -14.5 -78C-14.1 -79.5 -12.9 -81.1 -12 -81.2C-11.1 -81.3 -9.7 -80.2 -8.8 -78.5C-7.9 -76.8 -7.4 -74.1 -6.5 -71C-5.6 -67.9 -4 -61.8 -3.5 -60Z" fill="#225a69" stroke="#070a1c" stroke-width="1.1" stroke-linejoin="round" /><path d="M6 -59C6.5 -60.3 8 -64.4 9 -67C10 -69.6 11.2 -72.3 12.2 -74.5C13.2 -76.7 14.2 -80 15 -80.2C15.8 -80.5 16.9 -78 17 -76C17.1 -74 16.6 -70.8 15.5 -68C14.4 -65.2 11.3 -60.5 10.5 -59Z" fill="#225a69" stroke="#070a1c" stroke-width="1.1" stroke-linejoin="round" /></g><g transform="rotate(112.5)"><path d="M-22 -48C-22.7 -50.3 -25.8 -57.6 -26 -62C-26.2 -66.4 -25.1 -69.4 -23.5 -74.2C-21.9 -79 -19.1 -85.1 -16.7 -90.6C-14.3 -96.1 -11.7 -101.8 -9.2 -107.3C-6.7 -112.8 -3.6 -119 -1.6 -123.4C0.4 -127.8 2.3 -131.8 3.1 -133.5C4.2 -131.7 7.9 -126.3 10 -122.5C12.1 -118.7 14.2 -114.7 15.9 -110.6C17.6 -106.5 18.9 -102.3 20.1 -98C21.3 -93.7 22.5 -89.1 23.3 -84.9C24.1 -80.7 24.7 -76.6 25.1 -72.8C25.6 -69 26.4 -66.1 26 -62C25.6 -57.9 23.5 -50.3 23 -48Z" fill="#eee6e0" stroke="#070a1c" stroke-width="1.15" stroke-linejoin="round" /><path d="M-17 -48C-17.7 -50.3 -20.6 -57.9 -21 -62C-21.4 -66.1 -20.2 -68.7 -19.1 -72.4C-18 -76.2 -16.1 -80 -14.1 -84.5C-12.1 -89 -9.6 -94.5 -7.4 -99.5C-5.2 -104.5 -2.6 -110.6 -0.7 -114.4C1.2 -118.2 3.2 -120.8 4 -122.1C4.8 -120.6 7.3 -116.6 9 -113.4C10.7 -110.2 12.6 -106.6 14.2 -102.7C15.8 -98.8 17.4 -94.2 18.6 -90.2C19.8 -86.2 20.9 -81.6 21.6 -78.5C22.3 -75.4 22.6 -74.5 22.7 -71.8C22.8 -69 23.1 -66 22.5 -62C21.9 -58 19.6 -50.3 19 -48Z" fill="#4476e6" stroke="#070a1c" stroke-width="1.15" stroke-linejoin="round" /><path d="M-0.5 -56C-1.1 -57.7 -3.4 -62.3 -4.2 -66C-5 -69.7 -5.5 -73.7 -5.6 -78C-5.7 -82.3 -5.2 -88.2 -4.6 -92C-4 -95.8 -3 -98.7 -1.8 -101C-0.6 -103.3 1.1 -105.8 2.4 -105.8C3.7 -105.8 4.9 -103.3 5.8 -101C6.7 -98.7 7.5 -95.5 7.8 -92C8.1 -88.5 8.1 -84 7.8 -80C7.5 -76 6.7 -72 6 -68C5.3 -64 3.9 -58 3.5 -56Z" fill="#225a69" stroke="#070a1c" stroke-width="1.1" stroke-linejoin="round" /><path d="M-5 -57C-5.8 -58.2 -8.5 -61.5 -10 -64C-11.5 -66.5 -13.4 -69.7 -14.2 -72C-14.9 -74.3 -14.9 -76.5 -14.5 -78C-14.1 -79.5 -12.9 -81.1 -12 -81.2C-11.1 -81.3 -9.7 -80.2 -8.8 -78.5C-7.9 -76.8 -7.4 -74.1 -6.5 -71C-5.6 -67.9 -4 -61.8 -3.5 -60Z" fill="#225a69" stroke="#070a1c" stroke-width="1.1" stroke-linejoin="round" /><path d="M6 -59C6.5 -60.3 8 -64.4 9 -67C10 -69.6 11.2 -72.3 12.2 -74.5C13.2 -76.7 14.2 -80 15 -80.2C15.8 -80.5 16.9 -78 17 -76C17.1 -74 16.6 -70.8 15.5 -68C14.4 -65.2 11.3 -60.5 10.5 -59Z" fill="#225a69" stroke="#070a1c" stroke-width="1.1" stroke-linejoin="round" /></g><g transform="rotate(157.5)"><path d="M-22 -48C-22.7 -50.3 -25.8 -57.6 -26 -62C-26.2 -66.4 -25.1 -69.4 -23.5 -74.2C-21.9 -79 -19.1 -85.1 -16.7 -90.6C-14.3 -96.1 -11.7 -101.8 -9.2 -107.3C-6.7 -112.8 -3.6 -119 -1.6 -123.4C0.4 -127.8 2.3 -131.8 3.1 -133.5C4.2 -131.7 7.9 -126.3 10 -122.5C12.1 -118.7 14.2 -114.7 15.9 -110.6C17.6 -106.5 18.9 -102.3 20.1 -98C21.3 -93.7 22.5 -89.1 23.3 -84.9C24.1 -80.7 24.7 -76.6 25.1 -72.8C25.6 -69 26.4 -66.1 26 -62C25.6 -57.9 23.5 -50.3 23 -48Z" fill="#eee6e0" stroke="#070a1c" stroke-width="1.15" stroke-linejoin="round" /><path d="M-17 -48C-17.7 -50.3 -20.6 -57.9 -21 -62C-21.4 -66.1 -20.2 -68.7 -19.1 -72.4C-18 -76.2 -16.1 -80 -14.1 -84.5C-12.1 -89 -9.6 -94.5 -7.4 -99.5C-5.2 -104.5 -2.6 -110.6 -0.7 -114.4C1.2 -118.2 3.2 -120.8 4 -122.1C4.8 -120.6 7.3 -116.6 9 -113.4C10.7 -110.2 12.6 -106.6 14.2 -102.7C15.8 -98.8 17.4 -94.2 18.6 -90.2C19.8 -86.2 20.9 -81.6 21.6 -78.5C22.3 -75.4 22.6 -74.5 22.7 -71.8C22.8 -69 23.1 -66 22.5 -62C21.9 -58 19.6 -50.3 19 -48Z" fill="#4476e6" stroke="#070a1c" stroke-width="1.15" stroke-linejoin="round" /><path d="M-0.5 -56C-1.1 -57.7 -3.4 -62.3 -4.2 -66C-5 -69.7 -5.5 -73.7 -5.6 -78C-5.7 -82.3 -5.2 -88.2 -4.6 -92C-4 -95.8 -3 -98.7 -1.8 -101C-0.6 -103.3 1.1 -105.8 2.4 -105.8C3.7 -105.8 4.9 -103.3 5.8 -101C6.7 -98.7 7.5 -95.5 7.8 -92C8.1 -88.5 8.1 -84 7.8 -80C7.5 -76 6.7 -72 6 -68C5.3 -64 3.9 -58 3.5 -56Z" fill="#225a69" stroke="#070a1c" stroke-width="1.1" stroke-linejoin="round" /><path d="M-5 -57C-5.8 -58.2 -8.5 -61.5 -10 -64C-11.5 -66.5 -13.4 -69.7 -14.2 -72C-14.9 -74.3 -14.9 -76.5 -14.5 -78C-14.1 -79.5 -12.9 -81.1 -12 -81.2C-11.1 -81.3 -9.7 -80.2 -8.8 -78.5C-7.9 -76.8 -7.4 -74.1 -6.5 -71C-5.6 -67.9 -4 -61.8 -3.5 -60Z" fill="#225a69" stroke="#070a1c" stroke-width="1.1" stroke-linejoin="round" /><path d="M6 -59C6.5 -60.3 8 -64.4 9 -67C10 -69.6 11.2 -72.3 12.2 -74.5C13.2 -76.7 14.2 -80 15 -80.2C15.8 -80.5 16.9 -78 17 -76C17.1 -74 16.6 -70.8 15.5 -68C14.4 -65.2 11.3 -60.5 10.5 -59Z" fill="#225a69" stroke="#070a1c" stroke-width="1.1" stroke-linejoin="round" /></g><g transform="rotate(202.5)"><path d="M-22 -48C-22.7 -50.3 -25.8 -57.6 -26 -62C-26.2 -66.4 -25.1 -69.4 -23.5 -74.2C-21.9 -79 -19.1 -85.1 -16.7 -90.6C-14.3 -96.1 -11.7 -101.8 -9.2 -107.3C-6.7 -112.8 -3.6 -119 -1.6 -123.4C0.4 -127.8 2.3 -131.8 3.1 -133.5C4.2 -131.7 7.9 -126.3 10 -122.5C12.1 -118.7 14.2 -114.7 15.9 -110.6C17.6 -106.5 18.9 -102.3 20.1 -98C21.3 -93.7 22.5 -89.1 23.3 -84.9C24.1 -80.7 24.7 -76.6 25.1 -72.8C25.6 -69 26.4 -66.1 26 -62C25.6 -57.9 23.5 -50.3 23 -48Z" fill="#eee6e0" stroke="#070a1c" stroke-width="1.15" stroke-linejoin="round" /><path d="M-17 -48C-17.7 -50.3 -20.6 -57.9 -21 -62C-21.4 -66.1 -20.2 -68.7 -19.1 -72.4C-18 -76.2 -16.1 -80 -14.1 -84.5C-12.1 -89 -9.6 -94.5 -7.4 -99.5C-5.2 -104.5 -2.6 -110.6 -0.7 -114.4C1.2 -118.2 3.2 -120.8 4 -122.1C4.8 -120.6 7.3 -116.6 9 -113.4C10.7 -110.2 12.6 -106.6 14.2 -102.7C15.8 -98.8 17.4 -94.2 18.6 -90.2C19.8 -86.2 20.9 -81.6 21.6 -78.5C22.3 -75.4 22.6 -74.5 22.7 -71.8C22.8 -69 23.1 -66 22.5 -62C21.9 -58 19.6 -50.3 19 -48Z" fill="#4476e6" stroke="#070a1c" stroke-width="1.15" stroke-linejoin="round" /><path d="M-0.5 -56C-1.1 -57.7 -3.4 -62.3 -4.2 -66C-5 -69.7 -5.5 -73.7 -5.6 -78C-5.7 -82.3 -5.2 -88.2 -4.6 -92C-4 -95.8 -3 -98.7 -1.8 -101C-0.6 -103.3 1.1 -105.8 2.4 -105.8C3.7 -105.8 4.9 -103.3 5.8 -101C6.7 -98.7 7.5 -95.5 7.8 -92C8.1 -88.5 8.1 -84 7.8 -80C7.5 -76 6.7 -72 6 -68C5.3 -64 3.9 -58 3.5 -56Z" fill="#225a69" stroke="#070a1c" stroke-width="1.1" stroke-linejoin="round" /><path d="M-5 -57C-5.8 -58.2 -8.5 -61.5 -10 -64C-11.5 -66.5 -13.4 -69.7 -14.2 -72C-14.9 -74.3 -14.9 -76.5 -14.5 -78C-14.1 -79.5 -12.9 -81.1 -12 -81.2C-11.1 -81.3 -9.7 -80.2 -8.8 -78.5C-7.9 -76.8 -7.4 -74.1 -6.5 -71C-5.6 -67.9 -4 -61.8 -3.5 -60Z" fill="#225a69" stroke="#070a1c" stroke-width="1.1" stroke-linejoin="round" /><path d="M6 -59C6.5 -60.3 8 -64.4 9 -67C10 -69.6 11.2 -72.3 12.2 -74.5C13.2 -76.7 14.2 -80 15 -80.2C15.8 -80.5 16.9 -78 17 -76C17.1 -74 16.6 -70.8 15.5 -68C14.4 -65.2 11.3 -60.5 10.5 -59Z" fill="#225a69" stroke="#070a1c" stroke-width="1.1" stroke-linejoin="round" /></g><g transform="rotate(247.5)"><path d="M-22 -48C-22.7 -50.3 -25.8 -57.6 -26 -62C-26.2 -66.4 -25.1 -69.4 -23.5 -74.2C-21.9 -79 -19.1 -85.1 -16.7 -90.6C-14.3 -96.1 -11.7 -101.8 -9.2 -107.3C-6.7 -112.8 -3.6 -119 -1.6 -123.4C0.4 -127.8 2.3 -131.8 3.1 -133.5C4.2 -131.7 7.9 -126.3 10 -122.5C12.1 -118.7 14.2 -114.7 15.9 -110.6C17.6 -106.5 18.9 -102.3 20.1 -98C21.3 -93.7 22.5 -89.1 23.3 -84.9C24.1 -80.7 24.7 -76.6 25.1 -72.8C25.6 -69 26.4 -66.1 26 -62C25.6 -57.9 23.5 -50.3 23 -48Z" fill="#eee6e0" stroke="#070a1c" stroke-width="1.15" stroke-linejoin="round" /><path d="M-17 -48C-17.7 -50.3 -20.6 -57.9 -21 -62C-21.4 -66.1 -20.2 -68.7 -19.1 -72.4C-18 -76.2 -16.1 -80 -14.1 -84.5C-12.1 -89 -9.6 -94.5 -7.4 -99.5C-5.2 -104.5 -2.6 -110.6 -0.7 -114.4C1.2 -118.2 3.2 -120.8 4 -122.1C4.8 -120.6 7.3 -116.6 9 -113.4C10.7 -110.2 12.6 -106.6 14.2 -102.7C15.8 -98.8 17.4 -94.2 18.6 -90.2C19.8 -86.2 20.9 -81.6 21.6 -78.5C22.3 -75.4 22.6 -74.5 22.7 -71.8C22.8 -69 23.1 -66 22.5 -62C21.9 -58 19.6 -50.3 19 -48Z" fill="#4476e6" stroke="#070a1c" stroke-width="1.15" stroke-linejoin="round" /><path d="M-0.5 -56C-1.1 -57.7 -3.4 -62.3 -4.2 -66C-5 -69.7 -5.5 -73.7 -5.6 -78C-5.7 -82.3 -5.2 -88.2 -4.6 -92C-4 -95.8 -3 -98.7 -1.8 -101C-0.6 -103.3 1.1 -105.8 2.4 -105.8C3.7 -105.8 4.9 -103.3 5.8 -101C6.7 -98.7 7.5 -95.5 7.8 -92C8.1 -88.5 8.1 -84 7.8 -80C7.5 -76 6.7 -72 6 -68C5.3 -64 3.9 -58 3.5 -56Z" fill="#225a69" stroke="#070a1c" stroke-width="1.1" stroke-linejoin="round" /><path d="M-5 -57C-5.8 -58.2 -8.5 -61.5 -10 -64C-11.5 -66.5 -13.4 -69.7 -14.2 -72C-14.9 -74.3 -14.9 -76.5 -14.5 -78C-14.1 -79.5 -12.9 -81.1 -12 -81.2C-11.1 -81.3 -9.7 -80.2 -8.8 -78.5C-7.9 -76.8 -7.4 -74.1 -6.5 -71C-5.6 -67.9 -4 -61.8 -3.5 -60Z" fill="#225a69" stroke="#070a1c" stroke-width="1.1" stroke-linejoin="round" /><path d="M6 -59C6.5 -60.3 8 -64.4 9 -67C10 -69.6 11.2 -72.3 12.2 -74.5C13.2 -76.7 14.2 -80 15 -80.2C15.8 -80.5 16.9 -78 17 -76C17.1 -74 16.6 -70.8 15.5 -68C14.4 -65.2 11.3 -60.5 10.5 -59Z" fill="#225a69" stroke="#070a1c" stroke-width="1.1" stroke-linejoin="round" /></g><g transform="rotate(292.5)"><path d="M-22 -48C-22.7 -50.3 -25.8 -57.6 -26 -62C-26.2 -66.4 -25.1 -69.4 -23.5 -74.2C-21.9 -79 -19.1 -85.1 -16.7 -90.6C-14.3 -96.1 -11.7 -101.8 -9.2 -107.3C-6.7 -112.8 -3.6 -119 -1.6 -123.4C0.4 -127.8 2.3 -131.8 3.1 -133.5C4.2 -131.7 7.9 -126.3 10 -122.5C12.1 -118.7 14.2 -114.7 15.9 -110.6C17.6 -106.5 18.9 -102.3 20.1 -98C21.3 -93.7 22.5 -89.1 23.3 -84.9C24.1 -80.7 24.7 -76.6 25.1 -72.8C25.6 -69 26.4 -66.1 26 -62C25.6 -57.9 23.5 -50.3 23 -48Z" fill="#eee6e0" stroke="#070a1c" stroke-width="1.15" stroke-linejoin="round" /><path d="M-17 -48C-17.7 -50.3 -20.6 -57.9 -21 -62C-21.4 -66.1 -20.2 -68.7 -19.1 -72.4C-18 -76.2 -16.1 -80 -14.1 -84.5C-12.1 -89 -9.6 -94.5 -7.4 -99.5C-5.2 -104.5 -2.6 -110.6 -0.7 -114.4C1.2 -118.2 3.2 -120.8 4 -122.1C4.8 -120.6 7.3 -116.6 9 -113.4C10.7 -110.2 12.6 -106.6 14.2 -102.7C15.8 -98.8 17.4 -94.2 18.6 -90.2C19.8 -86.2 20.9 -81.6 21.6 -78.5C22.3 -75.4 22.6 -74.5 22.7 -71.8C22.8 -69 23.1 -66 22.5 -62C21.9 -58 19.6 -50.3 19 -48Z" fill="#4476e6" stroke="#070a1c" stroke-width="1.15" stroke-linejoin="round" /><path d="M-0.5 -56C-1.1 -57.7 -3.4 -62.3 -4.2 -66C-5 -69.7 -5.5 -73.7 -5.6 -78C-5.7 -82.3 -5.2 -88.2 -4.6 -92C-4 -95.8 -3 -98.7 -1.8 -101C-0.6 -103.3 1.1 -105.8 2.4 -105.8C3.7 -105.8 4.9 -103.3 5.8 -101C6.7 -98.7 7.5 -95.5 7.8 -92C8.1 -88.5 8.1 -84 7.8 -80C7.5 -76 6.7 -72 6 -68C5.3 -64 3.9 -58 3.5 -56Z" fill="#225a69" stroke="#070a1c" stroke-width="1.1" stroke-linejoin="round" /><path d="M-5 -57C-5.8 -58.2 -8.5 -61.5 -10 -64C-11.5 -66.5 -13.4 -69.7 -14.2 -72C-14.9 -74.3 -14.9 -76.5 -14.5 -78C-14.1 -79.5 -12.9 -81.1 -12 -81.2C-11.1 -81.3 -9.7 -80.2 -8.8 -78.5C-7.9 -76.8 -7.4 -74.1 -6.5 -71C-5.6 -67.9 -4 -61.8 -3.5 -60Z" fill="#225a69" stroke="#070a1c" stroke-width="1.1" stroke-linejoin="round" /><path d="M6 -59C6.5 -60.3 8 -64.4 9 -67C10 -69.6 11.2 -72.3 12.2 -74.5C13.2 -76.7 14.2 -80 15 -80.2C15.8 -80.5 16.9 -78 17 -76C17.1 -74 16.6 -70.8 15.5 -68C14.4 -65.2 11.3 -60.5 10.5 -59Z" fill="#225a69" stroke="#070a1c" stroke-width="1.1" stroke-linejoin="round" /></g><g transform="rotate(337.5)"><path d="M-22 -48C-22.7 -50.3 -25.8 -57.6 -26 -62C-26.2 -66.4 -25.1 -69.4 -23.5 -74.2C-21.9 -79 -19.1 -85.1 -16.7 -90.6C-14.3 -96.1 -11.7 -101.8 -9.2 -107.3C-6.7 -112.8 -3.6 -119 -1.6 -123.4C0.4 -127.8 2.3 -131.8 3.1 -133.5C4.2 -131.7 7.9 -126.3 10 -122.5C12.1 -118.7 14.2 -114.7 15.9 -110.6C17.6 -106.5 18.9 -102.3 20.1 -98C21.3 -93.7 22.5 -89.1 23.3 -84.9C24.1 -80.7 24.7 -76.6 25.1 -72.8C25.6 -69 26.4 -66.1 26 -62C25.6 -57.9 23.5 -50.3 23 -48Z" fill="#eee6e0" stroke="#070a1c" stroke-width="1.15" stroke-linejoin="round" /><path d="M-17 -48C-17.7 -50.3 -20.6 -57.9 -21 -62C-21.4 -66.1 -20.2 -68.7 -19.1 -72.4C-18 -76.2 -16.1 -80 -14.1 -84.5C-12.1 -89 -9.6 -94.5 -7.4 -99.5C-5.2 -104.5 -2.6 -110.6 -0.7 -114.4C1.2 -118.2 3.2 -120.8 4 -122.1C4.8 -120.6 7.3 -116.6 9 -113.4C10.7 -110.2 12.6 -106.6 14.2 -102.7C15.8 -98.8 17.4 -94.2 18.6 -90.2C19.8 -86.2 20.9 -81.6 21.6 -78.5C22.3 -75.4 22.6 -74.5 22.7 -71.8C22.8 -69 23.1 -66 22.5 -62C21.9 -58 19.6 -50.3 19 -48Z" fill="#4476e6" stroke="#070a1c" stroke-width="1.15" stroke-linejoin="round" /><path d="M-0.5 -56C-1.1 -57.7 -3.4 -62.3 -4.2 -66C-5 -69.7 -5.5 -73.7 -5.6 -78C-5.7 -82.3 -5.2 -88.2 -4.6 -92C-4 -95.8 -3 -98.7 -1.8 -101C-0.6 -103.3 1.1 -105.8 2.4 -105.8C3.7 -105.8 4.9 -103.3 5.8 -101C6.7 -98.7 7.5 -95.5 7.8 -92C8.1 -88.5 8.1 -84 7.8 -80C7.5 -76 6.7 -72 6 -68C5.3 -64 3.9 -58 3.5 -56Z" fill="#225a69" stroke="#070a1c" stroke-width="1.1" stroke-linejoin="round" /><path d="M-5 -57C-5.8 -58.2 -8.5 -61.5 -10 -64C-11.5 -66.5 -13.4 -69.7 -14.2 -72C-14.9 -74.3 -14.9 -76.5 -14.5 -78C-14.1 -79.5 -12.9 -81.1 -12 -81.2C-11.1 -81.3 -9.7 -80.2 -8.8 -78.5C-7.9 -76.8 -7.4 -74.1 -6.5 -71C-5.6 -67.9 -4 -61.8 -3.5 -60Z" fill="#225a69" stroke="#070a1c" stroke-width="1.1" stroke-linejoin="round" /><path d="M6 -59C6.5 -60.3 8 -64.4 9 -67C10 -69.6 11.2 -72.3 12.2 -74.5C13.2 -76.7 14.2 -80 15 -80.2C15.8 -80.5 16.9 -78 17 -76C17.1 -74 16.6 -70.8 15.5 -68C14.4 -65.2 11.3 -60.5 10.5 -59Z" fill="#225a69" stroke="#070a1c" stroke-width="1.1" stroke-linejoin="round" /></g><g transform="rotate(0)"><path d="M-9.3 -28C-10.3 -30 -13.8 -36 -15.3 -40C-16.8 -44 -18 -48.7 -18.3 -52C-18.6 -55.3 -18.2 -57.2 -17.3 -59.8C-16.4 -62.4 -14.9 -65.1 -13 -67.6C-11.1 -70.1 -8.2 -72.7 -5.9 -74.7C-3.6 -76.7 -0.4 -78.7 0.7 -79.5C1.8 -78.7 5 -76.7 7.3 -74.7C9.6 -72.7 12.5 -70.1 14.4 -67.6C16.3 -65.1 17.8 -62.4 18.7 -59.8C19.6 -57.2 20 -55.3 19.7 -52C19.4 -48.7 18.2 -44 16.7 -40C15.2 -36 11.7 -30 10.7 -28Z" fill="#4476e6" stroke="#070a1c" stroke-width="1.1" stroke-linejoin="round" /><path d="M-7.3 -28C-8 -29.7 -10.3 -34.7 -11.3 -38C-12.3 -41.3 -13 -45 -13.3 -48C-13.6 -51 -13.3 -54 -13 -56.2C-12.7 -58.4 -12.4 -59.1 -11.2 -61C-10 -62.9 -7.9 -65.6 -5.9 -67.6C-3.9 -69.6 -0.4 -72 0.7 -72.9C1.8 -72 5.3 -69.6 7.3 -67.6C9.3 -65.6 11.4 -62.9 12.6 -61C13.8 -59.1 14 -58.4 14.4 -56.2C14.7 -54 15 -51 14.7 -48C14.4 -45 13.7 -41.3 12.7 -38C11.7 -34.7 9.4 -29.7 8.7 -28Z" fill="#3a6196" stroke="#070a1c" stroke-width="1.05" stroke-linejoin="round" /><path d="M1.5 -52Q1 -60 0.5 -67M1.5 -53Q-3 -58 -5.5 -63.5M1.5 -53Q5 -58 7.5 -63M0 -52Q-6 -55 -9.5 -59M3 -52Q8 -55 11 -58.5" stroke="#0d1c3a" stroke-width="0.9" fill="none" stroke-linecap="round"/></g><g transform="rotate(45)"><path d="M-9.3 -28C-10.3 -30 -13.8 -36 -15.3 -40C-16.8 -44 -18 -48.7 -18.3 -52C-18.6 -55.3 -18.2 -57.2 -17.3 -59.8C-16.4 -62.4 -14.9 -65.1 -13 -67.6C-11.1 -70.1 -8.2 -72.7 -5.9 -74.7C-3.6 -76.7 -0.4 -78.7 0.7 -79.5C1.8 -78.7 5 -76.7 7.3 -74.7C9.6 -72.7 12.5 -70.1 14.4 -67.6C16.3 -65.1 17.8 -62.4 18.7 -59.8C19.6 -57.2 20 -55.3 19.7 -52C19.4 -48.7 18.2 -44 16.7 -40C15.2 -36 11.7 -30 10.7 -28Z" fill="#4476e6" stroke="#070a1c" stroke-width="1.1" stroke-linejoin="round" /><path d="M-7.3 -28C-8 -29.7 -10.3 -34.7 -11.3 -38C-12.3 -41.3 -13 -45 -13.3 -48C-13.6 -51 -13.3 -54 -13 -56.2C-12.7 -58.4 -12.4 -59.1 -11.2 -61C-10 -62.9 -7.9 -65.6 -5.9 -67.6C-3.9 -69.6 -0.4 -72 0.7 -72.9C1.8 -72 5.3 -69.6 7.3 -67.6C9.3 -65.6 11.4 -62.9 12.6 -61C13.8 -59.1 14 -58.4 14.4 -56.2C14.7 -54 15 -51 14.7 -48C14.4 -45 13.7 -41.3 12.7 -38C11.7 -34.7 9.4 -29.7 8.7 -28Z" fill="#3a6196" stroke="#070a1c" stroke-width="1.05" stroke-linejoin="round" /><path d="M1.5 -52Q1 -60 0.5 -67M1.5 -53Q-3 -58 -5.5 -63.5M1.5 -53Q5 -58 7.5 -63M0 -52Q-6 -55 -9.5 -59M3 -52Q8 -55 11 -58.5" stroke="#0d1c3a" stroke-width="0.9" fill="none" stroke-linecap="round"/></g><g transform="rotate(90)"><path d="M-9.3 -28C-10.3 -30 -13.8 -36 -15.3 -40C-16.8 -44 -18 -48.7 -18.3 -52C-18.6 -55.3 -18.2 -57.2 -17.3 -59.8C-16.4 -62.4 -14.9 -65.1 -13 -67.6C-11.1 -70.1 -8.2 -72.7 -5.9 -74.7C-3.6 -76.7 -0.4 -78.7 0.7 -79.5C1.8 -78.7 5 -76.7 7.3 -74.7C9.6 -72.7 12.5 -70.1 14.4 -67.6C16.3 -65.1 17.8 -62.4 18.7 -59.8C19.6 -57.2 20 -55.3 19.7 -52C19.4 -48.7 18.2 -44 16.7 -40C15.2 -36 11.7 -30 10.7 -28Z" fill="#4476e6" stroke="#070a1c" stroke-width="1.1" stroke-linejoin="round" /><path d="M-7.3 -28C-8 -29.7 -10.3 -34.7 -11.3 -38C-12.3 -41.3 -13 -45 -13.3 -48C-13.6 -51 -13.3 -54 -13 -56.2C-12.7 -58.4 -12.4 -59.1 -11.2 -61C-10 -62.9 -7.9 -65.6 -5.9 -67.6C-3.9 -69.6 -0.4 -72 0.7 -72.9C1.8 -72 5.3 -69.6 7.3 -67.6C9.3 -65.6 11.4 -62.9 12.6 -61C13.8 -59.1 14 -58.4 14.4 -56.2C14.7 -54 15 -51 14.7 -48C14.4 -45 13.7 -41.3 12.7 -38C11.7 -34.7 9.4 -29.7 8.7 -28Z" fill="#3a6196" stroke="#070a1c" stroke-width="1.05" stroke-linejoin="round" /><path d="M1.5 -52Q1 -60 0.5 -67M1.5 -53Q-3 -58 -5.5 -63.5M1.5 -53Q5 -58 7.5 -63M0 -52Q-6 -55 -9.5 -59M3 -52Q8 -55 11 -58.5" stroke="#0d1c3a" stroke-width="0.9" fill="none" stroke-linecap="round"/></g><g transform="rotate(135)"><path d="M-9.3 -28C-10.3 -30 -13.8 -36 -15.3 -40C-16.8 -44 -18 -48.7 -18.3 -52C-18.6 -55.3 -18.2 -57.2 -17.3 -59.8C-16.4 -62.4 -14.9 -65.1 -13 -67.6C-11.1 -70.1 -8.2 -72.7 -5.9 -74.7C-3.6 -76.7 -0.4 -78.7 0.7 -79.5C1.8 -78.7 5 -76.7 7.3 -74.7C9.6 -72.7 12.5 -70.1 14.4 -67.6C16.3 -65.1 17.8 -62.4 18.7 -59.8C19.6 -57.2 20 -55.3 19.7 -52C19.4 -48.7 18.2 -44 16.7 -40C15.2 -36 11.7 -30 10.7 -28Z" fill="#4476e6" stroke="#070a1c" stroke-width="1.1" stroke-linejoin="round" /><path d="M-7.3 -28C-8 -29.7 -10.3 -34.7 -11.3 -38C-12.3 -41.3 -13 -45 -13.3 -48C-13.6 -51 -13.3 -54 -13 -56.2C-12.7 -58.4 -12.4 -59.1 -11.2 -61C-10 -62.9 -7.9 -65.6 -5.9 -67.6C-3.9 -69.6 -0.4 -72 0.7 -72.9C1.8 -72 5.3 -69.6 7.3 -67.6C9.3 -65.6 11.4 -62.9 12.6 -61C13.8 -59.1 14 -58.4 14.4 -56.2C14.7 -54 15 -51 14.7 -48C14.4 -45 13.7 -41.3 12.7 -38C11.7 -34.7 9.4 -29.7 8.7 -28Z" fill="#3a6196" stroke="#070a1c" stroke-width="1.05" stroke-linejoin="round" /><path d="M1.5 -52Q1 -60 0.5 -67M1.5 -53Q-3 -58 -5.5 -63.5M1.5 -53Q5 -58 7.5 -63M0 -52Q-6 -55 -9.5 -59M3 -52Q8 -55 11 -58.5" stroke="#0d1c3a" stroke-width="0.9" fill="none" stroke-linecap="round"/></g><g transform="rotate(180)"><path d="M-9.3 -28C-10.3 -30 -13.8 -36 -15.3 -40C-16.8 -44 -18 -48.7 -18.3 -52C-18.6 -55.3 -18.2 -57.2 -17.3 -59.8C-16.4 -62.4 -14.9 -65.1 -13 -67.6C-11.1 -70.1 -8.2 -72.7 -5.9 -74.7C-3.6 -76.7 -0.4 -78.7 0.7 -79.5C1.8 -78.7 5 -76.7 7.3 -74.7C9.6 -72.7 12.5 -70.1 14.4 -67.6C16.3 -65.1 17.8 -62.4 18.7 -59.8C19.6 -57.2 20 -55.3 19.7 -52C19.4 -48.7 18.2 -44 16.7 -40C15.2 -36 11.7 -30 10.7 -28Z" fill="#4476e6" stroke="#070a1c" stroke-width="1.1" stroke-linejoin="round" /><path d="M-7.3 -28C-8 -29.7 -10.3 -34.7 -11.3 -38C-12.3 -41.3 -13 -45 -13.3 -48C-13.6 -51 -13.3 -54 -13 -56.2C-12.7 -58.4 -12.4 -59.1 -11.2 -61C-10 -62.9 -7.9 -65.6 -5.9 -67.6C-3.9 -69.6 -0.4 -72 0.7 -72.9C1.8 -72 5.3 -69.6 7.3 -67.6C9.3 -65.6 11.4 -62.9 12.6 -61C13.8 -59.1 14 -58.4 14.4 -56.2C14.7 -54 15 -51 14.7 -48C14.4 -45 13.7 -41.3 12.7 -38C11.7 -34.7 9.4 -29.7 8.7 -28Z" fill="#3a6196" stroke="#070a1c" stroke-width="1.05" stroke-linejoin="round" /><path d="M1.5 -52Q1 -60 0.5 -67M1.5 -53Q-3 -58 -5.5 -63.5M1.5 -53Q5 -58 7.5 -63M0 -52Q-6 -55 -9.5 -59M3 -52Q8 -55 11 -58.5" stroke="#0d1c3a" stroke-width="0.9" fill="none" stroke-linecap="round"/></g><g transform="rotate(225)"><path d="M-9.3 -28C-10.3 -30 -13.8 -36 -15.3 -40C-16.8 -44 -18 -48.7 -18.3 -52C-18.6 -55.3 -18.2 -57.2 -17.3 -59.8C-16.4 -62.4 -14.9 -65.1 -13 -67.6C-11.1 -70.1 -8.2 -72.7 -5.9 -74.7C-3.6 -76.7 -0.4 -78.7 0.7 -79.5C1.8 -78.7 5 -76.7 7.3 -74.7C9.6 -72.7 12.5 -70.1 14.4 -67.6C16.3 -65.1 17.8 -62.4 18.7 -59.8C19.6 -57.2 20 -55.3 19.7 -52C19.4 -48.7 18.2 -44 16.7 -40C15.2 -36 11.7 -30 10.7 -28Z" fill="#4476e6" stroke="#070a1c" stroke-width="1.1" stroke-linejoin="round" /><path d="M-7.3 -28C-8 -29.7 -10.3 -34.7 -11.3 -38C-12.3 -41.3 -13 -45 -13.3 -48C-13.6 -51 -13.3 -54 -13 -56.2C-12.7 -58.4 -12.4 -59.1 -11.2 -61C-10 -62.9 -7.9 -65.6 -5.9 -67.6C-3.9 -69.6 -0.4 -72 0.7 -72.9C1.8 -72 5.3 -69.6 7.3 -67.6C9.3 -65.6 11.4 -62.9 12.6 -61C13.8 -59.1 14 -58.4 14.4 -56.2C14.7 -54 15 -51 14.7 -48C14.4 -45 13.7 -41.3 12.7 -38C11.7 -34.7 9.4 -29.7 8.7 -28Z" fill="#3a6196" stroke="#070a1c" stroke-width="1.05" stroke-linejoin="round" /><path d="M1.5 -52Q1 -60 0.5 -67M1.5 -53Q-3 -58 -5.5 -63.5M1.5 -53Q5 -58 7.5 -63M0 -52Q-6 -55 -9.5 -59M3 -52Q8 -55 11 -58.5" stroke="#0d1c3a" stroke-width="0.9" fill="none" stroke-linecap="round"/></g><g transform="rotate(270)"><path d="M-9.3 -28C-10.3 -30 -13.8 -36 -15.3 -40C-16.8 -44 -18 -48.7 -18.3 -52C-18.6 -55.3 -18.2 -57.2 -17.3 -59.8C-16.4 -62.4 -14.9 -65.1 -13 -67.6C-11.1 -70.1 -8.2 -72.7 -5.9 -74.7C-3.6 -76.7 -0.4 -78.7 0.7 -79.5C1.8 -78.7 5 -76.7 7.3 -74.7C9.6 -72.7 12.5 -70.1 14.4 -67.6C16.3 -65.1 17.8 -62.4 18.7 -59.8C19.6 -57.2 20 -55.3 19.7 -52C19.4 -48.7 18.2 -44 16.7 -40C15.2 -36 11.7 -30 10.7 -28Z" fill="#4476e6" stroke="#070a1c" stroke-width="1.1" stroke-linejoin="round" /><path d="M-7.3 -28C-8 -29.7 -10.3 -34.7 -11.3 -38C-12.3 -41.3 -13 -45 -13.3 -48C-13.6 -51 -13.3 -54 -13 -56.2C-12.7 -58.4 -12.4 -59.1 -11.2 -61C-10 -62.9 -7.9 -65.6 -5.9 -67.6C-3.9 -69.6 -0.4 -72 0.7 -72.9C1.8 -72 5.3 -69.6 7.3 -67.6C9.3 -65.6 11.4 -62.9 12.6 -61C13.8 -59.1 14 -58.4 14.4 -56.2C14.7 -54 15 -51 14.7 -48C14.4 -45 13.7 -41.3 12.7 -38C11.7 -34.7 9.4 -29.7 8.7 -28Z" fill="#3a6196" stroke="#070a1c" stroke-width="1.05" stroke-linejoin="round" /><path d="M1.5 -52Q1 -60 0.5 -67M1.5 -53Q-3 -58 -5.5 -63.5M1.5 -53Q5 -58 7.5 -63M0 -52Q-6 -55 -9.5 -59M3 -52Q8 -55 11 -58.5" stroke="#0d1c3a" stroke-width="0.9" fill="none" stroke-linecap="round"/></g><g transform="rotate(315)"><path d="M-9.3 -28C-10.3 -30 -13.8 -36 -15.3 -40C-16.8 -44 -18 -48.7 -18.3 -52C-18.6 -55.3 -18.2 -57.2 -17.3 -59.8C-16.4 -62.4 -14.9 -65.1 -13 -67.6C-11.1 -70.1 -8.2 -72.7 -5.9 -74.7C-3.6 -76.7 -0.4 -78.7 0.7 -79.5C1.8 -78.7 5 -76.7 7.3 -74.7C9.6 -72.7 12.5 -70.1 14.4 -67.6C16.3 -65.1 17.8 -62.4 18.7 -59.8C19.6 -57.2 20 -55.3 19.7 -52C19.4 -48.7 18.2 -44 16.7 -40C15.2 -36 11.7 -30 10.7 -28Z" fill="#4476e6" stroke="#070a1c" stroke-width="1.1" stroke-linejoin="round" /><path d="M-7.3 -28C-8 -29.7 -10.3 -34.7 -11.3 -38C-12.3 -41.3 -13 -45 -13.3 -48C-13.6 -51 -13.3 -54 -13 -56.2C-12.7 -58.4 -12.4 -59.1 -11.2 -61C-10 -62.9 -7.9 -65.6 -5.9 -67.6C-3.9 -69.6 -0.4 -72 0.7 -72.9C1.8 -72 5.3 -69.6 7.3 -67.6C9.3 -65.6 11.4 -62.9 12.6 -61C13.8 -59.1 14 -58.4 14.4 -56.2C14.7 -54 15 -51 14.7 -48C14.4 -45 13.7 -41.3 12.7 -38C11.7 -34.7 9.4 -29.7 8.7 -28Z" fill="#3a6196" stroke="#070a1c" stroke-width="1.05" stroke-linejoin="round" /><path d="M1.5 -52Q1 -60 0.5 -67M1.5 -53Q-3 -58 -5.5 -63.5M1.5 -53Q5 -58 7.5 -63M0 -52Q-6 -55 -9.5 -59M3 -52Q8 -55 11 -58.5" stroke="#0d1c3a" stroke-width="0.9" fill="none" stroke-linecap="round"/></g><g transform="rotate(25.5)"><path d="M-8 -14C-9.2 -16 -13.3 -22 -15 -26C-16.7 -30 -17.7 -34.7 -18 -38C-18.3 -41.3 -17.8 -43.5 -17 -46C-16.2 -48.5 -15 -51.2 -13.5 -53C-12 -54.8 -10.2 -56 -8 -57C-5.8 -58 -2.7 -59 0 -59C2.7 -59 5.8 -58 8 -57C10.2 -56 12 -54.8 13.5 -53C15 -51.2 16.2 -48.5 17 -46C17.8 -43.5 18.3 -41.3 18 -38C17.7 -34.7 16.7 -30 15 -26C13.3 -22 9.2 -16 8 -14Z" fill="#4a6b66" stroke="#070a1c" stroke-width="1.05" stroke-linejoin="round" /><path d="M-5 -14C-5.8 -15.8 -8.8 -21.5 -10 -25C-11.2 -28.5 -12.1 -32.2 -12.5 -35C-12.9 -37.8 -12.7 -39.8 -12.3 -42C-11.9 -44.2 -11.1 -46.5 -10 -48C-8.9 -49.5 -7.7 -50.5 -6 -51.3C-4.3 -52 -2 -52.5 0 -52.5C2 -52.5 4.3 -52 6 -51.3C7.7 -50.5 8.9 -49.5 10 -48C11.1 -46.5 11.9 -44.2 12.3 -42C12.7 -39.8 12.9 -37.8 12.5 -35C12.1 -32.2 11.2 -28.5 10 -25C8.8 -21.5 5.8 -15.8 5 -14Z" fill="#52bdea" stroke="#070a1c" stroke-width="1.05" stroke-linejoin="round" /><g transform="translate(-2 0)"><path d="M0 -37.2C-0.2 -37.6 -1.1 -38.6 -1.5 -39.5C-1.9 -40.4 -2.1 -41.4 -2.1 -42.4C-2.1 -43.4 -1.9 -44.4 -1.5 -45.3C-1.1 -46.2 -0.2 -47.2 0 -47.6C0.2 -47.2 1.1 -46.2 1.5 -45.3C1.9 -44.4 2.1 -43.4 2.1 -42.4C2.1 -41.4 1.9 -40.4 1.5 -39.5C1.1 -38.6 0.2 -37.6 0 -37.2Z" fill="#225a69" stroke="#070a1c" stroke-width="1.0" stroke-linejoin="round" /></g></g><g transform="rotate(70.5)"><path d="M-8 -14C-9.2 -16 -13.3 -22 -15 -26C-16.7 -30 -17.7 -34.7 -18 -38C-18.3 -41.3 -17.8 -43.5 -17 -46C-16.2 -48.5 -15 -51.2 -13.5 -53C-12 -54.8 -10.2 -56 -8 -57C-5.8 -58 -2.7 -59 0 -59C2.7 -59 5.8 -58 8 -57C10.2 -56 12 -54.8 13.5 -53C15 -51.2 16.2 -48.5 17 -46C17.8 -43.5 18.3 -41.3 18 -38C17.7 -34.7 16.7 -30 15 -26C13.3 -22 9.2 -16 8 -14Z" fill="#4a6b66" stroke="#070a1c" stroke-width="1.05" stroke-linejoin="round" /><path d="M-5 -14C-5.8 -15.8 -8.8 -21.5 -10 -25C-11.2 -28.5 -12.1 -32.2 -12.5 -35C-12.9 -37.8 -12.7 -39.8 -12.3 -42C-11.9 -44.2 -11.1 -46.5 -10 -48C-8.9 -49.5 -7.7 -50.5 -6 -51.3C-4.3 -52 -2 -52.5 0 -52.5C2 -52.5 4.3 -52 6 -51.3C7.7 -50.5 8.9 -49.5 10 -48C11.1 -46.5 11.9 -44.2 12.3 -42C12.7 -39.8 12.9 -37.8 12.5 -35C12.1 -32.2 11.2 -28.5 10 -25C8.8 -21.5 5.8 -15.8 5 -14Z" fill="#52bdea" stroke="#070a1c" stroke-width="1.05" stroke-linejoin="round" /><g transform="translate(-2 0)"><path d="M0 -37.2C-0.2 -37.6 -1.1 -38.6 -1.5 -39.5C-1.9 -40.4 -2.1 -41.4 -2.1 -42.4C-2.1 -43.4 -1.9 -44.4 -1.5 -45.3C-1.1 -46.2 -0.2 -47.2 0 -47.6C0.2 -47.2 1.1 -46.2 1.5 -45.3C1.9 -44.4 2.1 -43.4 2.1 -42.4C2.1 -41.4 1.9 -40.4 1.5 -39.5C1.1 -38.6 0.2 -37.6 0 -37.2Z" fill="#225a69" stroke="#070a1c" stroke-width="1.0" stroke-linejoin="round" /></g></g><g transform="rotate(115.5)"><path d="M-8 -14C-9.2 -16 -13.3 -22 -15 -26C-16.7 -30 -17.7 -34.7 -18 -38C-18.3 -41.3 -17.8 -43.5 -17 -46C-16.2 -48.5 -15 -51.2 -13.5 -53C-12 -54.8 -10.2 -56 -8 -57C-5.8 -58 -2.7 -59 0 -59C2.7 -59 5.8 -58 8 -57C10.2 -56 12 -54.8 13.5 -53C15 -51.2 16.2 -48.5 17 -46C17.8 -43.5 18.3 -41.3 18 -38C17.7 -34.7 16.7 -30 15 -26C13.3 -22 9.2 -16 8 -14Z" fill="#4a6b66" stroke="#070a1c" stroke-width="1.05" stroke-linejoin="round" /><path d="M-5 -14C-5.8 -15.8 -8.8 -21.5 -10 -25C-11.2 -28.5 -12.1 -32.2 -12.5 -35C-12.9 -37.8 -12.7 -39.8 -12.3 -42C-11.9 -44.2 -11.1 -46.5 -10 -48C-8.9 -49.5 -7.7 -50.5 -6 -51.3C-4.3 -52 -2 -52.5 0 -52.5C2 -52.5 4.3 -52 6 -51.3C7.7 -50.5 8.9 -49.5 10 -48C11.1 -46.5 11.9 -44.2 12.3 -42C12.7 -39.8 12.9 -37.8 12.5 -35C12.1 -32.2 11.2 -28.5 10 -25C8.8 -21.5 5.8 -15.8 5 -14Z" fill="#52bdea" stroke="#070a1c" stroke-width="1.05" stroke-linejoin="round" /><g transform="translate(-2 0)"><path d="M0 -37.2C-0.2 -37.6 -1.1 -38.6 -1.5 -39.5C-1.9 -40.4 -2.1 -41.4 -2.1 -42.4C-2.1 -43.4 -1.9 -44.4 -1.5 -45.3C-1.1 -46.2 -0.2 -47.2 0 -47.6C0.2 -47.2 1.1 -46.2 1.5 -45.3C1.9 -44.4 2.1 -43.4 2.1 -42.4C2.1 -41.4 1.9 -40.4 1.5 -39.5C1.1 -38.6 0.2 -37.6 0 -37.2Z" fill="#225a69" stroke="#070a1c" stroke-width="1.0" stroke-linejoin="round" /></g></g><g transform="rotate(160.5)"><path d="M-8 -14C-9.2 -16 -13.3 -22 -15 -26C-16.7 -30 -17.7 -34.7 -18 -38C-18.3 -41.3 -17.8 -43.5 -17 -46C-16.2 -48.5 -15 -51.2 -13.5 -53C-12 -54.8 -10.2 -56 -8 -57C-5.8 -58 -2.7 -59 0 -59C2.7 -59 5.8 -58 8 -57C10.2 -56 12 -54.8 13.5 -53C15 -51.2 16.2 -48.5 17 -46C17.8 -43.5 18.3 -41.3 18 -38C17.7 -34.7 16.7 -30 15 -26C13.3 -22 9.2 -16 8 -14Z" fill="#4a6b66" stroke="#070a1c" stroke-width="1.05" stroke-linejoin="round" /><path d="M-5 -14C-5.8 -15.8 -8.8 -21.5 -10 -25C-11.2 -28.5 -12.1 -32.2 -12.5 -35C-12.9 -37.8 -12.7 -39.8 -12.3 -42C-11.9 -44.2 -11.1 -46.5 -10 -48C-8.9 -49.5 -7.7 -50.5 -6 -51.3C-4.3 -52 -2 -52.5 0 -52.5C2 -52.5 4.3 -52 6 -51.3C7.7 -50.5 8.9 -49.5 10 -48C11.1 -46.5 11.9 -44.2 12.3 -42C12.7 -39.8 12.9 -37.8 12.5 -35C12.1 -32.2 11.2 -28.5 10 -25C8.8 -21.5 5.8 -15.8 5 -14Z" fill="#52bdea" stroke="#070a1c" stroke-width="1.05" stroke-linejoin="round" /><g transform="translate(-2 0)"><path d="M0 -37.2C-0.2 -37.6 -1.1 -38.6 -1.5 -39.5C-1.9 -40.4 -2.1 -41.4 -2.1 -42.4C-2.1 -43.4 -1.9 -44.4 -1.5 -45.3C-1.1 -46.2 -0.2 -47.2 0 -47.6C0.2 -47.2 1.1 -46.2 1.5 -45.3C1.9 -44.4 2.1 -43.4 2.1 -42.4C2.1 -41.4 1.9 -40.4 1.5 -39.5C1.1 -38.6 0.2 -37.6 0 -37.2Z" fill="#225a69" stroke="#070a1c" stroke-width="1.0" stroke-linejoin="round" /></g></g><g transform="rotate(205.5)"><path d="M-8 -14C-9.2 -16 -13.3 -22 -15 -26C-16.7 -30 -17.7 -34.7 -18 -38C-18.3 -41.3 -17.8 -43.5 -17 -46C-16.2 -48.5 -15 -51.2 -13.5 -53C-12 -54.8 -10.2 -56 -8 -57C-5.8 -58 -2.7 -59 0 -59C2.7 -59 5.8 -58 8 -57C10.2 -56 12 -54.8 13.5 -53C15 -51.2 16.2 -48.5 17 -46C17.8 -43.5 18.3 -41.3 18 -38C17.7 -34.7 16.7 -30 15 -26C13.3 -22 9.2 -16 8 -14Z" fill="#4a6b66" stroke="#070a1c" stroke-width="1.05" stroke-linejoin="round" /><path d="M-5 -14C-5.8 -15.8 -8.8 -21.5 -10 -25C-11.2 -28.5 -12.1 -32.2 -12.5 -35C-12.9 -37.8 -12.7 -39.8 -12.3 -42C-11.9 -44.2 -11.1 -46.5 -10 -48C-8.9 -49.5 -7.7 -50.5 -6 -51.3C-4.3 -52 -2 -52.5 0 -52.5C2 -52.5 4.3 -52 6 -51.3C7.7 -50.5 8.9 -49.5 10 -48C11.1 -46.5 11.9 -44.2 12.3 -42C12.7 -39.8 12.9 -37.8 12.5 -35C12.1 -32.2 11.2 -28.5 10 -25C8.8 -21.5 5.8 -15.8 5 -14Z" fill="#52bdea" stroke="#070a1c" stroke-width="1.05" stroke-linejoin="round" /><g transform="translate(-2 0)"><path d="M0 -37.2C-0.2 -37.6 -1.1 -38.6 -1.5 -39.5C-1.9 -40.4 -2.1 -41.4 -2.1 -42.4C-2.1 -43.4 -1.9 -44.4 -1.5 -45.3C-1.1 -46.2 -0.2 -47.2 0 -47.6C0.2 -47.2 1.1 -46.2 1.5 -45.3C1.9 -44.4 2.1 -43.4 2.1 -42.4C2.1 -41.4 1.9 -40.4 1.5 -39.5C1.1 -38.6 0.2 -37.6 0 -37.2Z" fill="#225a69" stroke="#070a1c" stroke-width="1.0" stroke-linejoin="round" /></g></g><g transform="rotate(250.5)"><path d="M-8 -14C-9.2 -16 -13.3 -22 -15 -26C-16.7 -30 -17.7 -34.7 -18 -38C-18.3 -41.3 -17.8 -43.5 -17 -46C-16.2 -48.5 -15 -51.2 -13.5 -53C-12 -54.8 -10.2 -56 -8 -57C-5.8 -58 -2.7 -59 0 -59C2.7 -59 5.8 -58 8 -57C10.2 -56 12 -54.8 13.5 -53C15 -51.2 16.2 -48.5 17 -46C17.8 -43.5 18.3 -41.3 18 -38C17.7 -34.7 16.7 -30 15 -26C13.3 -22 9.2 -16 8 -14Z" fill="#4a6b66" stroke="#070a1c" stroke-width="1.05" stroke-linejoin="round" /><path d="M-5 -14C-5.8 -15.8 -8.8 -21.5 -10 -25C-11.2 -28.5 -12.1 -32.2 -12.5 -35C-12.9 -37.8 -12.7 -39.8 -12.3 -42C-11.9 -44.2 -11.1 -46.5 -10 -48C-8.9 -49.5 -7.7 -50.5 -6 -51.3C-4.3 -52 -2 -52.5 0 -52.5C2 -52.5 4.3 -52 6 -51.3C7.7 -50.5 8.9 -49.5 10 -48C11.1 -46.5 11.9 -44.2 12.3 -42C12.7 -39.8 12.9 -37.8 12.5 -35C12.1 -32.2 11.2 -28.5 10 -25C8.8 -21.5 5.8 -15.8 5 -14Z" fill="#52bdea" stroke="#070a1c" stroke-width="1.05" stroke-linejoin="round" /><g transform="translate(-2 0)"><path d="M0 -37.2C-0.2 -37.6 -1.1 -38.6 -1.5 -39.5C-1.9 -40.4 -2.1 -41.4 -2.1 -42.4C-2.1 -43.4 -1.9 -44.4 -1.5 -45.3C-1.1 -46.2 -0.2 -47.2 0 -47.6C0.2 -47.2 1.1 -46.2 1.5 -45.3C1.9 -44.4 2.1 -43.4 2.1 -42.4C2.1 -41.4 1.9 -40.4 1.5 -39.5C1.1 -38.6 0.2 -37.6 0 -37.2Z" fill="#225a69" stroke="#070a1c" stroke-width="1.0" stroke-linejoin="round" /></g></g><g transform="rotate(295.5)"><path d="M-8 -14C-9.2 -16 -13.3 -22 -15 -26C-16.7 -30 -17.7 -34.7 -18 -38C-18.3 -41.3 -17.8 -43.5 -17 -46C-16.2 -48.5 -15 -51.2 -13.5 -53C-12 -54.8 -10.2 -56 -8 -57C-5.8 -58 -2.7 -59 0 -59C2.7 -59 5.8 -58 8 -57C10.2 -56 12 -54.8 13.5 -53C15 -51.2 16.2 -48.5 17 -46C17.8 -43.5 18.3 -41.3 18 -38C17.7 -34.7 16.7 -30 15 -26C13.3 -22 9.2 -16 8 -14Z" fill="#4a6b66" stroke="#070a1c" stroke-width="1.05" stroke-linejoin="round" /><path d="M-5 -14C-5.8 -15.8 -8.8 -21.5 -10 -25C-11.2 -28.5 -12.1 -32.2 -12.5 -35C-12.9 -37.8 -12.7 -39.8 -12.3 -42C-11.9 -44.2 -11.1 -46.5 -10 -48C-8.9 -49.5 -7.7 -50.5 -6 -51.3C-4.3 -52 -2 -52.5 0 -52.5C2 -52.5 4.3 -52 6 -51.3C7.7 -50.5 8.9 -49.5 10 -48C11.1 -46.5 11.9 -44.2 12.3 -42C12.7 -39.8 12.9 -37.8 12.5 -35C12.1 -32.2 11.2 -28.5 10 -25C8.8 -21.5 5.8 -15.8 5 -14Z" fill="#52bdea" stroke="#070a1c" stroke-width="1.05" stroke-linejoin="round" /><g transform="translate(-2 0)"><path d="M0 -37.2C-0.2 -37.6 -1.1 -38.6 -1.5 -39.5C-1.9 -40.4 -2.1 -41.4 -2.1 -42.4C-2.1 -43.4 -1.9 -44.4 -1.5 -45.3C-1.1 -46.2 -0.2 -47.2 0 -47.6C0.2 -47.2 1.1 -46.2 1.5 -45.3C1.9 -44.4 2.1 -43.4 2.1 -42.4C2.1 -41.4 1.9 -40.4 1.5 -39.5C1.1 -38.6 0.2 -37.6 0 -37.2Z" fill="#225a69" stroke="#070a1c" stroke-width="1.0" stroke-linejoin="round" /></g></g><g transform="rotate(340.5)"><path d="M-8 -14C-9.2 -16 -13.3 -22 -15 -26C-16.7 -30 -17.7 -34.7 -18 -38C-18.3 -41.3 -17.8 -43.5 -17 -46C-16.2 -48.5 -15 -51.2 -13.5 -53C-12 -54.8 -10.2 -56 -8 -57C-5.8 -58 -2.7 -59 0 -59C2.7 -59 5.8 -58 8 -57C10.2 -56 12 -54.8 13.5 -53C15 -51.2 16.2 -48.5 17 -46C17.8 -43.5 18.3 -41.3 18 -38C17.7 -34.7 16.7 -30 15 -26C13.3 -22 9.2 -16 8 -14Z" fill="#4a6b66" stroke="#070a1c" stroke-width="1.05" stroke-linejoin="round" /><path d="M-5 -14C-5.8 -15.8 -8.8 -21.5 -10 -25C-11.2 -28.5 -12.1 -32.2 -12.5 -35C-12.9 -37.8 -12.7 -39.8 -12.3 -42C-11.9 -44.2 -11.1 -46.5 -10 -48C-8.9 -49.5 -7.7 -50.5 -6 -51.3C-4.3 -52 -2 -52.5 0 -52.5C2 -52.5 4.3 -52 6 -51.3C7.7 -50.5 8.9 -49.5 10 -48C11.1 -46.5 11.9 -44.2 12.3 -42C12.7 -39.8 12.9 -37.8 12.5 -35C12.1 -32.2 11.2 -28.5 10 -25C8.8 -21.5 5.8 -15.8 5 -14Z" fill="#52bdea" stroke="#070a1c" stroke-width="1.05" stroke-linejoin="round" /><g transform="translate(-2 0)"><path d="M0 -37.2C-0.2 -37.6 -1.1 -38.6 -1.5 -39.5C-1.9 -40.4 -2.1 -41.4 -2.1 -42.4C-2.1 -43.4 -1.9 -44.4 -1.5 -45.3C-1.1 -46.2 -0.2 -47.2 0 -47.6C0.2 -47.2 1.1 -46.2 1.5 -45.3C1.9 -44.4 2.1 -43.4 2.1 -42.4C2.1 -41.4 1.9 -40.4 1.5 -39.5C1.1 -38.6 0.2 -37.6 0 -37.2Z" fill="#225a69" stroke="#070a1c" stroke-width="1.0" stroke-linejoin="round" /></g></g><g transform="rotate(2)"><path d="M-2.5 -13C-2.9 -14.5 -4.1 -19 -4.6 -22C-5.1 -25 -5.4 -28.5 -5.4 -31C-5.5 -33.5 -5.4 -34.8 -4.9 -37C-4.5 -39.2 -3.5 -41.8 -2.7 -44C-1.9 -46.2 -0.5 -49.2 0 -50.3C0.5 -49.2 1.9 -46.2 2.7 -44C3.5 -41.8 4.5 -39.2 4.9 -37C5.4 -34.8 5.5 -33.5 5.4 -31C5.4 -28.5 5.1 -25 4.6 -22C4.1 -19 2.9 -14.5 2.5 -13Z" fill="#4476e6" stroke="#0a1a5e" stroke-width="1.6" stroke-linejoin="round" /></g><g transform="rotate(47)"><path d="M-2.5 -13C-2.9 -14.5 -4.1 -19 -4.6 -22C-5.1 -25 -5.4 -28.5 -5.4 -31C-5.5 -33.5 -5.4 -34.8 -4.9 -37C-4.5 -39.2 -3.5 -41.8 -2.7 -44C-1.9 -46.2 -0.5 -49.2 0 -50.3C0.5 -49.2 1.9 -46.2 2.7 -44C3.5 -41.8 4.5 -39.2 4.9 -37C5.4 -34.8 5.5 -33.5 5.4 -31C5.4 -28.5 5.1 -25 4.6 -22C4.1 -19 2.9 -14.5 2.5 -13Z" fill="#4476e6" stroke="#0a1a5e" stroke-width="1.6" stroke-linejoin="round" /></g><g transform="rotate(92)"><path d="M-2.5 -13C-2.9 -14.5 -4.1 -19 -4.6 -22C-5.1 -25 -5.4 -28.5 -5.4 -31C-5.5 -33.5 -5.4 -34.8 -4.9 -37C-4.5 -39.2 -3.5 -41.8 -2.7 -44C-1.9 -46.2 -0.5 -49.2 0 -50.3C0.5 -49.2 1.9 -46.2 2.7 -44C3.5 -41.8 4.5 -39.2 4.9 -37C5.4 -34.8 5.5 -33.5 5.4 -31C5.4 -28.5 5.1 -25 4.6 -22C4.1 -19 2.9 -14.5 2.5 -13Z" fill="#4476e6" stroke="#0a1a5e" stroke-width="1.6" stroke-linejoin="round" /></g><g transform="rotate(137)"><path d="M-2.5 -13C-2.9 -14.5 -4.1 -19 -4.6 -22C-5.1 -25 -5.4 -28.5 -5.4 -31C-5.5 -33.5 -5.4 -34.8 -4.9 -37C-4.5 -39.2 -3.5 -41.8 -2.7 -44C-1.9 -46.2 -0.5 -49.2 0 -50.3C0.5 -49.2 1.9 -46.2 2.7 -44C3.5 -41.8 4.5 -39.2 4.9 -37C5.4 -34.8 5.5 -33.5 5.4 -31C5.4 -28.5 5.1 -25 4.6 -22C4.1 -19 2.9 -14.5 2.5 -13Z" fill="#4476e6" stroke="#0a1a5e" stroke-width="1.6" stroke-linejoin="round" /></g><g transform="rotate(182)"><path d="M-2.5 -13C-2.9 -14.5 -4.1 -19 -4.6 -22C-5.1 -25 -5.4 -28.5 -5.4 -31C-5.5 -33.5 -5.4 -34.8 -4.9 -37C-4.5 -39.2 -3.5 -41.8 -2.7 -44C-1.9 -46.2 -0.5 -49.2 0 -50.3C0.5 -49.2 1.9 -46.2 2.7 -44C3.5 -41.8 4.5 -39.2 4.9 -37C5.4 -34.8 5.5 -33.5 5.4 -31C5.4 -28.5 5.1 -25 4.6 -22C4.1 -19 2.9 -14.5 2.5 -13Z" fill="#4476e6" stroke="#0a1a5e" stroke-width="1.6" stroke-linejoin="round" /></g><g transform="rotate(227)"><path d="M-2.5 -13C-2.9 -14.5 -4.1 -19 -4.6 -22C-5.1 -25 -5.4 -28.5 -5.4 -31C-5.5 -33.5 -5.4 -34.8 -4.9 -37C-4.5 -39.2 -3.5 -41.8 -2.7 -44C-1.9 -46.2 -0.5 -49.2 0 -50.3C0.5 -49.2 1.9 -46.2 2.7 -44C3.5 -41.8 4.5 -39.2 4.9 -37C5.4 -34.8 5.5 -33.5 5.4 -31C5.4 -28.5 5.1 -25 4.6 -22C4.1 -19 2.9 -14.5 2.5 -13Z" fill="#4476e6" stroke="#0a1a5e" stroke-width="1.6" stroke-linejoin="round" /></g><g transform="rotate(272)"><path d="M-2.5 -13C-2.9 -14.5 -4.1 -19 -4.6 -22C-5.1 -25 -5.4 -28.5 -5.4 -31C-5.5 -33.5 -5.4 -34.8 -4.9 -37C-4.5 -39.2 -3.5 -41.8 -2.7 -44C-1.9 -46.2 -0.5 -49.2 0 -50.3C0.5 -49.2 1.9 -46.2 2.7 -44C3.5 -41.8 4.5 -39.2 4.9 -37C5.4 -34.8 5.5 -33.5 5.4 -31C5.4 -28.5 5.1 -25 4.6 -22C4.1 -19 2.9 -14.5 2.5 -13Z" fill="#4476e6" stroke="#0a1a5e" stroke-width="1.6" stroke-linejoin="round" /></g><g transform="rotate(317)"><path d="M-2.5 -13C-2.9 -14.5 -4.1 -19 -4.6 -22C-5.1 -25 -5.4 -28.5 -5.4 -31C-5.5 -33.5 -5.4 -34.8 -4.9 -37C-4.5 -39.2 -3.5 -41.8 -2.7 -44C-1.9 -46.2 -0.5 -49.2 0 -50.3C0.5 -49.2 1.9 -46.2 2.7 -44C3.5 -41.8 4.5 -39.2 4.9 -37C5.4 -34.8 5.5 -33.5 5.4 -31C5.4 -28.5 5.1 -25 4.6 -22C4.1 -19 2.9 -14.5 2.5 -13Z" fill="#4476e6" stroke="#0a1a5e" stroke-width="1.6" stroke-linejoin="round" /></g><circle r="13" fill="#225a69" stroke="#0a1a5e" stroke-width="1.5"/></g></svg><div id="panel" class="abs"></div><div class="abs" style="left:794px;top:153px;width:197.5px;height:11px;background:#a9a9a9;border-radius:3px 3px 0 0"></div><div class="abs" style="left:794px;top:163.5px;width:197.5px;height:14px;background:#adadad"></div><div class="abs tab on" style="left:794.0px;width:31.5px">图层</div><div class="abs tab" style="left:825.5px;width:30.5px">通道</div><div class="abs tab" style="left:856.0px;width:50.5px">历史记录</div><div class="abs tab" style="left:906.5px;width:30.5px">路径</div><svg class="abs" style="left:964px;top:155px" width="26" height="8" viewBox="0 0 26 8"><path d="M5.2 1.8L2.8 4L5.2 6.2ZM8.4 1.8L6 4L8.4 6.2Z" fill="#333" stroke="#333" stroke-width="0.5"/><path d="M18.3 1.6L22.7 6.4M22.7 1.6L18.3 6.4" stroke="#333" stroke-width="1.6"/></svg><svg class="abs" style="left:977px;top:166.5px" width="10" height="8" viewBox="0 0 10 8"><path d="M0.5 1.5H9.5M0.5 4H9.5M0.5 6.5H9.5" stroke="#5a5a5a" stroke-width="1"/></svg><div class="abs dd" style="left:798px;top:185px;width:68.5px;height:17px"></div><svg class="abs" style="left:803px;top:188.5px" width="10" height="10" viewBox="0 0 10 10"><circle cx="3.8" cy="3.8" r="2.7" fill="none" stroke="#222" stroke-width="1.4"/><path d="M5.8 5.8L8.8 8.8" stroke="#222" stroke-width="1.6" stroke-linecap="round"/></svg><div class="abs t" style="left:815.5px;top:187.5px;font-size:9.6px;font-weight:bold;color:#222">类型</div><svg class="abs" style="left:857px;top:191px" width="8" height="6" viewBox="0 0 8 6"><path d="M1 1.2L4 4.4L7 1.2" fill="none" stroke="#4a4a4a" stroke-width="1.1"/></svg><svg class="abs" style="left:878px;top:187px" width="112" height="14" viewBox="0 0 112 14"><rect x="1.5" y="2" width="9.5" height="8" rx="1" fill="none" stroke="#222" stroke-width="1.2"/><path d="M3 8.5L5 5.5L6.5 7.5L8 6L9.5 8.5Z" fill="#222"/><circle cx="26" cy="6" r="4" fill="none" stroke="#222" stroke-width="1.2"/><path d="M23.2 8.8A4 4 0 0 0 28.8 3.2Z" fill="#222"/><path d="M42.5 2.3H50.5V4.4H49.6V3.4H47.3V9.6H48.4V10.5H44.6V9.6H45.7V3.4H43.4V4.4H42.5Z" fill="#222"/><rect x="62.5" y="2.8" width="7" height="6.6" fill="none" stroke="#222" stroke-width="1.1"/><path d="M61 1.3h3v3h-3zM68 1.3h3v3h-3zM61 8h3v3h-3zM68 8h3v3h-3z" fill="#222"/><path d="M82.5 1.5H87L89.5 4V10.5H82.5Z" fill="none" stroke="#222" stroke-width="1.1"/><rect x="84.5" y="6" width="5.5" height="4.5" fill="#222"/><path d="M85.6 6V4.8a1.6 1.6 0 0 1 3.2 0V6" fill="none" stroke="#222" stroke-width="0.9"/></svg><div class="abs" style="left:981px;top:185px;width:6.5px;height:17px;border-radius:3.5px;background:#cfcfcf;box-shadow:0 0 0 0.5px #9d9d9d"></div><div class="abs" style="left:981px;top:184.5px;width:6.5px;height:6.5px;border-radius:50%;background:#2a2a2a"></div><div class="abs sep" style="top:204px"></div><div class="abs dd" style="left:798px;top:209px;width:93px;height:16px"></div><div class="abs t" style="left:805px;top:211px;font-size:9.6px;color:#1a1a1a">正常</div><svg class="abs" style="left:882px;top:214.5px" width="8" height="6" viewBox="0 0 8 6"><path d="M1 1.2L4 4.4L7 1.2" fill="none" stroke="#4a4a4a" stroke-width="1.1"/></svg><div class="abs t" style="left:897px;top:210.5px;font-size:9.6px;color:#2a2a2a">不透明度:</div><div class="abs dd" style="left:944px;top:209px;width:30px;height:16px;border-radius:2px 0 0 2px"></div><div class="abs t" style="left:947px;top:211px;font-size:9.6px;letter-spacing:-0.3px">100%</div><div class="abs dd" style="left:975.5px;top:209px;width:12px;height:16px;background:#c6c6c6;border-radius:0 2px 2px 0"></div><svg class="abs" style="left:977.5px;top:214.5px" width="8" height="6" viewBox="0 0 8 6"><path d="M1 1.2L4 4.4L7 1.2" fill="none" stroke="#3a3a3a" stroke-width="1.1"/></svg><div class="abs sep" style="top:227.5px"></div><div class="abs t" style="left:799px;top:233.5px;font-size:9.6px;color:#2a2a2a">锁定 :</div><svg class="abs" style="left:828px;top:232px" width="100" height="15" viewBox="0 0 100 15"><rect x="1.5" y="2.5" width="9" height="9" fill="none" stroke="#222" stroke-width="1"/><path d="M3 4h2v2h-2zM7 4h2v2h-2zM5 6h2v2h-2zM3 8h2v2h-2zM7 8h2v2h-2z" fill="#222"/><path d="M28.2 1.2L30 2.8L24.6 8.6L22.8 7Z" fill="#222"/><path d="M22.3 7.6L24.2 9.3C23.8 11.6 21.3 12.8 18.8 12.4C20.6 11.2 20.4 8.6 22.3 7.6Z" fill="#222"/><path d="M43 1.5L45 4H43.6V6.4H46V5L48.5 7L46 9V7.6H43.6V10H45L43 12.5L41 10H42.4V7.6H40V9L37.5 7L40 5V6.4H42.4V4H41Z" fill="#222"/><path d="M57 3V10.5H66.5M54.8 5H64V12.8" fill="none" stroke="#222" stroke-width="1.2"/><path d="M65.2 3.6L59 9.4" stroke="#222" stroke-width="0.8" stroke-dasharray="1.2 1"/><rect x="74" y="6.5" width="8" height="6" rx="0.8" fill="#222"/><path d="M75.8 6.5V4.8a2.2 2.2 0 0 1 4.4 0V6.5" fill="none" stroke="#222" stroke-width="1.3"/></svg><div class="abs t" style="left:917px;top:233.5px;font-size:9.6px;color:#2a2a2a">填充 :</div><div class="abs dd" style="left:944px;top:232px;width:30px;height:14.5px;border-radius:2px 0 0 2px"></div><div class="abs t" style="left:947px;top:233.5px;font-size:9.6px;letter-spacing:-0.3px">100%</div><div class="abs dd" style="left:975.5px;top:232px;width:12px;height:14.5px;background:#c6c6c6;border-radius:0 2px 2px 0"></div><svg class="abs" style="left:977.5px;top:237px" width="8" height="6" viewBox="0 0 8 6"><path d="M1 1.2L4 4.4L7 1.2" fill="none" stroke="#3a3a3a" stroke-width="1.1"/></svg><div class="abs" style="left:794px;top:251.5px;width:197.5px;height:409px;background:#b4b4b4"></div><div class="abs" style="left:978px;top:251.5px;width:13.5px;height:409px;background:#adadad"></div><div class="abs" style="left:794px;top:252.6px;width:184px;height:34.0px;background:#b8b8b8"></div><div class="abs rsep" style="top:286.1px"></div><svg class="abs" style="left:800.3px;top:265.5px" width="12.3" height="8.8" viewBox="-7 -5 14 10"><path d="M-6.2 0C-3.8 -4.6 3.8 -4.6 6.2 0C3.8 4.6 -3.8 4.6 -6.2 0Z" fill="#1a1a1a"/><circle r="2.9" fill="#b8b8b8"/><circle r="1.7" fill="#1a1a1a"/></svg><div class="abs thumb" style="left:823.0px;top:257.1px;width:25px;height:25px"><svg width="25" height="25" viewBox="-12.5 -12.5 25 25"><circle r="7.5" fill="none" stroke="#3f5e66" stroke-width="1.6" stroke-dasharray="1.6 2.2"/><circle r="4" fill="none" stroke="#6f8f96" stroke-width="1" stroke-dasharray="1 2"/></svg></div><div class="abs lname" style="top:262.9px">图层 5</div><div class="abs" style="left:794px;top:286.6px;width:184px;height:34.0px;background:#b8b8b8"></div><div class="abs rsep" style="top:320.1px"></div><svg class="abs" style="left:800.3px;top:299.5px" width="12.3" height="8.8" viewBox="-7 -5 14 10"><path d="M-6.2 0C-3.8 -4.6 3.8 -4.6 6.2 0C3.8 4.6 -3.8 4.6 -6.2 0Z" fill="#1a1a1a"/><circle r="2.9" fill="#b8b8b8"/><circle r="1.7" fill="#1a1a1a"/></svg><div class="abs thumb" style="left:823.0px;top:291.1px;width:25px;height:25px"><svg width="25" height="25" viewBox="-12.5 -12.5 25 25"><circle r="1.6" fill="none" stroke="#9aa" stroke-width="0.8" stroke-dasharray="1 1"/></svg></div><div class="abs lname" style="top:296.9px">图层 6</div><div class="abs" style="left:794px;top:320.6px;width:184px;height:34.0px;background:#b8b8b8"></div><div class="abs rsep" style="top:354.1px"></div><svg class="abs" style="left:800.3px;top:333.5px" width="12.3" height="8.8" viewBox="-7 -5 14 10"><path d="M-6.2 0C-3.8 -4.6 3.8 -4.6 6.2 0C3.8 4.6 -3.8 4.6 -6.2 0Z" fill="#1a1a1a"/><circle r="2.9" fill="#b8b8b8"/><circle r="1.7" fill="#1a1a1a"/></svg><div class="abs thumb" style="left:823.0px;top:325.1px;width:25px;height:25px"><svg width="25" height="25" viewBox="-12.5 -12.5 25 25"><circle r="6.5" fill="none" stroke="#8fcbe0" stroke-width="3" stroke-dasharray="2.5 2.5"/></svg></div><div class="abs lname" style="top:330.9px">图层 7</div><div class="abs" style="left:794px;top:354.6px;width:184px;height:34.0px;background:#b8b8b8"></div><div class="abs rsep" style="top:388.1px"></div><svg class="abs" style="left:800.3px;top:367.5px" width="12.3" height="8.8" viewBox="-7 -5 14 10"><path d="M-6.2 0C-3.8 -4.6 3.8 -4.6 6.2 0C3.8 4.6 -3.8 4.6 -6.2 0Z" fill="#1a1a1a"/><circle r="2.9" fill="#b8b8b8"/><circle r="1.7" fill="#1a1a1a"/></svg><div class="abs thumb" style="left:823.0px;top:359.1px;width:25px;height:25px"><svg width="25" height="25" viewBox="-12.5 -12.5 25 25"><circle r="4.5" fill="none" stroke="#8a9aa0" stroke-width="1.2" stroke-dasharray="1.2 2.4"/></svg></div><div class="abs lname" style="top:364.9px">图层 8</div><div class="abs" style="left:794px;top:388.6px;width:184px;height:34.0px;background:#8e8e8e"></div><div class="abs" style="left:794px;top:388.6px;width:24.5px;height:34.0px;background:#b8b8b8"></div><div class="abs rsep" style="top:422.1px"></div><svg class="abs" style="left:800.3px;top:401.5px" width="12.3" height="8.8" viewBox="-7 -5 14 10"><path d="M-6.2 0C-3.8 -4.6 3.8 -4.6 6.2 0C3.8 4.6 -3.8 4.6 -6.2 0Z" fill="#1a1a1a"/><circle r="2.9" fill="#b8b8b8"/><circle r="1.7" fill="#1a1a1a"/></svg><div class="abs thumb" style="left:823.0px;top:393.1px;width:25px;height:25px"></div><svg class="abs" style="left:820.0px;top:390.1px" width="31" height="31" viewBox="0 0 31 31"><path d="M1 9V1H9M22 1H30V9M30 22V30H22M9 30H1V22" fill="none" stroke="#2a2a2a" stroke-width="1.6"/></svg><div class="abs lname" style="top:398.9px">图层 9</div><div class="abs" style="left:794px;top:422.6px;width:184px;height:34.0px;background:#b8b8b8"></div><div class="abs rsep" style="top:456.1px"></div><svg class="abs" style="left:800.3px;top:435.5px" width="12.3" height="8.8" viewBox="-7 -5 14 10"><path d="M-6.2 0C-3.8 -4.6 3.8 -4.6 6.2 0C3.8 4.6 -3.8 4.6 -6.2 0Z" fill="#1a1a1a"/><circle r="2.9" fill="#b8b8b8"/><circle r="1.7" fill="#1a1a1a"/></svg><div class="abs thumb" style="left:823.0px;top:427.1px;width:25px;height:25px"></div><div class="abs lname" style="top:432.9px">图层 2</div><div class="abs" style="left:794px;top:456.6px;width:184px;height:64.4px;background:#b8b8b8"></div><div class="abs rsep" style="top:520.5px"></div><svg class="abs" style="left:800.3px;top:469.5px" width="12.3" height="8.8" viewBox="-7 -5 14 10"><path d="M-6.2 0C-3.8 -4.6 3.8 -4.6 6.2 0C3.8 4.6 -3.8 4.6 -6.2 0Z" fill="#1a1a1a"/><circle r="2.9" fill="#b8b8b8"/><circle r="1.7" fill="#1a1a1a"/></svg><div class="abs thumb" style="left:823.0px;top:461.1px;width:25px;height:25px"></div><div class="abs" style="left:837.5px;top:476.6px;width:10.5px;height:10.5px;background:#d8d8d8;box-shadow:0 0 0 1px #2a2a2a"></div><svg class="abs" style="left:837.5px;top:476.6px" width="10" height="10" viewBox="0 0 10 10"><path d="M2.5 1.5H6L8 3.5V8.5H2.5Z" fill="#eee" stroke="#222" stroke-width="0.9"/><rect x="1.5" y="5" width="4" height="3.5" fill="#222"/></svg><div class="abs lname" style="top:466.9px">矢量智能对象</div><div class="abs" style="left:794px;top:521.0px;width:184px;height:34.0px;background:#b8b8b8"></div><div class="abs rsep" style="top:554.5px"></div><svg class="abs" style="left:800.3px;top:533.9px" width="12.3" height="8.8" viewBox="-7 -5 14 10"><path d="M-6.2 0C-3.8 -4.6 3.8 -4.6 6.2 0C3.8 4.6 -3.8 4.6 -6.2 0Z" fill="#1a1a1a"/><circle r="2.9" fill="#b8b8b8"/><circle r="1.7" fill="#1a1a1a"/></svg><div class="abs thumb" style="left:823.0px;top:525.5px;width:25px;height:25px"><svg width="25" height="25" viewBox="-12.5 -12.5 25 25"><path d="M9.6 0.0L9.4 0.8L9.0 1.6L8.4 2.3L8.0 2.9L7.7 3.6L7.6 4.4L7.5 5.2L7.2 6.1L6.8 6.8L6.1 7.2L5.2 7.5L4.4 7.6L3.6 7.7L2.9 8.0L2.3 8.4L1.6 9.0L0.8 9.4L0.0 9.6L-0.8 9.4L-1.6 9.0L-2.3 8.4L-2.9 8.0L-3.6 7.7L-4.4 7.6L-5.2 7.5L-6.1 7.2L-6.8 6.8L-7.2 6.1L-7.5 5.2L-7.6 4.4L-7.7 3.6L-8.0 2.9L-8.4 2.3L-9.0 1.6L-9.4 0.8L-9.6 0.0L-9.4 -0.8L-9.0 -1.6L-8.4 -2.3L-8.0 -2.9L-7.7 -3.6L-7.6 -4.4L-7.5 -5.2L-7.2 -6.1L-6.8 -6.8L-6.1 -7.2L-5.2 -7.5L-4.4 -7.6L-3.6 -7.7L-2.9 -8.0L-2.3 -8.4L-1.6 -9.0L-0.8 -9.4L-0.0 -9.6L0.8 -9.4L1.6 -9.0L2.3 -8.4L2.9 -8.0L3.6 -7.7L4.4 -7.6L5.2 -7.5L6.1 -7.2L6.8 -6.8L7.2 -6.1L7.5 -5.2L7.6 -4.4L7.7 -3.6L8.0 -2.9L8.4 -2.3L9.0 -1.6L9.4 -0.8Z" fill="#3c7be0"/></svg></div><div class="abs lname" style="top:531.3px">图层 3</div><div class="abs" style="left:794px;top:555.0px;width:184px;height:34.0px;background:#b8b8b8"></div><div class="abs rsep" style="top:588.5px"></div><svg class="abs" style="left:800.3px;top:567.9px" width="12.3" height="8.8" viewBox="-7 -5 14 10"><path d="M-6.2 0C-3.8 -4.6 3.8 -4.6 6.2 0C3.8 4.6 -3.8 4.6 -6.2 0Z" fill="#1a1a1a"/><circle r="2.9" fill="#b8b8b8"/><circle r="1.7" fill="#1a1a1a"/></svg><div class="abs thumb" style="left:823.0px;top:559.5px;width:25px;height:25px"><svg width="25" height="25" viewBox="-12.5 -12.5 25 25"><circle r="11.3" fill="#000"/></svg></div><div class="abs lname" style="top:565.3px">图层 1</div><div class="abs" style="left:794px;top:589.0px;width:184px;height:34.0px;background:#b8b8b8"></div><div class="abs rsep" style="top:622.5px"></div><svg class="abs" style="left:800.3px;top:601.9px" width="12.3" height="8.8" viewBox="-7 -5 14 10"><path d="M-6.2 0C-3.8 -4.6 3.8 -4.6 6.2 0C3.8 4.6 -3.8 4.6 -6.2 0Z" fill="#1a1a1a"/><circle r="2.9" fill="#b8b8b8"/><circle r="1.7" fill="#1a1a1a"/></svg><div class="abs" style="left:823.0px;top:593.5px;width:25px;height:25px;background:#c9b4b1;box-shadow:0 0 0 1px #2a2a2a"></div><div class="abs lname" style="top:599.3px">图层 4</div><div class="abs t" style="left:957px;top:467.5px;font-size:11px;font-style:italic;font-family:'Liberation Serif',serif;color:#222;line-height:12px"><span style="font-family:'Liberation Sans',sans-serif;font-size:11px">f</span><span style="font-family:'Liberation Sans',sans-serif;font-size:8.5px">x</span></div><div class="abs" style="left:970px;top:457px;width:8px;height:34px;background:#a5a5a5"></div><svg class="abs" style="left:970.5px;top:470.5px" width="7" height="6" viewBox="0 0 7 6"><path d="M0.8 4.6L3.5 1.6L6.2 4.6" fill="none" stroke="#3a3a3a" stroke-width="1.1"/></svg><svg class="abs" style="left:834.2px;top:493.8px" width="11.2" height="8.0" viewBox="-7 -5 14 10"><path d="M-6.2 0C-3.8 -4.6 3.8 -4.6 6.2 0C3.8 4.6 -3.8 4.6 -6.2 0Z" fill="#1a1a1a"/><circle r="2.9" fill="#b8b8b8"/><circle r="1.7" fill="#1a1a1a"/></svg><div class="abs t" style="left:849.5px;top:491.5px;font-size:9.6px;color:#111">效果</div><svg class="abs" style="left:848.0px;top:509.7px" width="11.2" height="8.0" viewBox="-7 -5 14 10"><path d="M-6.2 0C-3.8 -4.6 3.8 -4.6 6.2 0C3.8 4.6 -3.8 4.6 -6.2 0Z" fill="#1a1a1a"/><circle r="2.9" fill="#b8b8b8"/><circle r="1.7" fill="#1a1a1a"/></svg><div class="abs t" style="left:864px;top:507.5px;font-size:9.6px;color:#111">描边</div><div class="abs" style="left:818.5px;top:251.5px;width:1px;height:371px;background:#aaaaaa"></div><div class="abs" style="left:794px;top:660.5px;width:197.5px;height:1px;background:#a4a4a4"></div><div class="abs" style="left:794px;top:661.5px;width:197.5px;height:20.5px;background:#b8b8b8"></div><div class="abs" style="left:794px;top:682px;width:197.5px;height:1px;background:#a4a4a4"></div><div class="abs" style="left:794px;top:683px;width:197.5px;height:5px;background:#b4b4b4"></div><div class="abs" style="left:884px;top:684.5px;width:17px;height:2px;background:repeating-linear-gradient(90deg,#9a9a9a 0 1px,#b4b4b4 1px 2px)"></div><svg class="abs" style="left:824px;top:663px" width="150" height="18" viewBox="0 0 150 18"><g fill="none" stroke="#8c8c8c" stroke-width="1.3"><rect x="4" y="6" width="6.5" height="5" rx="2.5"/><rect x="9" y="6" width="6.5" height="5" rx="2.5"/></g><text x="26" y="13" font-family="Liberation Sans,sans-serif" font-style="italic" font-size="11.5" fill="#222">f</text><text x="30" y="13" font-family="Liberation Sans,sans-serif" font-style="italic" font-size="9" fill="#222">x</text><rect x="35" y="13" width="1.6" height="1.6" fill="#222"/><rect x="47" y="4.5" width="10.5" height="8" fill="#222"/><circle cx="52.2" cy="8.5" r="2.5" fill="#c8c8c8"/><circle cx="74.5" cy="8.7" r="3.9" fill="none" stroke="#222" stroke-width="1.1"/><path d="M71.8 11.4A3.9 3.9 0 0 0 77.3 5.9Z" fill="#222"/><rect x="78.5" y="13" width="1.6" height="1.6" fill="#222"/><path d="M91.5 5.5H95L96 6.8H101V12.5H91.5Z" fill="none" stroke="#444" stroke-width="1.1"/><path d="M114.5 5H121.5V12H117L114.5 9.5Z" fill="none" stroke="#333" stroke-width="1.1"/><path d="M114.5 9.5H117V12" fill="none" stroke="#333" stroke-width="1"/><path d="M136 6.5H143L142.3 13H136.7Z" fill="none" stroke="#333" stroke-width="1.1"/><path d="M135 5.5H144M138 5.5V4.3H141V5.5M138.3 8V11.5M140.7 8V11.5" stroke="#333" stroke-width="1" fill="none"/></svg><div class="abs wm" style="left:15.5px;top:722.5px;font-size:20.6px;font-weight:bold;line-height:22px;text-shadow:0 0 1px rgba(0,0,0,.45)">昵图网</div><div class="abs wm" style="left:81.5px;top:726.5px;font-size:17.1px;font-weight:bold;line-height:22px;letter-spacing:-0.4px;text-shadow:0 0 1px rgba(0,0,0,.45)">www.nipic.com</div><div class="abs" style="left:787px;top:725px;width:227px;height:20px;background:#585858"></div><div class="abs wm" style="left:797px;top:727.5px;font-size:11px;line-height:15px;color:#e8e8e8">ID:25931120 NO:20220526112910619100</div></body></html>
